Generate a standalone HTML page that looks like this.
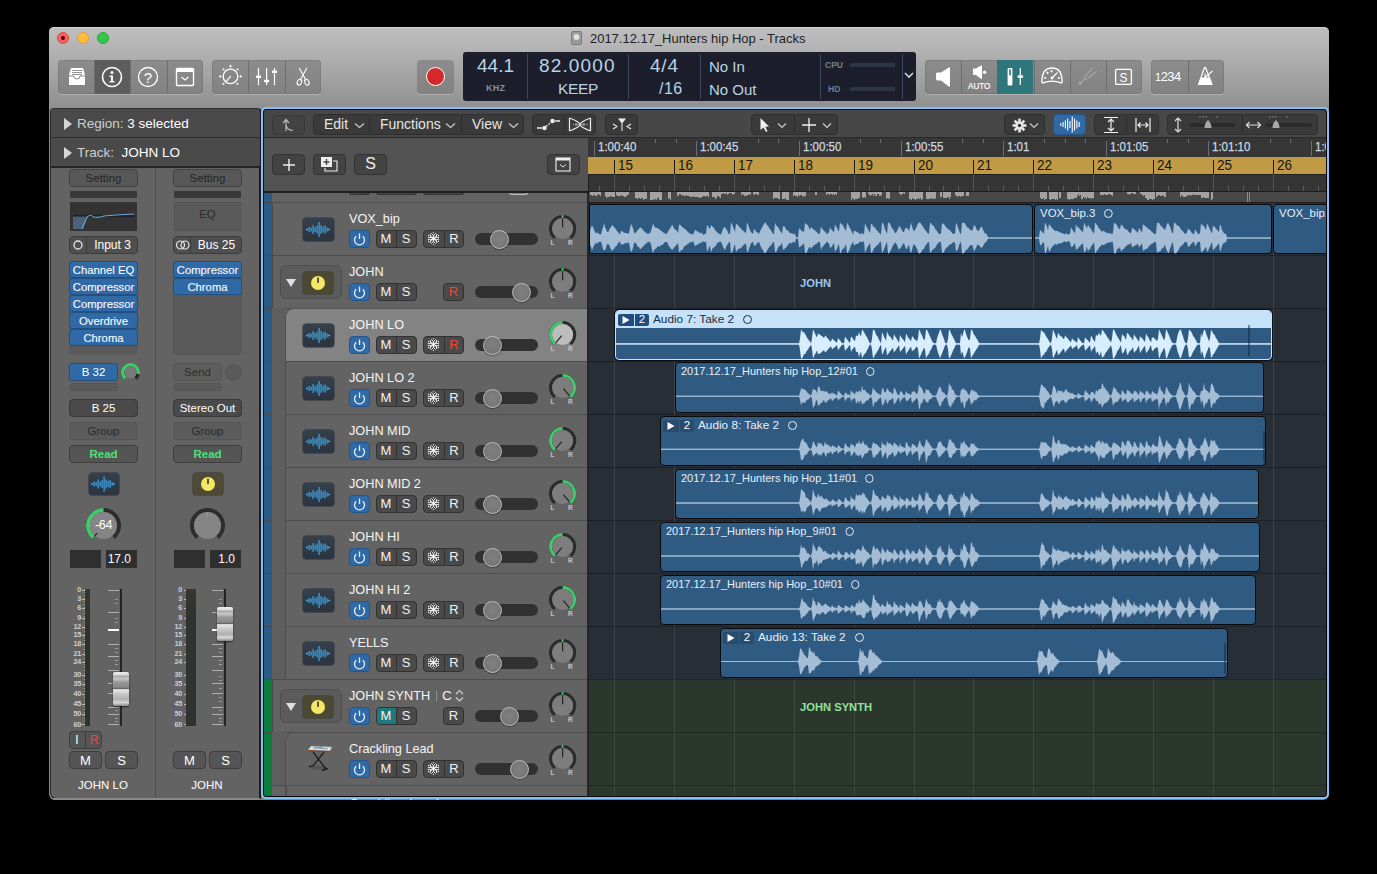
<!DOCTYPE html><html><head><meta charset="utf-8"><style>
html,body{margin:0;padding:0;background:#000;width:1377px;height:874px;overflow:hidden;}
body{font-family:"Liberation Sans",sans-serif;position:relative;}
div,svg{box-sizing:border-box;}
.t{position:absolute;white-space:nowrap;}
</style></head><body>
<div style="position:absolute;left:49px;top:27px;width:1280px;height:773px;background:#858585;border-radius:5px 5px 6px 6px;overflow:hidden;"></div>
<div style="position:absolute;left:49px;top:27px;width:1280px;height:82px;background:linear-gradient(#bebebe,#b6b6b6 20%,#a3a3a3 60%,#8f8f8f);border-radius:5px 5px 0 0;border-top:1px solid #d0d0d0;"></div>
<div style="position:absolute;left:57px;top:32px;width:12px;height:12px;background:#fc615d;border-radius:50%;border:0.5px solid #de4a46;"></div>
<div style="position:absolute;left:77px;top:32px;width:12px;height:12px;background:#fdbc40;border-radius:50%;border:0.5px solid #dea236;"></div>
<div style="position:absolute;left:97px;top:32px;width:12px;height:12px;background:#34c84a;border-radius:50%;border:0.5px solid #27a63a;"></div>
<div style="position:absolute;left:61px;top:36px;width:4px;height:4px;background:#4d0000;border-radius:50%;"></div>
<svg style="position:absolute;left:571px;top:31px;" width="12" height="15" viewBox="0 0 12 15"><rect x="0.5" y="0.5" width="10" height="13" rx="1" fill="#9a9a9a" stroke="#7a7a7a"/><circle cx="5.5" cy="6" r="3" fill="#e0e0e0"/></svg>
<div style="position:absolute;left:590px;top:31px;white-space:nowrap;font-size:13.5px;color:#222;letter-spacing:0px;transform:scaleX(0.96);transform-origin:0 0;">2017.12.17_Hunters hip Hop - Tracks</div>
<div style="position:absolute;left:58px;top:60px;width:145px;height:34px;background:linear-gradient(#8c8c8c,#828282);border-radius:4px;box-shadow:0 1px 0 rgba(255,255,255,0.25), inset 0 0 0 0.5px rgba(0,0,0,0.15);"></div>
<div style="position:absolute;left:94px;top:60px;width:1px;height:34px;background:#6e6e6e;"></div>
<div style="position:absolute;left:130px;top:60px;width:1px;height:34px;background:#6e6e6e;"></div>
<div style="position:absolute;left:167px;top:60px;width:1px;height:34px;background:#6e6e6e;"></div>
<div style="position:absolute;left:95px;top:60px;width:35px;height:34px;background:#5d5d5d;"></div>
<svg style="position:absolute;left:67px;top:66px;" width="20" height="22" viewBox="0 0 20 22"><path d="M2 9 L4 2 H16 L18 9 V19 H2 Z" fill="#fff"/><path d="M5 4.5H15M5 6.5H15M5 8.5H15" stroke="#888" stroke-width="0.9"/><path d="M2 10 H7 Q7 13 10 13 Q13 13 13 10 H18" stroke="#888" stroke-width="1" fill="none"/></svg>
<svg style="position:absolute;left:101px;top:66px;" width="22" height="22" viewBox="0 0 22 22"><circle cx="11" cy="11" r="9.5" stroke="#fff" stroke-width="1.6" fill="none"/><circle cx="11" cy="6.5" r="1.5" fill="#fff"/><path d="M8.5 9.5H12V15H13.5V16.5H8.5V15H10V11H8.5Z" fill="#fff"/></svg>
<svg style="position:absolute;left:137px;top:66px;" width="22" height="22" viewBox="0 0 22 22"><circle cx="11" cy="11" r="9.5" stroke="#fff" stroke-width="1.3" fill="none"/><text x="11" y="16.5" font-size="15" text-anchor="middle" fill="#fff" font-family="Liberation Sans">?</text></svg>
<svg style="position:absolute;left:175px;top:67px;" width="20" height="20" viewBox="0 0 20 20"><rect x="1.5" y="1.5" width="17" height="17" rx="1" stroke="#fff" stroke-width="1.4" fill="none"/><rect x="1.5" y="1.5" width="17" height="3.5" fill="#fff"/><path d="M6.5 10 L10 13 L13.5 10" stroke="#fff" stroke-width="1.2" fill="none"/></svg>
<div style="position:absolute;left:212px;top:60px;width:109px;height:34px;background:linear-gradient(#8c8c8c,#828282);border-radius:4px;box-shadow:0 1px 0 rgba(255,255,255,0.25), inset 0 0 0 0.5px rgba(0,0,0,0.15);"></div>
<div style="position:absolute;left:248px;top:60px;width:1px;height:34px;background:#6e6e6e;"></div>
<div style="position:absolute;left:285px;top:60px;width:1px;height:34px;background:#6e6e6e;"></div>
<svg style="position:absolute;left:218px;top:62px;" width="26" height="28" viewBox="0 0 26 28"><circle cx="12.5" cy="14.4" r="7.3" stroke="#fff" stroke-width="1.3" fill="none"/><path d="M8 19.6 L12.8 14.2" stroke="#fff" stroke-width="1.2"/><path d="M12.5 2.8V5.6M11.1 4.2H13.9M2.3 13V15.8M0.9 14.4H3.7M22.7 13V15.8M21.3 14.4H24.1" stroke="#fff" stroke-width="0.9"/><rect x="4.6" y="6.5" width="1.8" height="1.8" fill="#fff"/><rect x="18.6" y="6.5" width="1.8" height="1.8" fill="#fff"/><rect x="4.6" y="20.9" width="1.8" height="1.8" fill="#fff"/><rect x="18.6" y="20.9" width="1.8" height="1.8" fill="#fff"/></svg>
<svg style="position:absolute;left:250px;top:62px;" width="32" height="28" viewBox="0 0 32 28"><path d="M8.5 6V23M16.6 6V23M24.5 6V23" stroke="#fff" stroke-width="1.2"/><rect x="6" y="13.6" width="5" height="2.4" fill="#fff"/><rect x="14.1" y="17.8" width="5" height="2.4" fill="#fff"/><rect x="22" y="8.6" width="5" height="2.4" fill="#fff"/></svg>
<svg style="position:absolute;left:294px;top:62px;" width="20" height="28" viewBox="0 0 20 28"><path d="M5.2 6 L11.6 17.6 M12.9 6 L6.5 17.6" stroke="#fff" stroke-width="1.1" fill="none"/><ellipse cx="5.4" cy="20.2" rx="2.1" ry="3" transform="rotate(20 5.4 20.2)" stroke="#fff" stroke-width="1.1" fill="none"/><ellipse cx="12.9" cy="20.2" rx="2.1" ry="3" transform="rotate(-20 12.9 20.2)" stroke="#fff" stroke-width="1.1" fill="none"/></svg>
<div style="position:absolute;left:417px;top:60px;width:37px;height:34px;background:linear-gradient(#8c8c8c,#828282);border-radius:4px;box-shadow:0 1px 0 rgba(255,255,255,0.25);"></div>
<div style="position:absolute;left:426px;top:67px;width:19px;height:19px;background:#d42a2a;border-radius:50%;border:1.5px solid #fff;"></div>
<div style="position:absolute;left:463px;top:52px;width:453px;height:49px;background:#1c1f2b;border-radius:3px;"></div>
<div style="position:absolute;left:527px;top:54px;width:1px;height:45px;background:#3a4a60;"></div>
<div style="position:absolute;left:628px;top:54px;width:1px;height:45px;background:#3a4a60;"></div>
<div style="position:absolute;left:700px;top:54px;width:1px;height:45px;background:#3a4a60;"></div>
<div style="position:absolute;left:820px;top:54px;width:1px;height:45px;background:#3a4a60;"></div>
<div style="position:absolute;left:902px;top:54px;width:1px;height:45px;background:#3a4a60;"></div>
<div style="position:absolute;left:477px;top:55px;white-space:nowrap;font-size:19px;color:#b9d3e6;">44.1</div>
<div style="position:absolute;left:486px;top:83px;white-space:nowrap;font-size:9px;color:#7d8fa3;font-weight:bold;letter-spacing:0.3px;">KHZ</div>
<div style="position:absolute;left:539px;top:55px;white-space:nowrap;font-size:19px;color:#b9d3e6;letter-spacing:1.15px;">82.0000</div>
<div style="position:absolute;left:558px;top:80px;white-space:nowrap;font-size:15.5px;color:#b9d3e6;letter-spacing:-0.3px;">KEEP</div>
<div style="position:absolute;left:650px;top:55px;white-space:nowrap;font-size:19px;color:#b9d3e6;letter-spacing:0.8px;">4/4</div>
<div style="position:absolute;left:659px;top:80px;white-space:nowrap;font-size:16px;color:#b9d3e6;letter-spacing:0.5px;">/16</div>
<div style="position:absolute;left:709px;top:58px;white-space:nowrap;font-size:15px;color:#b9d3e6;">No In</div>
<div style="position:absolute;left:709px;top:81px;white-space:nowrap;font-size:15px;color:#b9d3e6;">No Out</div>
<div style="position:absolute;left:825px;top:60px;white-space:nowrap;font-size:8.5px;color:#6f7f92;font-weight:bold;">CPU</div>
<div style="position:absolute;left:828px;top:84px;white-space:nowrap;font-size:8.5px;color:#6f7f92;font-weight:bold;">HD</div>
<div style="position:absolute;left:850px;top:63px;width:45px;height:4px;background:#2d3545;"></div>
<div style="position:absolute;left:850px;top:87px;width:45px;height:4px;background:#2d3545;"></div>
<svg style="position:absolute;left:903px;top:70px;" width="12" height="10" viewBox="0 0 12 10"><path d="M2 3 L6 7 L10 3" stroke="#c8d8e8" stroke-width="1.6" fill="none"/></svg>
<div style="position:absolute;left:925px;top:60px;width:217px;height:34px;background:linear-gradient(#8c8c8c,#828282);border-radius:4px;box-shadow:0 1px 0 rgba(255,255,255,0.25), inset 0 0 0 0.5px rgba(0,0,0,0.15);"></div>
<div style="position:absolute;left:961px;top:60px;width:1px;height:34px;background:#6e6e6e;"></div>
<div style="position:absolute;left:997px;top:60px;width:1px;height:34px;background:#6e6e6e;"></div>
<div style="position:absolute;left:1034px;top:60px;width:1px;height:34px;background:#6e6e6e;"></div>
<div style="position:absolute;left:1070px;top:60px;width:1px;height:34px;background:#6e6e6e;"></div>
<div style="position:absolute;left:1106px;top:60px;width:1px;height:34px;background:#6e6e6e;"></div>
<div style="position:absolute;left:997px;top:60px;width:36px;height:34px;background:#2f767c;"></div>
<svg style="position:absolute;left:934px;top:64px;" width="20" height="26" viewBox="0 0 20 26"><path d="M3.5 8.5 Q2 8.5 2 10 V15 Q2 16.5 3.5 16.5 H7 L14 22 Q16 23.5 16 21.5 V4.5 Q16 2.5 14 4 L7 8.5 Z" fill="#fff"/></svg>
<svg style="position:absolute;left:970px;top:64px;" width="20" height="17" viewBox="0 0 20 17"><path d="M3.8 4.5 Q3 4.5 3 5.5 V10 Q3 11 4 11 H6 L10.5 14.6 Q12 15.6 12 14 V2.2 Q12 0.8 10.5 1.8 L6 4.5 Z" fill="#fff"/><circle cx="14.6" cy="8.2" r="1.7" fill="#fff"/></svg>
<div style="position:absolute;left:968px;top:80.5px;white-space:nowrap;font-size:8.8px;color:#fff;transform:scaleX(0.92);transform-origin:0 0;-webkit-text-stroke:0.2px #fff;">AUTO</div>
<svg style="position:absolute;left:1003px;top:66px;" width="24" height="22" viewBox="0 0 24 22"><rect x="4.6" y="2" width="4.8" height="17.5" rx="1" fill="#fff"/><rect x="6.2" y="3.2" width="1.6" height="6.2" fill="#2f767c"/><path d="M17.3 2V19" stroke="#fff" stroke-width="1.2"/><rect x="14.7" y="9.4" width="5.4" height="2.4" fill="#fff"/></svg>
<svg style="position:absolute;left:1040px;top:65px;" width="24" height="22" viewBox="0 0 24 22"><path d="M3 17.8 Q1.8 17.8 1.9 16.5 Q2 3 12 3 Q22 3 22.1 16.5 Q22.2 17.8 21 17.8 Q12 14.5 3 17.8 Z" stroke="#fff" stroke-width="1.4" fill="none" stroke-linejoin="round"/><circle cx="12" cy="13" r="1.4" fill="#fff"/><path d="M12 13 L17 8" stroke="#fff" stroke-width="1.3" stroke-linecap="round"/><path d="M7.5 6.5v2.6M6.2 7.8h2.6M11.6 4.8v2.6M10.3 6.1h2.6" stroke="#fff" stroke-width="0.9"/><rect x="4.3" y="12" width="1.8" height="1.8" fill="#fff"/><rect x="18" y="12" width="1.8" height="1.8" fill="#fff"/></svg>
<svg style="position:absolute;left:1075px;top:66px;" width="24" height="22" viewBox="0 0 24 22"><circle cx="5.2" cy="17.3" r="1.5" fill="#a9a9a9"/><path d="M5.2 17.3 L9.6 12.8" stroke="#a9a9a9" stroke-width="1.2"/><path d="M18 1.5 L10.2 10.2 Q8.8 12.2 10 13 Q11 13.8 12.8 12.3 L21.8 5.4" stroke="#a9a9a9" stroke-width="1.1" fill="none"/></svg>
<svg style="position:absolute;left:1114px;top:68px;" width="19" height="18" viewBox="0 0 19 18"><rect x="1.6" y="1.3" width="15.8" height="15" rx="1.2" stroke="#fff" stroke-width="1.3" fill="none"/><text x="9.5" y="13.6" font-size="12" text-anchor="middle" fill="#fff" font-family="Liberation Sans">S</text></svg>
<div style="position:absolute;left:1151px;top:60px;width:73px;height:34px;background:linear-gradient(#8c8c8c,#828282);border-radius:4px;box-shadow:0 1px 0 rgba(255,255,255,0.25), inset 0 0 0 0.5px rgba(0,0,0,0.15);"></div>
<div style="position:absolute;left:1188px;top:60px;width:1px;height:34px;background:#6e6e6e;"></div>
<div style="position:absolute;left:1155px;top:69px;white-space:nowrap;font-size:13px;color:#fff;letter-spacing:-0.5px;"><span style='font-size:11px'>1</span>234</div>
<svg style="position:absolute;left:1196px;top:66px;" width="20" height="20" viewBox="0 0 20 20"><path d="M2.5 18.5 L8.5 1.5 H9.5 L16 18.5 Z" stroke="#fff" stroke-width="1.2" fill="none" stroke-linejoin="round"/><path d="M2.5 18.5 L5 11.5 H13.4 L16 18.5 Z" fill="#fff"/><path d="M9 12 V7.5 M8.5 12 L16.5 5" stroke="#fff" stroke-width="1.1"/></svg>
<div style="position:absolute;left:51px;top:109px;width:209px;height:689px;background:#636363;border-radius:3px 3px 0 5px;box-shadow:0 0 0 1px #2b2b2b;"></div>
<div style="position:absolute;left:259px;top:109px;width:2px;height:690px;background:#1e1c1b;"></div>
<div style="position:absolute;left:51px;top:109px;width:209px;height:29px;background:#4a4a4a;border-bottom:1px solid #2c2c2c;border-radius:3px 3px 0 0;"></div>
<div style="position:absolute;left:51px;top:138px;width:209px;height:30px;background:#4a4a4a;border-bottom:2px solid #252525;"></div>
<svg style="position:absolute;left:63px;top:117px;" width="10" height="14" viewBox="0 0 10 14"><path d="M1 1 L9 7 L1 13Z" fill="#d6d6d6"/></svg>
<div style="position:absolute;left:77px;top:116px;white-space:nowrap;font-size:13.5px;"><span style="color:#cfcfcf">Region:</span> <span style="color:#fff">3 selected</span></div>
<svg style="position:absolute;left:63px;top:146px;" width="10" height="14" viewBox="0 0 10 14"><path d="M1 1 L9 7 L1 13Z" fill="#d6d6d6"/></svg>
<div style="position:absolute;left:77px;top:145px;white-space:nowrap;font-size:13.5px;"><span style="color:#cfcfcf">Track:</span>&nbsp; <span style="color:#fff">JOHN LO</span></div>
<div style="position:absolute;left:155px;top:168px;width:1px;height:630px;background:#4e4e4e;"></div>
<div style="position:absolute;left:69px;top:169px;width:69px;height:18px;background:#585858;border:1px solid #434343;border-radius:4px;"><div style="position:absolute;left:0;right:0;top:0;bottom:0;display:flex;align-items:center;justify-content:center;font-size:11.5px;color:#262626;">Setting</div></div>
<div style="position:absolute;left:70px;top:191px;width:67px;height:7px;background:#383838;border-radius:1px;"></div>
<div style="position:absolute;left:173px;top:169px;width:69px;height:18px;background:#585858;border:1px solid #434343;border-radius:4px;"><div style="position:absolute;left:0;right:0;top:0;bottom:0;display:flex;align-items:center;justify-content:center;font-size:11.5px;color:#262626;">Setting</div></div>
<div style="position:absolute;left:174px;top:191px;width:67px;height:7px;background:#383838;border-radius:1px;"></div>
<div style="position:absolute;left:70px;top:202px;width:67px;height:29px;background:#333;"></div>
<svg style="position:absolute;left:70px;top:202px;" width="67" height="29" viewBox="0 0 67 29"><path d="M3 14 H16 L13 27 H3Z" fill="#4c6178"/><path d="M3 14 H64" stroke="#111" stroke-width="1"/><path d="M12 27 L17 15 Q20 12 24 15 Q28 16 34 14 Q45 13 64 12" stroke="#6aa6e0" stroke-width="1.2" fill="none"/></svg>
<div style="position:absolute;left:174px;top:202px;width:67px;height:29px;background:#5a5a5a;border:1px solid #555;"></div>
<div style="position:absolute;left:174px;top:208px;white-space:nowrap;font-size:11.5px;color:#2a2a2a;width:67px;text-align:center;">EQ</div>
<div style="position:absolute;left:69px;top:236px;width:69px;height:18px;background:#4f4f4f;border:1px solid #3c3c3c;border-radius:4px;"></div>
<div style="position:absolute;left:86px;top:237px;width:1px;height:16px;background:#3a3a3a;"></div>
<svg style="position:absolute;left:72px;top:239px;" width="12" height="12" viewBox="0 0 12 12"><circle cx="6" cy="6" r="4" stroke="#e8e8e8" stroke-width="1.3" fill="none"/></svg>
<div style="position:absolute;left:87px;top:238px;white-space:nowrap;font-size:12px;color:#fff;width:51px;text-align:center;">Input 3</div>
<div style="position:absolute;left:173px;top:236px;width:69px;height:18px;background:#4f4f4f;border:1px solid #3c3c3c;border-radius:4px;"></div>
<div style="position:absolute;left:190px;top:237px;width:1px;height:16px;background:#3a3a3a;"></div>
<svg style="position:absolute;left:175px;top:239px;" width="16" height="12" viewBox="0 0 16 12"><circle cx="5.5" cy="6" r="4" stroke="#e8e8e8" stroke-width="1.2" fill="none"/><circle cx="10" cy="6" r="4" stroke="#e8e8e8" stroke-width="1.2" fill="none"/></svg>
<div style="position:absolute;left:191px;top:238px;white-space:nowrap;font-size:12px;color:#fff;width:51px;text-align:center;">Bus 25</div>
<div style="position:absolute;left:69px;top:261px;width:69px;height:94px;background:#5a5a5a;border-radius:4px;"></div>
<div style="position:absolute;left:69px;top:261px;width:69px;height:17px;background:#2f6aa6;border:1px solid #254f7e;border-radius:3px;"><div style="position:absolute;left:0;right:0;top:2px;text-align:center;font-size:11.3px;color:#f6f9fc;letter-spacing:0px;-webkit-text-stroke:0.12px #fff;">Channel EQ</div></div>
<div style="position:absolute;left:69px;top:278px;width:69px;height:17px;background:#2f6aa6;border:1px solid #254f7e;border-radius:3px;"><div style="position:absolute;left:0;right:0;top:2px;text-align:center;font-size:11.3px;color:#f6f9fc;letter-spacing:0px;-webkit-text-stroke:0.12px #fff;">Compressor</div></div>
<div style="position:absolute;left:69px;top:295px;width:69px;height:17px;background:#2f6aa6;border:1px solid #254f7e;border-radius:3px;"><div style="position:absolute;left:0;right:0;top:2px;text-align:center;font-size:11.3px;color:#f6f9fc;letter-spacing:0px;-webkit-text-stroke:0.12px #fff;">Compressor</div></div>
<div style="position:absolute;left:69px;top:312px;width:69px;height:17px;background:#2f6aa6;border:1px solid #254f7e;border-radius:3px;"><div style="position:absolute;left:0;right:0;top:2px;text-align:center;font-size:11.3px;color:#f6f9fc;letter-spacing:0px;-webkit-text-stroke:0.12px #fff;">Overdrive</div></div>
<div style="position:absolute;left:69px;top:329px;width:69px;height:17px;background:#2f6aa6;border:1px solid #254f7e;border-radius:3px;"><div style="position:absolute;left:0;right:0;top:2px;text-align:center;font-size:11.3px;color:#f6f9fc;letter-spacing:0px;-webkit-text-stroke:0.12px #fff;">Chroma</div></div>
<div style="position:absolute;left:173px;top:261px;width:69px;height:94px;background:#5a5a5a;border-radius:4px;border:1px solid #575757;"></div>
<div style="position:absolute;left:173px;top:261px;width:69px;height:17px;background:#2f6aa6;border:1px solid #254f7e;border-radius:3px;"><div style="position:absolute;left:0;right:0;top:2px;text-align:center;font-size:11.3px;color:#f6f9fc;letter-spacing:0px;-webkit-text-stroke:0.12px #fff;">Compressor</div></div>
<div style="position:absolute;left:173px;top:278px;width:69px;height:17px;background:#2f6aa6;border:1px solid #254f7e;border-radius:3px;"><div style="position:absolute;left:0;right:0;top:2px;text-align:center;font-size:11.3px;color:#f6f9fc;letter-spacing:0px;-webkit-text-stroke:0.12px #fff;">Chroma</div></div>
<div style="position:absolute;left:69px;top:363px;width:49px;height:18px;background:#2f6aa6;border:1px solid #254f7e;border-radius:3px;"><div style="position:absolute;left:0;right:0;top:2px;text-align:center;font-size:11.5px;color:#fff;">B 32</div></div>
<div style="position:absolute;left:70px;top:383px;width:48px;height:8px;background:#5a5a5a;border:1px solid #555;border-radius:3px;"></div>
<svg style="position:absolute;left:118.5px;top:360.5px;" width="23.0" height="23.0" viewBox="0 0 23.0 23.0"><path d="M6.52 17.44 A7.75 7.75 0 1 1 16.48 17.44" stroke="#2b2b2b" stroke-width="3.5" fill="none"/><path d="M6.52 17.44 A7.75 7.75 0 1 1 19.13 12.85" stroke="#3fcb6a" stroke-width="3.5" fill="none"/><circle cx="11.5" cy="11.5" r="6.0" fill="#7a7a7a"/></svg>
<div style="position:absolute;left:173px;top:363px;width:49px;height:18px;background:#585858;border:1px solid #434343;border-radius:4px;background:#5d5d5d;border-color:#555;"><div style="position:absolute;left:0;right:0;top:0;bottom:0;display:flex;align-items:center;justify-content:center;font-size:11.5px;color:#2e2e2e;">Send</div></div>
<div style="position:absolute;left:174px;top:383px;width:48px;height:8px;background:#5a5a5a;border:1px solid #555;border-radius:3px;"></div>
<div style="position:absolute;left:225px;top:364px;width:17px;height:17px;background:#5a5a5a;border-radius:50%;border:1px solid #545454;"></div>
<div style="position:absolute;left:69px;top:399px;width:69px;height:18px;background:#585858;border:1px solid #434343;border-radius:4px;background:#4a4a4a;border-color:#383838;"><div style="position:absolute;left:0;right:0;top:0;bottom:0;display:flex;align-items:center;justify-content:center;font-size:11.5px;color:#fff;">B 25</div></div>
<div style="position:absolute;left:173px;top:399px;width:69px;height:18px;background:#585858;border:1px solid #434343;border-radius:4px;background:#4a4a4a;border-color:#383838;"><div style="position:absolute;left:0;right:0;top:0;bottom:0;display:flex;align-items:center;justify-content:center;font-size:11.5px;color:#fff;">Stereo Out</div></div>
<div style="position:absolute;left:70px;top:422px;width:67px;height:18px;background:#5b5b5b;border:1px solid #555;"><div style="position:absolute;left:0;right:0;top:2px;text-align:center;font-size:11.5px;color:#2a2a2a;">Group</div></div>
<div style="position:absolute;left:69px;top:445px;width:69px;height:18px;background:#585858;border:1px solid #434343;border-radius:4px;background:#555;border-color:#3e3e3e;"><div style="position:absolute;left:0;right:0;top:0;bottom:0;display:flex;align-items:center;justify-content:center;font-size:11.5px;color:#4fe07a;font-weight:bold;">Read</div></div>
<div style="position:absolute;left:174px;top:422px;width:67px;height:18px;background:#5b5b5b;border:1px solid #555;"><div style="position:absolute;left:0;right:0;top:2px;text-align:center;font-size:11.5px;color:#2a2a2a;">Group</div></div>
<div style="position:absolute;left:173px;top:445px;width:69px;height:18px;background:#585858;border:1px solid #434343;border-radius:4px;background:#555;border-color:#3e3e3e;"><div style="position:absolute;left:0;right:0;top:0;bottom:0;display:flex;align-items:center;justify-content:center;font-size:11.5px;color:#4fe07a;font-weight:bold;">Read</div></div>
<div style="position:absolute;left:89px;top:473px;width:30px;height:22px;background:linear-gradient(#34404c,#2b3440);border-radius:3px;box-shadow:0 0 0 0.5px #2a2f36;"></div>
<svg style="position:absolute;left:89px;top:473px;" width="30" height="22" viewBox="0 0 30 22"><circle cx="3.0" cy="11.0" r="1.1" fill="#3ba6ea"/><rect x="4.5" y="8.50" width="1.2" height="5.00" fill="#3ba6ea"/><rect x="6.5" y="9.00" width="1.2" height="4.00" fill="#3ba6ea"/><rect x="8.5" y="6.50" width="1.2" height="9.00" fill="#3ba6ea"/><rect x="10.5" y="8.50" width="1.2" height="5.00" fill="#3ba6ea"/><rect x="12.5" y="7.00" width="1.2" height="8.00" fill="#3ba6ea"/><rect x="14.5" y="3.50" width="1.2" height="15.00" fill="#3ba6ea"/><rect x="16.5" y="6.50" width="1.2" height="9.00" fill="#3ba6ea"/><rect x="18.5" y="8.00" width="1.2" height="6.00" fill="#3ba6ea"/><rect x="20.5" y="7.00" width="1.2" height="8.00" fill="#3ba6ea"/><rect x="22.5" y="9.00" width="1.2" height="4.00" fill="#3ba6ea"/><circle cx="25.0" cy="11.0" r="1.1" fill="#3ba6ea"/></svg>
<div style="position:absolute;left:193px;top:473px;width:30px;height:22px;background:#4e4a35;border-radius:3px;box-shadow:0 0 0 0.5px #333;"></div>
<svg style="position:absolute;left:199px;top:476px;" width="18" height="16" viewBox="0 0 18 16"><circle cx="9" cy="8" r="7" fill="#f2e866"/><path d="M9 2.5 V8" stroke="#333" stroke-width="1.6"/></svg>
<svg style="position:absolute;left:84.0px;top:505.5px;" width="39.0" height="39.0" viewBox="0 0 39.0 39.0"><path d="M9.54 31.37 A15.5 15.5 0 1 1 29.46 31.37" stroke="#2d2d2d" stroke-width="4" fill="none"/><path d="M9.54 31.37 A15.5 15.5 0 0 1 19.50 4.00" stroke="#3fcb6a" stroke-width="4" fill="none"/><circle cx="19.5" cy="19.5" r="13.5" fill="#858585"/><path d="M12.99 27.26 L10.82 29.84" stroke="#222" stroke-width="1.2"/></svg>
<div style="position:absolute;left:83px;top:518px;white-space:nowrap;font-size:12.5px;color:#fff;width:41px;text-align:center;letter-spacing:-0.3px;">-64</div>
<svg style="position:absolute;left:188.0px;top:505.5px;" width="39.0" height="39.0" viewBox="0 0 39.0 39.0"><path d="M9.54 31.37 A15.5 15.5 0 1 1 29.46 31.37" stroke="#2d2d2d" stroke-width="4" fill="none"/><circle cx="19.5" cy="19.5" r="13.5" fill="#858585"/><path d="M19.50 11.40 L19.50 6.00" stroke="#3fcb6a" stroke-width="1.2"/></svg>
<div style="position:absolute;left:70px;top:550px;width:31px;height:18px;background:#2f2f2f;"></div>
<div style="position:absolute;left:106px;top:550px;width:31px;height:18px;background:#2f2f2f;"><div style="position:absolute;right:6px;top:2px;font-size:12px;color:#fff;">17.0</div></div>
<div style="position:absolute;left:174px;top:550px;width:31px;height:18px;background:#2f2f2f;"></div>
<div style="position:absolute;left:210px;top:550px;width:31px;height:18px;background:#2f2f2f;"><div style="position:absolute;right:6px;top:2px;font-size:12px;color:#fff;">1.0</div></div>
<div style="position:absolute;left:49px;top:585.4px;white-space:nowrap;font-size:7.2px;font-weight:bold;color:#cfcfcf;width:32px;text-align:right;letter-spacing:-0.2px;">0</div>
<div style="position:absolute;left:82px;top:590px;width:2.5px;height:1px;background:#bdbdbd;"></div>
<div style="position:absolute;left:49px;top:594.2px;white-space:nowrap;font-size:7.2px;font-weight:bold;color:#cfcfcf;width:32px;text-align:right;letter-spacing:-0.2px;">3</div>
<div style="position:absolute;left:82px;top:599px;width:2.5px;height:1px;background:#bdbdbd;"></div>
<div style="position:absolute;left:49px;top:603.4px;white-space:nowrap;font-size:7.2px;font-weight:bold;color:#cfcfcf;width:32px;text-align:right;letter-spacing:-0.2px;">6</div>
<div style="position:absolute;left:82px;top:608px;width:2.5px;height:1px;background:#bdbdbd;"></div>
<div style="position:absolute;left:49px;top:612.5px;white-space:nowrap;font-size:7.2px;font-weight:bold;color:#cfcfcf;width:32px;text-align:right;letter-spacing:-0.2px;">9</div>
<div style="position:absolute;left:82px;top:618px;width:2.5px;height:1px;background:#bdbdbd;"></div>
<div style="position:absolute;left:49px;top:621.6px;white-space:nowrap;font-size:7.2px;font-weight:bold;color:#cfcfcf;width:32px;text-align:right;letter-spacing:-0.2px;">12</div>
<div style="position:absolute;left:82px;top:627px;width:2.5px;height:1px;background:#bdbdbd;"></div>
<div style="position:absolute;left:49px;top:630.4px;white-space:nowrap;font-size:7.2px;font-weight:bold;color:#cfcfcf;width:32px;text-align:right;letter-spacing:-0.2px;">15</div>
<div style="position:absolute;left:82px;top:635px;width:2.5px;height:1px;background:#bdbdbd;"></div>
<div style="position:absolute;left:49px;top:639.4px;white-space:nowrap;font-size:7.2px;font-weight:bold;color:#cfcfcf;width:32px;text-align:right;letter-spacing:-0.2px;">18</div>
<div style="position:absolute;left:82px;top:644px;width:2.5px;height:1px;background:#bdbdbd;"></div>
<div style="position:absolute;left:49px;top:648.5px;white-space:nowrap;font-size:7.2px;font-weight:bold;color:#cfcfcf;width:32px;text-align:right;letter-spacing:-0.2px;">21</div>
<div style="position:absolute;left:82px;top:654px;width:2.5px;height:1px;background:#bdbdbd;"></div>
<div style="position:absolute;left:49px;top:657.3px;white-space:nowrap;font-size:7.2px;font-weight:bold;color:#cfcfcf;width:32px;text-align:right;letter-spacing:-0.2px;">24</div>
<div style="position:absolute;left:82px;top:662px;width:2.5px;height:1px;background:#bdbdbd;"></div>
<div style="position:absolute;left:49px;top:669.6px;white-space:nowrap;font-size:7.2px;font-weight:bold;color:#cfcfcf;width:32px;text-align:right;letter-spacing:-0.2px;">30</div>
<div style="position:absolute;left:82px;top:675px;width:2.5px;height:1px;background:#bdbdbd;"></div>
<div style="position:absolute;left:49px;top:679.4px;white-space:nowrap;font-size:7.2px;font-weight:bold;color:#cfcfcf;width:32px;text-align:right;letter-spacing:-0.2px;">35</div>
<div style="position:absolute;left:82px;top:684px;width:2.5px;height:1px;background:#bdbdbd;"></div>
<div style="position:absolute;left:49px;top:689.3px;white-space:nowrap;font-size:7.2px;font-weight:bold;color:#cfcfcf;width:32px;text-align:right;letter-spacing:-0.2px;">40</div>
<div style="position:absolute;left:82px;top:694px;width:2.5px;height:1px;background:#bdbdbd;"></div>
<div style="position:absolute;left:49px;top:699.4px;white-space:nowrap;font-size:7.2px;font-weight:bold;color:#cfcfcf;width:32px;text-align:right;letter-spacing:-0.2px;">45</div>
<div style="position:absolute;left:82px;top:704px;width:2.5px;height:1px;background:#bdbdbd;"></div>
<div style="position:absolute;left:49px;top:709.4px;white-space:nowrap;font-size:7.2px;font-weight:bold;color:#cfcfcf;width:32px;text-align:right;letter-spacing:-0.2px;">50</div>
<div style="position:absolute;left:82px;top:714px;width:2.5px;height:1px;background:#bdbdbd;"></div>
<div style="position:absolute;left:49px;top:719.5px;white-space:nowrap;font-size:7.2px;font-weight:bold;color:#cfcfcf;width:32px;text-align:right;letter-spacing:-0.2px;">60</div>
<div style="position:absolute;left:82px;top:724px;width:2.5px;height:1px;background:#bdbdbd;"></div>
<div style="position:absolute;left:84px;top:589px;width:1px;height:137px;background:repeating-linear-gradient(#b0b0b0 0 1px,transparent 1px 3px);opacity:0.8;"></div>
<div style="position:absolute;left:85px;top:589px;width:5px;height:137px;background:linear-gradient(#3a3530,#2e322e 30%);"></div>
<div style="position:absolute;left:120px;top:589px;width:2px;height:137px;background:#242424;"></div>
<div style="position:absolute;left:108px;top:590px;width:11px;height:1px;background:#b0b0b0;"></div>
<div style="position:absolute;left:108px;top:612px;width:11px;height:1px;background:#b0b0b0;"></div>
<div style="position:absolute;left:108px;top:629px;width:11px;height:1px;background:#fff;height:1.5px;"></div>
<div style="position:absolute;left:108px;top:644px;width:11px;height:1px;background:#b0b0b0;"></div>
<div style="position:absolute;left:108px;top:656px;width:11px;height:1px;background:#b0b0b0;"></div>
<div style="position:absolute;left:108px;top:670px;width:11px;height:1px;background:#b0b0b0;"></div>
<div style="position:absolute;left:108px;top:683px;width:11px;height:1px;background:#b0b0b0;"></div>
<div style="position:absolute;left:108px;top:693px;width:11px;height:1px;background:#b0b0b0;"></div>
<div style="position:absolute;left:108px;top:707px;width:11px;height:1px;background:#b0b0b0;"></div>
<div style="position:absolute;left:108px;top:714px;width:11px;height:1px;background:#b0b0b0;"></div>
<div style="position:absolute;left:108px;top:724px;width:11px;height:1px;background:#b0b0b0;"></div>
<div style="position:absolute;left:115px;top:599px;width:3px;height:1px;background:#9a9a9a;"></div>
<div style="position:absolute;left:115px;top:603px;width:3px;height:1px;background:#9a9a9a;"></div>
<div style="position:absolute;left:115px;top:618px;width:3px;height:1px;background:#9a9a9a;"></div>
<div style="position:absolute;left:115px;top:622px;width:3px;height:1px;background:#9a9a9a;"></div>
<div style="position:absolute;left:115px;top:648px;width:3px;height:1px;background:#9a9a9a;"></div>
<div style="position:absolute;left:115px;top:652px;width:3px;height:1px;background:#9a9a9a;"></div>
<div style="position:absolute;left:115px;top:660px;width:3px;height:1px;background:#9a9a9a;"></div>
<div style="position:absolute;left:115px;top:664px;width:3px;height:1px;background:#9a9a9a;"></div>
<div style="position:absolute;left:115px;top:676px;width:3px;height:1px;background:#9a9a9a;"></div>
<div style="position:absolute;left:115px;top:680px;width:3px;height:1px;background:#9a9a9a;"></div>
<div style="position:absolute;left:115px;top:688px;width:3px;height:1px;background:#9a9a9a;"></div>
<div style="position:absolute;left:115px;top:697px;width:3px;height:1px;background:#9a9a9a;"></div>
<div style="position:absolute;left:115px;top:701px;width:3px;height:1px;background:#9a9a9a;"></div>
<div style="position:absolute;left:115px;top:710px;width:3px;height:1px;background:#9a9a9a;"></div>
<div style="position:absolute;left:115px;top:718px;width:3px;height:1px;background:#9a9a9a;"></div>
<div style="position:absolute;left:115px;top:721px;width:3px;height:1px;background:#9a9a9a;"></div>
<div style="position:absolute;left:113px;top:671.5px;width:16px;height:34px;background:linear-gradient(#f0f0f0 0%,#dcdcdc 8%,#a8a8a8 12%,#c8c8c8 20%,#999 30%,#8a8a8a 45%,#555 48%,#e8e8e8 52%,#c8c8c8 65%,#b0b0b0 80%,#d8d8d8 90%,#888 100%);border-radius:2px;box-shadow:0 1px 2px rgba(0,0,0,0.6);"></div>
<div style="position:absolute;left:150px;top:585.4px;white-space:nowrap;font-size:7.2px;font-weight:bold;color:#cfcfcf;width:32px;text-align:right;letter-spacing:-0.2px;">0</div>
<div style="position:absolute;left:184px;top:590px;width:2.5px;height:1px;background:#bdbdbd;"></div>
<div style="position:absolute;left:150px;top:594.2px;white-space:nowrap;font-size:7.2px;font-weight:bold;color:#cfcfcf;width:32px;text-align:right;letter-spacing:-0.2px;">3</div>
<div style="position:absolute;left:184px;top:599px;width:2.5px;height:1px;background:#bdbdbd;"></div>
<div style="position:absolute;left:150px;top:603.4px;white-space:nowrap;font-size:7.2px;font-weight:bold;color:#cfcfcf;width:32px;text-align:right;letter-spacing:-0.2px;">6</div>
<div style="position:absolute;left:184px;top:608px;width:2.5px;height:1px;background:#bdbdbd;"></div>
<div style="position:absolute;left:150px;top:612.5px;white-space:nowrap;font-size:7.2px;font-weight:bold;color:#cfcfcf;width:32px;text-align:right;letter-spacing:-0.2px;">9</div>
<div style="position:absolute;left:184px;top:618px;width:2.5px;height:1px;background:#bdbdbd;"></div>
<div style="position:absolute;left:150px;top:621.6px;white-space:nowrap;font-size:7.2px;font-weight:bold;color:#cfcfcf;width:32px;text-align:right;letter-spacing:-0.2px;">12</div>
<div style="position:absolute;left:184px;top:627px;width:2.5px;height:1px;background:#bdbdbd;"></div>
<div style="position:absolute;left:150px;top:630.4px;white-space:nowrap;font-size:7.2px;font-weight:bold;color:#cfcfcf;width:32px;text-align:right;letter-spacing:-0.2px;">15</div>
<div style="position:absolute;left:184px;top:635px;width:2.5px;height:1px;background:#bdbdbd;"></div>
<div style="position:absolute;left:150px;top:639.4px;white-space:nowrap;font-size:7.2px;font-weight:bold;color:#cfcfcf;width:32px;text-align:right;letter-spacing:-0.2px;">18</div>
<div style="position:absolute;left:184px;top:644px;width:2.5px;height:1px;background:#bdbdbd;"></div>
<div style="position:absolute;left:150px;top:648.5px;white-space:nowrap;font-size:7.2px;font-weight:bold;color:#cfcfcf;width:32px;text-align:right;letter-spacing:-0.2px;">21</div>
<div style="position:absolute;left:184px;top:654px;width:2.5px;height:1px;background:#bdbdbd;"></div>
<div style="position:absolute;left:150px;top:657.3px;white-space:nowrap;font-size:7.2px;font-weight:bold;color:#cfcfcf;width:32px;text-align:right;letter-spacing:-0.2px;">24</div>
<div style="position:absolute;left:184px;top:662px;width:2.5px;height:1px;background:#bdbdbd;"></div>
<div style="position:absolute;left:150px;top:669.6px;white-space:nowrap;font-size:7.2px;font-weight:bold;color:#cfcfcf;width:32px;text-align:right;letter-spacing:-0.2px;">30</div>
<div style="position:absolute;left:184px;top:675px;width:2.5px;height:1px;background:#bdbdbd;"></div>
<div style="position:absolute;left:150px;top:679.4px;white-space:nowrap;font-size:7.2px;font-weight:bold;color:#cfcfcf;width:32px;text-align:right;letter-spacing:-0.2px;">35</div>
<div style="position:absolute;left:184px;top:684px;width:2.5px;height:1px;background:#bdbdbd;"></div>
<div style="position:absolute;left:150px;top:689.3px;white-space:nowrap;font-size:7.2px;font-weight:bold;color:#cfcfcf;width:32px;text-align:right;letter-spacing:-0.2px;">40</div>
<div style="position:absolute;left:184px;top:694px;width:2.5px;height:1px;background:#bdbdbd;"></div>
<div style="position:absolute;left:150px;top:699.4px;white-space:nowrap;font-size:7.2px;font-weight:bold;color:#cfcfcf;width:32px;text-align:right;letter-spacing:-0.2px;">45</div>
<div style="position:absolute;left:184px;top:704px;width:2.5px;height:1px;background:#bdbdbd;"></div>
<div style="position:absolute;left:150px;top:709.4px;white-space:nowrap;font-size:7.2px;font-weight:bold;color:#cfcfcf;width:32px;text-align:right;letter-spacing:-0.2px;">50</div>
<div style="position:absolute;left:184px;top:714px;width:2.5px;height:1px;background:#bdbdbd;"></div>
<div style="position:absolute;left:150px;top:719.5px;white-space:nowrap;font-size:7.2px;font-weight:bold;color:#cfcfcf;width:32px;text-align:right;letter-spacing:-0.2px;">60</div>
<div style="position:absolute;left:184px;top:724px;width:2.5px;height:1px;background:#bdbdbd;"></div>
<div style="position:absolute;left:189px;top:589px;width:1px;height:137px;background:repeating-linear-gradient(#b0b0b0 0 1px,transparent 1px 3px);opacity:0.8;"></div>
<div style="position:absolute;left:186px;top:589px;width:10px;height:137px;background:linear-gradient(#3a3430,#2f332f 15%);"></div>
<div style="position:absolute;left:224px;top:589px;width:2px;height:137px;background:#242424;"></div>
<div style="position:absolute;left:212px;top:590px;width:11px;height:1px;background:#b0b0b0;"></div>
<div style="position:absolute;left:212px;top:612px;width:11px;height:1px;background:#b0b0b0;"></div>
<div style="position:absolute;left:212px;top:629px;width:11px;height:1px;background:#fff;height:1.5px;"></div>
<div style="position:absolute;left:212px;top:644px;width:11px;height:1px;background:#b0b0b0;"></div>
<div style="position:absolute;left:212px;top:656px;width:11px;height:1px;background:#b0b0b0;"></div>
<div style="position:absolute;left:212px;top:670px;width:11px;height:1px;background:#b0b0b0;"></div>
<div style="position:absolute;left:212px;top:683px;width:11px;height:1px;background:#b0b0b0;"></div>
<div style="position:absolute;left:212px;top:693px;width:11px;height:1px;background:#b0b0b0;"></div>
<div style="position:absolute;left:212px;top:707px;width:11px;height:1px;background:#b0b0b0;"></div>
<div style="position:absolute;left:212px;top:714px;width:11px;height:1px;background:#b0b0b0;"></div>
<div style="position:absolute;left:212px;top:724px;width:11px;height:1px;background:#b0b0b0;"></div>
<div style="position:absolute;left:219px;top:599px;width:3px;height:1px;background:#9a9a9a;"></div>
<div style="position:absolute;left:219px;top:603px;width:3px;height:1px;background:#9a9a9a;"></div>
<div style="position:absolute;left:219px;top:618px;width:3px;height:1px;background:#9a9a9a;"></div>
<div style="position:absolute;left:219px;top:622px;width:3px;height:1px;background:#9a9a9a;"></div>
<div style="position:absolute;left:219px;top:648px;width:3px;height:1px;background:#9a9a9a;"></div>
<div style="position:absolute;left:219px;top:652px;width:3px;height:1px;background:#9a9a9a;"></div>
<div style="position:absolute;left:219px;top:660px;width:3px;height:1px;background:#9a9a9a;"></div>
<div style="position:absolute;left:219px;top:664px;width:3px;height:1px;background:#9a9a9a;"></div>
<div style="position:absolute;left:219px;top:676px;width:3px;height:1px;background:#9a9a9a;"></div>
<div style="position:absolute;left:219px;top:680px;width:3px;height:1px;background:#9a9a9a;"></div>
<div style="position:absolute;left:219px;top:688px;width:3px;height:1px;background:#9a9a9a;"></div>
<div style="position:absolute;left:219px;top:697px;width:3px;height:1px;background:#9a9a9a;"></div>
<div style="position:absolute;left:219px;top:701px;width:3px;height:1px;background:#9a9a9a;"></div>
<div style="position:absolute;left:219px;top:710px;width:3px;height:1px;background:#9a9a9a;"></div>
<div style="position:absolute;left:219px;top:718px;width:3px;height:1px;background:#9a9a9a;"></div>
<div style="position:absolute;left:219px;top:721px;width:3px;height:1px;background:#9a9a9a;"></div>
<div style="position:absolute;left:217px;top:606.5px;width:16px;height:34px;background:linear-gradient(#f0f0f0 0%,#dcdcdc 8%,#a8a8a8 12%,#c8c8c8 20%,#999 30%,#8a8a8a 45%,#555 48%,#e8e8e8 52%,#c8c8c8 65%,#b0b0b0 80%,#d8d8d8 90%,#888 100%);border-radius:2px;box-shadow:0 1px 2px rgba(0,0,0,0.6);"></div>
<div style="position:absolute;left:69px;top:731px;width:33px;height:18px;background:#555;border:1px solid #3d3d3d;border-radius:4px;"></div>
<div style="position:absolute;left:85px;top:732px;width:1px;height:16px;background:#3d3d3d;"></div>
<div style="position:absolute;left:69px;top:733px;white-space:nowrap;font-size:12px;color:#fff;width:16px;text-align:center;">I</div>
<div style="position:absolute;left:86px;top:733px;white-space:nowrap;font-size:12px;color:#ff3b3b;width:16px;text-align:center;">R</div>
<div style="position:absolute;left:69px;top:751px;width:33px;height:18px;background:#585858;border:1px solid #434343;border-radius:4px;background:#555;border-color:#3d3d3d;"><div style="position:absolute;left:0;right:0;top:0;bottom:0;display:flex;align-items:center;justify-content:center;font-size:13px;color:#fff;">M</div></div>
<div style="position:absolute;left:105px;top:751px;width:33px;height:18px;background:#585858;border:1px solid #434343;border-radius:4px;background:#555;border-color:#3d3d3d;"><div style="position:absolute;left:0;right:0;top:0;bottom:0;display:flex;align-items:center;justify-content:center;font-size:13px;color:#fff;">S</div></div>
<div style="position:absolute;left:51px;top:779px;white-space:nowrap;font-size:11.5px;color:#fff;width:104px;text-align:center;">JOHN LO</div>
<div style="position:absolute;left:173px;top:751px;width:33px;height:18px;background:#585858;border:1px solid #434343;border-radius:4px;background:#555;border-color:#3d3d3d;"><div style="position:absolute;left:0;right:0;top:0;bottom:0;display:flex;align-items:center;justify-content:center;font-size:13px;color:#fff;">M</div></div>
<div style="position:absolute;left:209px;top:751px;width:33px;height:18px;background:#585858;border:1px solid #434343;border-radius:4px;background:#555;border-color:#3d3d3d;"><div style="position:absolute;left:0;right:0;top:0;bottom:0;display:flex;align-items:center;justify-content:center;font-size:13px;color:#fff;">S</div></div>
<div style="position:absolute;left:155px;top:779px;white-space:nowrap;font-size:11.5px;color:#fff;width:104px;text-align:center;">JOHN</div>
<div style="position:absolute;left:264px;top:109px;width:1062px;height:29px;background:#474747;border-bottom:1px solid #2a2a2a;"></div>
<div style="position:absolute;left:272px;top:115px;width:33px;height:20px;background:#434343;border:1px solid #383838;border-radius:4px;"></div>
<svg style="position:absolute;left:280px;top:117px;" width="18" height="16" viewBox="0 0 18 16"><path d="M6 14 Q6 6 6 3 M3 6 L6 2.5 L9 6 M6 7 Q6 13 13 13.5" stroke="#b8b8b8" stroke-width="1.2" fill="none"/></svg>
<div style="position:absolute;left:313px;top:114px;width:211px;height:21px;background:#3a3a3a;border:1px solid #2f2f2f;border-radius:4px;"></div>
<div style="position:absolute;left:369px;top:115px;width:1px;height:19px;background:#2c2c2c;"></div>
<div style="position:absolute;left:461px;top:115px;width:1px;height:19px;background:#2c2c2c;"></div>
<div style="position:absolute;left:324px;top:116px;white-space:nowrap;font-size:14px;color:#e6e6e6;">Edit</div>
<svg style="position:absolute;left:354px;top:122px;" width="11" height="7" viewBox="0 0 11 7"><path d="M1 1.5 L5.5 5.5 L10 1.5" stroke="#cfcfcf" stroke-width="1.1" fill="none"/></svg>
<div style="position:absolute;left:380px;top:116px;white-space:nowrap;font-size:14px;color:#e6e6e6;">Functions</div>
<svg style="position:absolute;left:445px;top:122px;" width="11" height="7" viewBox="0 0 11 7"><path d="M1 1.5 L5.5 5.5 L10 1.5" stroke="#cfcfcf" stroke-width="1.1" fill="none"/></svg>
<div style="position:absolute;left:472px;top:116px;white-space:nowrap;font-size:14px;color:#e6e6e6;">View</div>
<svg style="position:absolute;left:508px;top:122px;" width="11" height="7" viewBox="0 0 11 7"><path d="M1 1.5 L5.5 5.5 L10 1.5" stroke="#cfcfcf" stroke-width="1.1" fill="none"/></svg>
<div style="position:absolute;left:532px;top:114px;width:64px;height:21px;background:#3a3a3a;border:1px solid #2f2f2f;border-radius:4px;"></div>
<div style="position:absolute;left:564px;top:115px;width:1px;height:19px;background:#2c2c2c;"></div>
<svg style="position:absolute;left:536px;top:117px;" width="26" height="15" viewBox="0 0 26 15"><path d="M1 11 H6 M19 4 H24" stroke="#eee" stroke-width="1.3"/><circle cx="8.5" cy="11" r="2.2" fill="#eee"/><circle cx="16.5" cy="4" r="2.2" fill="#eee"/><path d="M10 9.5 L15 5.5" stroke="#eee" stroke-width="1.2" stroke-dasharray="2 1.2"/></svg>
<svg style="position:absolute;left:568px;top:117px;" width="24" height="16" viewBox="0 0 24 16"><path d="M1.5 1 V14 M22.5 1 V14 M1.5 1 Q12 5 12 7.5 Q12 10 1.5 14 M22.5 1 Q12 5 12 7.5 Q12 10 22.5 14" stroke="#eee" stroke-width="1.2" fill="none"/><path d="M5 7.5h1M8 6v3M10 6.5v2M14 6.5v2M16 6v3M18.5 7.5h1" stroke="#eee" stroke-width="0.9"/></svg>
<div style="position:absolute;left:605px;top:114px;width:33px;height:21px;background:#3a3a3a;border:1px solid #2f2f2f;border-radius:4px;"></div>
<svg style="position:absolute;left:610px;top:117px;" width="24" height="15" viewBox="0 0 24 15"><path d="M3 7 L7 9.5 L3 12 M21 7 L17 9.5 L21 12" stroke="#eee" stroke-width="1.1" fill="none"/><path d="M8 1.5 H16 L12.5 6 V14 H11.5 V6 Z" fill="#eee"/></svg>
<div style="position:absolute;left:751px;top:114px;width:87px;height:21px;background:#3a3a3a;border:1px solid #2f2f2f;border-radius:4px;"></div>
<div style="position:absolute;left:794px;top:115px;width:1px;height:19px;background:#2c2c2c;"></div>
<svg style="position:absolute;left:759px;top:117px;" width="12" height="16" viewBox="0 0 12 16"><path d="M1.5 1 L1.5 13 L4.5 10.5 L7 15 L8.5 14.2 L6.3 9.8 L10 9.5 Z" fill="#f0f0f0"/></svg>
<svg style="position:absolute;left:777px;top:122px;" width="10" height="7" viewBox="0 0 10 7"><path d="M1 1.5 L5.0 5.5 L9 1.5" stroke="#cfcfcf" stroke-width="1.1" fill="none"/></svg>
<svg style="position:absolute;left:800px;top:116px;" width="18" height="18" viewBox="0 0 18 18"><path d="M9 2 V16 M2 9 H16" stroke="#f0f0f0" stroke-width="1.3"/></svg>
<svg style="position:absolute;left:822px;top:122px;" width="10" height="7" viewBox="0 0 10 7"><path d="M1 1.5 L5.0 5.5 L9 1.5" stroke="#cfcfcf" stroke-width="1.1" fill="none"/></svg>
<div style="position:absolute;left:1004px;top:114px;width:41px;height:21px;background:#3a3a3a;border:1px solid #2f2f2f;border-radius:4px;"></div>
<svg style="position:absolute;left:1012px;top:118px;" width="15" height="15" viewBox="0 0 15 15"><circle cx="7.5" cy="7.5" r="4.3" fill="#e8e8e8"/><rect x="6.2" y="0.6" width="2.6" height="3.2" fill="#e8e8e8" transform="rotate(0 7.5 7.5)"/><rect x="6.2" y="0.6" width="2.6" height="3.2" fill="#e8e8e8" transform="rotate(45 7.5 7.5)"/><rect x="6.2" y="0.6" width="2.6" height="3.2" fill="#e8e8e8" transform="rotate(90 7.5 7.5)"/><rect x="6.2" y="0.6" width="2.6" height="3.2" fill="#e8e8e8" transform="rotate(135 7.5 7.5)"/><rect x="6.2" y="0.6" width="2.6" height="3.2" fill="#e8e8e8" transform="rotate(180 7.5 7.5)"/><rect x="6.2" y="0.6" width="2.6" height="3.2" fill="#e8e8e8" transform="rotate(225 7.5 7.5)"/><rect x="6.2" y="0.6" width="2.6" height="3.2" fill="#e8e8e8" transform="rotate(270 7.5 7.5)"/><rect x="6.2" y="0.6" width="2.6" height="3.2" fill="#e8e8e8" transform="rotate(315 7.5 7.5)"/><circle cx="7.5" cy="7.5" r="1.7" fill="#3a3a3a"/></svg>
<svg style="position:absolute;left:1029px;top:122px;" width="10" height="7" viewBox="0 0 10 7"><path d="M1 1.5 L5.0 5.5 L9 1.5" stroke="#cfcfcf" stroke-width="1.1" fill="none"/></svg>
<div style="position:absolute;left:1053px;top:114px;width:33px;height:21px;background:#2f6aa6;border:1px solid #24558a;border-radius:4px;"></div>
<svg style="position:absolute;left:1055px;top:116px;" width="26" height="17" viewBox="0 0 26 17"><rect x="5.20" y="7.20" width="1.1" height="2.60" fill="#fff"/><rect x="7.50" y="6.00" width="1.1" height="5.00" fill="#fff"/><rect x="9.80" y="4.50" width="1.1" height="8.00" fill="#fff"/><rect x="12.10" y="2.50" width="1.1" height="12.00" fill="#fff"/><rect x="14.40" y="5.00" width="1.1" height="7.00" fill="#fff"/><rect x="16.70" y="0.50" width="1.1" height="16.00" fill="#fff"/><rect x="19.00" y="2.50" width="1.1" height="12.00" fill="#fff"/><rect x="21.30" y="4.50" width="1.1" height="8.00" fill="#fff"/><rect x="23.60" y="6.00" width="1.1" height="5.00" fill="#fff"/><rect x="25.90" y="7.20" width="1.1" height="2.60" fill="#fff"/></svg>
<div style="position:absolute;left:1094px;top:114px;width:65px;height:21px;background:#3a3a3a;border:1px solid #2f2f2f;border-radius:4px;"></div>
<div style="position:absolute;left:1126px;top:115px;width:1px;height:19px;background:#2c2c2c;"></div>
<svg style="position:absolute;left:1101px;top:116px;" width="20" height="18" viewBox="0 0 20 18"><path d="M3 1.5 H17 M3 16.5 H17 M10 3 V15 M7 6 L10 3 L13 6 M7 12 L10 15 L13 12" stroke="#eee" stroke-width="1.2" fill="none"/></svg>
<svg style="position:absolute;left:1134px;top:116px;" width="18" height="18" viewBox="0 0 18 18"><path d="M2 2 V16 M16 2 V16 M4 9 H14 M6.5 6.5 L4 9 L6.5 11.5 M11.5 6.5 L14 9 L11.5 11.5" stroke="#eee" stroke-width="1.2" fill="none"/></svg>
<div style="position:absolute;left:1167px;top:114px;width:151px;height:21px;background:#3a3a3a;border:1px solid #2f2f2f;border-radius:4px;"></div>
<div style="position:absolute;left:1242px;top:115px;width:1px;height:19px;background:#2c2c2c;"></div>
<svg style="position:absolute;left:1171px;top:116px;" width="14" height="18" viewBox="0 0 14 18"><path d="M7 2 V16 M4 5 L7 2 L10 5 M4 13 L7 16 L10 13" stroke="#ddd" stroke-width="1.2" fill="none"/></svg>
<div style="position:absolute;left:1190px;top:123px;width:45px;height:4px;background:#2b2b2b;border-radius:2px;"></div>
<svg style="position:absolute;left:1198px;top:115px;" width="22" height="17" viewBox="0 0 22 17"><path d="M2 1v1.5M5 1v1.5M8 1v1.5M19 1v1.5" stroke="#aaa" stroke-width="0.8"/><path d="M6.5 13 Q6.5 8 10 5 Q13.5 8 13.5 13 Z" fill="#a8a8a8"/></svg>
<svg style="position:absolute;left:1245px;top:116px;" width="17" height="18" viewBox="0 0 17 18"><path d="M1.5 9 H15.5 M4.5 6 L1.5 9 L4.5 12 M12.5 6 L15.5 9 L12.5 12" stroke="#ddd" stroke-width="1.2" fill="none"/></svg>
<div style="position:absolute;left:1265px;top:123px;width:47px;height:4px;background:#2b2b2b;border-radius:2px;"></div>
<svg style="position:absolute;left:1268px;top:115px;" width="22" height="17" viewBox="0 0 22 17"><path d="M2 1v1.5M5 1v1.5M8 1v1.5M19 1v1.5" stroke="#aaa" stroke-width="0.8"/><path d="M4.5 13 Q4.5 8 8 5 Q11.5 8 11.5 13 Z" fill="#a8a8a8"/></svg>
<div style="position:absolute;left:264px;top:138px;width:324px;height:54px;background:#535353;border-bottom:1.5px solid #1f1f1f;"></div>
<div style="position:absolute;left:272px;top:154px;width:33px;height:21px;background:#434343;border:1px solid #333;border-radius:4px;"></div>
<svg style="position:absolute;left:280px;top:157px;" width="18" height="16" viewBox="0 0 18 16"><path d="M9 2 V14 M3 8 H15" stroke="#eee" stroke-width="1.4"/></svg>
<div style="position:absolute;left:313px;top:154px;width:33px;height:21px;background:#434343;border:1px solid #333;border-radius:4px;"></div>
<svg style="position:absolute;left:318px;top:155px;" width="24" height="19" viewBox="0 0 24 19"><rect x="3" y="2" width="11" height="10" fill="#eee"/><path d="M8.5 4 V10 M5.5 7 H11.5" stroke="#434343" stroke-width="1.3"/><path d="M15 6 H19 V16 H7 V13" stroke="#eee" stroke-width="1.1" fill="none"/></svg>
<div style="position:absolute;left:354px;top:154px;width:33px;height:21px;background:#434343;border:1px solid #333;border-radius:4px;"></div>
<div style="position:absolute;left:354px;top:155px;white-space:nowrap;font-size:16px;color:#eee;width:33px;text-align:center;">S</div>
<div style="position:absolute;left:547px;top:154px;width:33px;height:21px;background:#434343;border:1px solid #333;border-radius:4px;"></div>
<svg style="position:absolute;left:555px;top:157px;" width="16" height="15" viewBox="0 0 16 15"><rect x="1" y="1" width="14" height="13" stroke="#eee" stroke-width="1.1" fill="none"/><rect x="1" y="1" width="14" height="2.5" fill="#eee"/><path d="M5 7.5 L8 10 L11 7.5" stroke="#eee" stroke-width="1" fill="none"/></svg>
<div style="position:absolute;left:588px;top:138px;width:738px;height:54px;background:#353535;border-left:1px solid #1f1f1f;"></div>
<div style="position:absolute;left:588px;top:138px;width:738px;height:19px;background:#363636;"></div>
<div style="position:absolute;left:594px;top:141px;width:1px;height:15px;background:#6e6e6e;"></div>
<div style="position:absolute;left:598px;top:140px;white-space:nowrap;font-size:12.5px;color:#cdd8e2;transform:scaleX(0.92);transform-origin:0 0;-webkit-text-stroke:0.25px #cdd8e2;">1:00:40</div>
<div style="position:absolute;left:655px;top:139px;width:1px;height:4px;background:#6a6a6a;"></div>
<div style="position:absolute;left:676px;top:139px;width:1px;height:4px;background:#6a6a6a;"></div>
<div style="position:absolute;left:696px;top:141px;width:1px;height:15px;background:#6e6e6e;"></div>
<div style="position:absolute;left:700px;top:140px;white-space:nowrap;font-size:12.5px;color:#cdd8e2;transform:scaleX(0.92);transform-origin:0 0;-webkit-text-stroke:0.25px #cdd8e2;">1:00:45</div>
<div style="position:absolute;left:758px;top:139px;width:1px;height:4px;background:#6a6a6a;"></div>
<div style="position:absolute;left:778px;top:139px;width:1px;height:4px;background:#6a6a6a;"></div>
<div style="position:absolute;left:799px;top:141px;width:1px;height:15px;background:#6e6e6e;"></div>
<div style="position:absolute;left:803px;top:140px;white-space:nowrap;font-size:12.5px;color:#cdd8e2;transform:scaleX(0.92);transform-origin:0 0;-webkit-text-stroke:0.25px #cdd8e2;">1:00:50</div>
<div style="position:absolute;left:860px;top:139px;width:1px;height:4px;background:#6a6a6a;"></div>
<div style="position:absolute;left:880px;top:139px;width:1px;height:4px;background:#6a6a6a;"></div>
<div style="position:absolute;left:901px;top:141px;width:1px;height:15px;background:#6e6e6e;"></div>
<div style="position:absolute;left:905px;top:140px;white-space:nowrap;font-size:12.5px;color:#cdd8e2;transform:scaleX(0.92);transform-origin:0 0;-webkit-text-stroke:0.25px #cdd8e2;">1:00:55</div>
<div style="position:absolute;left:962px;top:139px;width:1px;height:4px;background:#6a6a6a;"></div>
<div style="position:absolute;left:983px;top:139px;width:1px;height:4px;background:#6a6a6a;"></div>
<div style="position:absolute;left:1003px;top:141px;width:1px;height:15px;background:#6e6e6e;"></div>
<div style="position:absolute;left:1007px;top:140px;white-space:nowrap;font-size:12.5px;color:#cdd8e2;transform:scaleX(0.92);transform-origin:0 0;-webkit-text-stroke:0.25px #cdd8e2;">1:01</div>
<div style="position:absolute;left:1044px;top:139px;width:1px;height:4px;background:#6a6a6a;"></div>
<div style="position:absolute;left:1065px;top:139px;width:1px;height:4px;background:#6a6a6a;"></div>
<div style="position:absolute;left:1085px;top:139px;width:1px;height:4px;background:#6a6a6a;"></div>
<div style="position:absolute;left:1106px;top:141px;width:1px;height:15px;background:#6e6e6e;"></div>
<div style="position:absolute;left:1110px;top:140px;white-space:nowrap;font-size:12.5px;color:#cdd8e2;transform:scaleX(0.92);transform-origin:0 0;-webkit-text-stroke:0.25px #cdd8e2;">1:01:05</div>
<div style="position:absolute;left:1167px;top:139px;width:1px;height:4px;background:#6a6a6a;"></div>
<div style="position:absolute;left:1188px;top:139px;width:1px;height:4px;background:#6a6a6a;"></div>
<div style="position:absolute;left:1208px;top:141px;width:1px;height:15px;background:#6e6e6e;"></div>
<div style="position:absolute;left:1212px;top:140px;white-space:nowrap;font-size:12.5px;color:#cdd8e2;transform:scaleX(0.92);transform-origin:0 0;-webkit-text-stroke:0.25px #cdd8e2;">1:01:10</div>
<div style="position:absolute;left:1270px;top:139px;width:1px;height:4px;background:#6a6a6a;"></div>
<div style="position:absolute;left:1290px;top:139px;width:1px;height:4px;background:#6a6a6a;"></div>
<div style="position:absolute;left:1311px;top:141px;width:1px;height:15px;background:#6e6e6e;"></div>
<div style="position:absolute;left:1315px;top:140px;white-space:nowrap;font-size:12.5px;color:#cdd8e2;transform:scaleX(0.92);transform-origin:0 0;-webkit-text-stroke:0.25px #cdd8e2;">1:0</div>
<div style="position:absolute;left:588px;top:157px;width:738px;height:17px;background:#c09a45;"></div>
<div style="position:absolute;left:614px;top:160px;width:1px;height:14px;background:#1a1a1a;"></div>
<div style="position:absolute;left:618px;top:157px;white-space:nowrap;font-size:14.5px;color:#141414;transform:scaleX(0.93);transform-origin:0 0;">15</div>
<div style="position:absolute;left:674px;top:160px;width:1px;height:14px;background:#1a1a1a;"></div>
<div style="position:absolute;left:678px;top:157px;white-space:nowrap;font-size:14.5px;color:#141414;transform:scaleX(0.93);transform-origin:0 0;">16</div>
<div style="position:absolute;left:734px;top:160px;width:1px;height:14px;background:#1a1a1a;"></div>
<div style="position:absolute;left:738px;top:157px;white-space:nowrap;font-size:14.5px;color:#141414;transform:scaleX(0.93);transform-origin:0 0;">17</div>
<div style="position:absolute;left:794px;top:160px;width:1px;height:14px;background:#1a1a1a;"></div>
<div style="position:absolute;left:798px;top:157px;white-space:nowrap;font-size:14.5px;color:#141414;transform:scaleX(0.93);transform-origin:0 0;">18</div>
<div style="position:absolute;left:854px;top:160px;width:1px;height:14px;background:#1a1a1a;"></div>
<div style="position:absolute;left:858px;top:157px;white-space:nowrap;font-size:14.5px;color:#141414;transform:scaleX(0.93);transform-origin:0 0;">19</div>
<div style="position:absolute;left:914px;top:160px;width:1px;height:14px;background:#1a1a1a;"></div>
<div style="position:absolute;left:918px;top:157px;white-space:nowrap;font-size:14.5px;color:#141414;transform:scaleX(0.93);transform-origin:0 0;">20</div>
<div style="position:absolute;left:973px;top:160px;width:1px;height:14px;background:#1a1a1a;"></div>
<div style="position:absolute;left:977px;top:157px;white-space:nowrap;font-size:14.5px;color:#141414;transform:scaleX(0.93);transform-origin:0 0;">21</div>
<div style="position:absolute;left:1033px;top:160px;width:1px;height:14px;background:#1a1a1a;"></div>
<div style="position:absolute;left:1037px;top:157px;white-space:nowrap;font-size:14.5px;color:#141414;transform:scaleX(0.93);transform-origin:0 0;">22</div>
<div style="position:absolute;left:1093px;top:160px;width:1px;height:14px;background:#1a1a1a;"></div>
<div style="position:absolute;left:1097px;top:157px;white-space:nowrap;font-size:14.5px;color:#141414;transform:scaleX(0.93);transform-origin:0 0;">23</div>
<div style="position:absolute;left:1153px;top:160px;width:1px;height:14px;background:#1a1a1a;"></div>
<div style="position:absolute;left:1157px;top:157px;white-space:nowrap;font-size:14.5px;color:#141414;transform:scaleX(0.93);transform-origin:0 0;">24</div>
<div style="position:absolute;left:1213px;top:160px;width:1px;height:14px;background:#1a1a1a;"></div>
<div style="position:absolute;left:1217px;top:157px;white-space:nowrap;font-size:14.5px;color:#141414;transform:scaleX(0.93);transform-origin:0 0;">25</div>
<div style="position:absolute;left:1273px;top:160px;width:1px;height:14px;background:#1a1a1a;"></div>
<div style="position:absolute;left:1277px;top:157px;white-space:nowrap;font-size:14.5px;color:#141414;transform:scaleX(0.93);transform-origin:0 0;">26</div>
<div style="position:absolute;left:588px;top:174px;width:738px;height:1px;background:#1e1e1e;"></div>
<div style="position:absolute;left:599px;top:186px;width:1px;height:5px;background:#5c5c5c;"></div>
<div style="position:absolute;left:614px;top:174px;width:1px;height:18px;background:#555;"></div>
<div style="position:absolute;left:629px;top:186px;width:1px;height:5px;background:#5c5c5c;"></div>
<div style="position:absolute;left:644px;top:186px;width:1px;height:5px;background:#5c5c5c;"></div>
<div style="position:absolute;left:659px;top:186px;width:1px;height:5px;background:#5c5c5c;"></div>
<div style="position:absolute;left:674px;top:174px;width:1px;height:18px;background:#555;"></div>
<div style="position:absolute;left:689px;top:186px;width:1px;height:5px;background:#5c5c5c;"></div>
<div style="position:absolute;left:704px;top:186px;width:1px;height:5px;background:#5c5c5c;"></div>
<div style="position:absolute;left:719px;top:186px;width:1px;height:5px;background:#5c5c5c;"></div>
<div style="position:absolute;left:734px;top:174px;width:1px;height:18px;background:#555;"></div>
<div style="position:absolute;left:749px;top:186px;width:1px;height:5px;background:#5c5c5c;"></div>
<div style="position:absolute;left:764px;top:186px;width:1px;height:5px;background:#5c5c5c;"></div>
<div style="position:absolute;left:779px;top:186px;width:1px;height:5px;background:#5c5c5c;"></div>
<div style="position:absolute;left:794px;top:174px;width:1px;height:18px;background:#555;"></div>
<div style="position:absolute;left:809px;top:186px;width:1px;height:5px;background:#5c5c5c;"></div>
<div style="position:absolute;left:824px;top:186px;width:1px;height:5px;background:#5c5c5c;"></div>
<div style="position:absolute;left:839px;top:186px;width:1px;height:5px;background:#5c5c5c;"></div>
<div style="position:absolute;left:854px;top:174px;width:1px;height:18px;background:#555;"></div>
<div style="position:absolute;left:869px;top:186px;width:1px;height:5px;background:#5c5c5c;"></div>
<div style="position:absolute;left:884px;top:186px;width:1px;height:5px;background:#5c5c5c;"></div>
<div style="position:absolute;left:899px;top:186px;width:1px;height:5px;background:#5c5c5c;"></div>
<div style="position:absolute;left:914px;top:174px;width:1px;height:18px;background:#555;"></div>
<div style="position:absolute;left:929px;top:186px;width:1px;height:5px;background:#5c5c5c;"></div>
<div style="position:absolute;left:943px;top:186px;width:1px;height:5px;background:#5c5c5c;"></div>
<div style="position:absolute;left:958px;top:186px;width:1px;height:5px;background:#5c5c5c;"></div>
<div style="position:absolute;left:973px;top:174px;width:1px;height:18px;background:#555;"></div>
<div style="position:absolute;left:988px;top:186px;width:1px;height:5px;background:#5c5c5c;"></div>
<div style="position:absolute;left:1003px;top:186px;width:1px;height:5px;background:#5c5c5c;"></div>
<div style="position:absolute;left:1018px;top:186px;width:1px;height:5px;background:#5c5c5c;"></div>
<div style="position:absolute;left:1033px;top:174px;width:1px;height:18px;background:#555;"></div>
<div style="position:absolute;left:1048px;top:186px;width:1px;height:5px;background:#5c5c5c;"></div>
<div style="position:absolute;left:1063px;top:186px;width:1px;height:5px;background:#5c5c5c;"></div>
<div style="position:absolute;left:1078px;top:186px;width:1px;height:5px;background:#5c5c5c;"></div>
<div style="position:absolute;left:1093px;top:174px;width:1px;height:18px;background:#555;"></div>
<div style="position:absolute;left:1108px;top:186px;width:1px;height:5px;background:#5c5c5c;"></div>
<div style="position:absolute;left:1123px;top:186px;width:1px;height:5px;background:#5c5c5c;"></div>
<div style="position:absolute;left:1138px;top:186px;width:1px;height:5px;background:#5c5c5c;"></div>
<div style="position:absolute;left:1153px;top:174px;width:1px;height:18px;background:#555;"></div>
<div style="position:absolute;left:1168px;top:186px;width:1px;height:5px;background:#5c5c5c;"></div>
<div style="position:absolute;left:1183px;top:186px;width:1px;height:5px;background:#5c5c5c;"></div>
<div style="position:absolute;left:1198px;top:186px;width:1px;height:5px;background:#5c5c5c;"></div>
<div style="position:absolute;left:1213px;top:174px;width:1px;height:18px;background:#555;"></div>
<div style="position:absolute;left:1228px;top:186px;width:1px;height:5px;background:#5c5c5c;"></div>
<div style="position:absolute;left:1243px;top:186px;width:1px;height:5px;background:#5c5c5c;"></div>
<div style="position:absolute;left:1258px;top:186px;width:1px;height:5px;background:#5c5c5c;"></div>
<div style="position:absolute;left:1273px;top:174px;width:1px;height:18px;background:#555;"></div>
<div style="position:absolute;left:1288px;top:186px;width:1px;height:5px;background:#5c5c5c;"></div>
<div style="position:absolute;left:1303px;top:186px;width:1px;height:5px;background:#5c5c5c;"></div>
<div style="position:absolute;left:1318px;top:186px;width:1px;height:5px;background:#5c5c5c;"></div>
<div style="position:absolute;left:588px;top:191px;width:738px;height:1px;background:#1e1e1e;"></div>
<div style="position:absolute;left:264px;top:192px;width:324px;height:11px;background:#636363;"></div>
<div style="position:absolute;left:264px;top:192px;width:8px;height:11px;background:#2b5a85;"></div>
<div style="position:absolute;left:349px;top:192px;width:21px;height:3px;background:#4a4a4a;border:1px solid #323232;border-top:none;border-radius:0 0 4px 4px;"></div>
<div style="position:absolute;left:376px;top:192px;width:41px;height:3px;background:#4a4a4a;border:1px solid #323232;border-top:none;border-radius:0 0 4px 4px;"></div>
<div style="position:absolute;left:423px;top:192px;width:41px;height:3px;background:#4a4a4a;border:1px solid #323232;border-top:none;border-radius:0 0 4px 4px;"></div>
<div style="position:absolute;left:509px;top:192px;width:19px;height:3px;background:#7a7a7a;border:1.3px solid #bdbdbd;border-top:none;border-radius:0 0 9px 9px;"></div>
<div style="position:absolute;left:264px;top:192px;width:324px;height:1px;background:#1f1f1f;"></div>
<div style="position:absolute;left:264px;top:202px;width:324px;height:53px;background:#636363;border-top:1px solid #4d4d4d;"></div>
<div style="position:absolute;left:264px;top:202px;width:8px;height:53px;background:#2b5a85;border-top:1px solid #4a4a4a;"></div>
<div style="position:absolute;left:272px;top:202px;width:1px;height:53px;background:#4d4a4b;"></div>
<div style="position:absolute;left:303px;top:218px;width:31px;height:23px;background:linear-gradient(#34404c,#2b3440);border-radius:3px;box-shadow:0 0 0 0.5px #2a2f36;"></div>
<svg style="position:absolute;left:303px;top:218px;" width="31" height="23" viewBox="0 0 31 23"><circle cx="4.0" cy="11.5" r="1.1" fill="#3ba6ea"/><rect x="5.5" y="9.00" width="1.2" height="5.00" fill="#3ba6ea"/><rect x="7.5" y="9.50" width="1.2" height="4.00" fill="#3ba6ea"/><rect x="9.5" y="7.00" width="1.2" height="9.00" fill="#3ba6ea"/><rect x="11.5" y="9.00" width="1.2" height="5.00" fill="#3ba6ea"/><rect x="13.5" y="7.50" width="1.2" height="8.00" fill="#3ba6ea"/><rect x="15.5" y="4.00" width="1.2" height="15.00" fill="#3ba6ea"/><rect x="17.5" y="7.00" width="1.2" height="9.00" fill="#3ba6ea"/><rect x="19.5" y="8.50" width="1.2" height="6.00" fill="#3ba6ea"/><rect x="21.5" y="7.50" width="1.2" height="8.00" fill="#3ba6ea"/><rect x="23.5" y="9.50" width="1.2" height="4.00" fill="#3ba6ea"/><circle cx="26.0" cy="11.5" r="1.1" fill="#3ba6ea"/></svg>
<div style="position:absolute;left:349px;top:211px;white-space:nowrap;font-size:13.5px;color:#f4f4f4;transform:scaleX(0.94);transform-origin:0 0;">VOX_bip</div>
<div style="position:absolute;left:349px;top:230px;width:21px;height:18px;background:#2f6aa6;border:1px solid #24558a;border-radius:4px;"></div>
<svg style="position:absolute;left:352px;top:232px;" width="15" height="14" viewBox="0 0 15 14"><path d="M4.2 4.2 A5 5 0 1 0 10.8 4.2" stroke="#e8eef5" stroke-width="1.3" fill="none"/><path d="M7.5 1.5 V7" stroke="#e8eef5" stroke-width="1.3"/></svg>
<div style="position:absolute;left:376px;top:230px;width:41px;height:18px;background:#4a4a4a;border:1px solid #323232;border-radius:4px;overflow:hidden;"></div>
<div style="position:absolute;left:376px;top:231px;white-space:nowrap;font-size:13px;color:#f2f2f2;width:20px;text-align:center;">M</div>
<div style="position:absolute;left:396px;top:231px;white-space:nowrap;font-size:13px;color:#f2f2f2;width:20px;text-align:center;">S</div>
<div style="position:absolute;left:396px;top:231px;width:1px;height:16px;background:#323232;"></div>
<div style="position:absolute;left:423px;top:230px;width:41px;height:18px;background:#4a4a4a;border:1px solid #323232;border-radius:4px;overflow:hidden;"></div>
<svg style="position:absolute;left:427px;top:232px;" width="13" height="13" viewBox="0 0 13 13"><g stroke="#f4f4f4" stroke-width="1.3" stroke-linecap="round"><g transform="rotate(0 6.5 6.5)"><path d="M6.5 0.8 V12.2"/><path d="M4.6 1.6 L6.5 3.3 L8.4 1.6 M4.6 11.4 L6.5 9.7 L8.4 11.4" stroke-width="1"/></g><g transform="rotate(60 6.5 6.5)"><path d="M6.5 0.8 V12.2"/><path d="M4.6 1.6 L6.5 3.3 L8.4 1.6 M4.6 11.4 L6.5 9.7 L8.4 11.4" stroke-width="1"/></g><g transform="rotate(120 6.5 6.5)"><path d="M6.5 0.8 V12.2"/><path d="M4.6 1.6 L6.5 3.3 L8.4 1.6 M4.6 11.4 L6.5 9.7 L8.4 11.4" stroke-width="1"/></g></g></svg>
<div style="position:absolute;left:444px;top:231px;white-space:nowrap;font-size:13px;color:#f2f2f2;width:20px;text-align:center;">R</div>
<div style="position:absolute;left:444px;top:231px;width:1px;height:16px;background:#323232;"></div>
<div style="position:absolute;left:475px;top:233px;width:63px;height:12px;background:#313131;border-radius:6px;"></div>
<div style="position:absolute;left:490px;top:229.5px;width:19px;height:19px;background:radial-gradient(circle at 50% 45%,#808080,#737373);border:1.3px solid #bdbdbd;border-radius:50%;box-shadow:0 1px 1px rgba(0,0,0,0.4);"></div>
<svg style="position:absolute;left:546.9px;top:213.4px;" width="31.2" height="31.2" viewBox="0 0 31.2 31.2"><path d="M7.85 24.83 A12.049999999999999 12.049999999999999 0 1 1 23.35 24.83" stroke="#2b2b2b" stroke-width="3.1" fill="none"/><circle cx="15.6" cy="15.6" r="10.5" fill="#7d7d7d"/><path d="M15.60 14.34 L15.60 5.10" stroke="#222" stroke-width="1.2"/><path d="M14.76 3.58 A12.049999999999999 12.049999999999999 0 0 1 16.44 3.58" stroke="#3fcb6a" stroke-width="3.1" fill="none"/></svg>
<div style="position:absolute;left:550.5px;top:239px;white-space:nowrap;font-size:6.5px;color:#c4c4c4;font-weight:bold;">L</div>
<div style="position:absolute;left:568px;top:239px;white-space:nowrap;font-size:6.5px;color:#c4c4c4;font-weight:bold;">R</div>
<div style="position:absolute;left:264px;top:255px;width:324px;height:53px;background:#636363;border-top:1px solid #4d4d4d;"></div>
<div style="position:absolute;left:264px;top:255px;width:8px;height:53px;background:#2b5a85;border-top:1px solid #4a4a4a;"></div>
<div style="position:absolute;left:272px;top:255px;width:1px;height:53px;background:#4d4a4b;"></div>
<div style="position:absolute;left:280px;top:265px;width:62px;height:34px;background:#5b5b5b;border:1px solid #4e4e4e;border-radius:6px;"></div>
<svg style="position:absolute;left:285px;top:278px;" width="12" height="10" viewBox="0 0 12 10"><path d="M1 1 H11 L6 9Z" fill="#e0e0e0"/></svg>
<div style="position:absolute;left:303px;top:272px;width:30px;height:22px;background:#4c4932;border-radius:3px;box-shadow:0 0 0 0.5px #3a3a30;"></div>
<svg style="position:absolute;left:309px;top:275px;" width="18" height="16" viewBox="0 0 18 16"><circle cx="9" cy="8" r="7" fill="#f2e866"/><path d="M9 2.5 V8" stroke="#333" stroke-width="1.6"/></svg>
<div style="position:absolute;left:349px;top:264px;white-space:nowrap;font-size:13.5px;color:#f4f4f4;transform:scaleX(0.94);transform-origin:0 0;">JOHN</div>
<div style="position:absolute;left:349px;top:283px;width:21px;height:18px;background:#2f6aa6;border:1px solid #24558a;border-radius:4px;"></div>
<svg style="position:absolute;left:352px;top:285px;" width="15" height="14" viewBox="0 0 15 14"><path d="M4.2 4.2 A5 5 0 1 0 10.8 4.2" stroke="#e8eef5" stroke-width="1.3" fill="none"/><path d="M7.5 1.5 V7" stroke="#e8eef5" stroke-width="1.3"/></svg>
<div style="position:absolute;left:376px;top:283px;width:41px;height:18px;background:#4a4a4a;border:1px solid #323232;border-radius:4px;overflow:hidden;"></div>
<div style="position:absolute;left:376px;top:284px;white-space:nowrap;font-size:13px;color:#f2f2f2;width:20px;text-align:center;">M</div>
<div style="position:absolute;left:396px;top:284px;white-space:nowrap;font-size:13px;color:#f2f2f2;width:20px;text-align:center;">S</div>
<div style="position:absolute;left:396px;top:284px;width:1px;height:16px;background:#323232;"></div>
<div style="position:absolute;left:443px;top:283px;width:21px;height:18px;background:#4a4a4a;border:1px solid #323232;border-radius:4px;"></div>
<div style="position:absolute;left:443px;top:284px;white-space:nowrap;font-size:13px;color:#ff3b30;width:21px;text-align:center;">R</div>
<div style="position:absolute;left:475px;top:286px;width:63px;height:12px;background:#313131;border-radius:6px;"></div>
<div style="position:absolute;left:512px;top:282.5px;width:19px;height:19px;background:radial-gradient(circle at 50% 45%,#808080,#737373);border:1.3px solid #bdbdbd;border-radius:50%;box-shadow:0 1px 1px rgba(0,0,0,0.4);"></div>
<svg style="position:absolute;left:546.9px;top:266.4px;" width="31.2" height="31.2" viewBox="0 0 31.2 31.2"><path d="M7.85 24.83 A12.049999999999999 12.049999999999999 0 1 1 23.35 24.83" stroke="#2b2b2b" stroke-width="3.1" fill="none"/><circle cx="15.6" cy="15.6" r="10.5" fill="#7d7d7d"/><path d="M15.60 14.34 L15.60 5.10" stroke="#222" stroke-width="1.2"/><path d="M14.76 3.58 A12.049999999999999 12.049999999999999 0 0 1 16.44 3.58" stroke="#3fcb6a" stroke-width="3.1" fill="none"/></svg>
<div style="position:absolute;left:550.5px;top:292px;white-space:nowrap;font-size:6.5px;color:#c4c4c4;font-weight:bold;">L</div>
<div style="position:absolute;left:568px;top:292px;white-space:nowrap;font-size:6.5px;color:#c4c4c4;font-weight:bold;">R</div>
<div style="position:absolute;left:264px;top:308px;width:324px;height:53px;background:#636363;border-top:1px solid #4d4d4d;"></div>
<div style="position:absolute;left:264px;top:308px;width:8px;height:53px;background:#2b5a85;border-top:1px solid #4a4a4a;"></div>
<div style="position:absolute;left:272px;top:308px;width:1px;height:53px;background:#4d4a4b;"></div>
<div style="position:absolute;left:272px;top:308px;width:13px;height:54px;background:#5e5e5e;"></div>
<div style="position:absolute;left:285px;top:308px;width:303px;height:54px;background:#838383;border-left:1.5px solid #4f4f4f;border-top:1px solid #555;border-radius:9px 0 0 0;"></div>
<div style="position:absolute;left:303px;top:324px;width:31px;height:23px;background:linear-gradient(#34404c,#2b3440);border-radius:3px;box-shadow:0 0 0 0.5px #2a2f36;"></div>
<svg style="position:absolute;left:303px;top:324px;" width="31" height="23" viewBox="0 0 31 23"><circle cx="4.0" cy="11.5" r="1.1" fill="#3ba6ea"/><rect x="5.5" y="9.00" width="1.2" height="5.00" fill="#3ba6ea"/><rect x="7.5" y="9.50" width="1.2" height="4.00" fill="#3ba6ea"/><rect x="9.5" y="7.00" width="1.2" height="9.00" fill="#3ba6ea"/><rect x="11.5" y="9.00" width="1.2" height="5.00" fill="#3ba6ea"/><rect x="13.5" y="7.50" width="1.2" height="8.00" fill="#3ba6ea"/><rect x="15.5" y="4.00" width="1.2" height="15.00" fill="#3ba6ea"/><rect x="17.5" y="7.00" width="1.2" height="9.00" fill="#3ba6ea"/><rect x="19.5" y="8.50" width="1.2" height="6.00" fill="#3ba6ea"/><rect x="21.5" y="7.50" width="1.2" height="8.00" fill="#3ba6ea"/><rect x="23.5" y="9.50" width="1.2" height="4.00" fill="#3ba6ea"/><circle cx="26.0" cy="11.5" r="1.1" fill="#3ba6ea"/></svg>
<div style="position:absolute;left:349px;top:317px;white-space:nowrap;font-size:13.5px;color:#f4f4f4;transform:scaleX(0.94);transform-origin:0 0;">JOHN LO</div>
<div style="position:absolute;left:349px;top:336px;width:21px;height:18px;background:#2f6aa6;border:1px solid #24558a;border-radius:4px;"></div>
<svg style="position:absolute;left:352px;top:338px;" width="15" height="14" viewBox="0 0 15 14"><path d="M4.2 4.2 A5 5 0 1 0 10.8 4.2" stroke="#e8eef5" stroke-width="1.3" fill="none"/><path d="M7.5 1.5 V7" stroke="#e8eef5" stroke-width="1.3"/></svg>
<div style="position:absolute;left:376px;top:336px;width:41px;height:18px;background:#4a4a4a;border:1px solid #323232;border-radius:4px;overflow:hidden;"></div>
<div style="position:absolute;left:376px;top:337px;white-space:nowrap;font-size:13px;color:#f2f2f2;width:20px;text-align:center;">M</div>
<div style="position:absolute;left:396px;top:337px;white-space:nowrap;font-size:13px;color:#f2f2f2;width:20px;text-align:center;">S</div>
<div style="position:absolute;left:396px;top:337px;width:1px;height:16px;background:#323232;"></div>
<div style="position:absolute;left:423px;top:336px;width:41px;height:18px;background:#4a4a4a;border:1px solid #323232;border-radius:4px;overflow:hidden;"></div>
<svg style="position:absolute;left:427px;top:338px;" width="13" height="13" viewBox="0 0 13 13"><g stroke="#f4f4f4" stroke-width="1.3" stroke-linecap="round"><g transform="rotate(0 6.5 6.5)"><path d="M6.5 0.8 V12.2"/><path d="M4.6 1.6 L6.5 3.3 L8.4 1.6 M4.6 11.4 L6.5 9.7 L8.4 11.4" stroke-width="1"/></g><g transform="rotate(60 6.5 6.5)"><path d="M6.5 0.8 V12.2"/><path d="M4.6 1.6 L6.5 3.3 L8.4 1.6 M4.6 11.4 L6.5 9.7 L8.4 11.4" stroke-width="1"/></g><g transform="rotate(120 6.5 6.5)"><path d="M6.5 0.8 V12.2"/><path d="M4.6 1.6 L6.5 3.3 L8.4 1.6 M4.6 11.4 L6.5 9.7 L8.4 11.4" stroke-width="1"/></g></g></svg>
<div style="position:absolute;left:444px;top:337px;white-space:nowrap;font-size:13px;color:#ff3b30;width:20px;text-align:center;">R</div>
<div style="position:absolute;left:444px;top:337px;width:1px;height:16px;background:#323232;"></div>
<div style="position:absolute;left:475px;top:339px;width:63px;height:12px;background:#313131;border-radius:6px;"></div>
<div style="position:absolute;left:483px;top:335.5px;width:19px;height:19px;background:radial-gradient(circle at 50% 45%,#808080,#737373);border:1.3px solid #bdbdbd;border-radius:50%;box-shadow:0 1px 1px rgba(0,0,0,0.4);"></div>
<svg style="position:absolute;left:546.9px;top:319.4px;" width="31.2" height="31.2" viewBox="0 0 31.2 31.2"><path d="M7.85 24.83 A12.049999999999999 12.049999999999999 0 1 1 23.35 24.83" stroke="#2b2b2b" stroke-width="3.1" fill="none"/><path d="M7.85 24.83 A12.049999999999999 12.049999999999999 0 0 1 15.60 3.55" stroke="#3fcb6a" stroke-width="3.1" fill="none"/><circle cx="15.6" cy="15.6" r="10.5" fill="#bdbdbd"/><path d="M14.79 16.57 L8.85 23.64" stroke="#222" stroke-width="1.2"/></svg>
<div style="position:absolute;left:550.5px;top:345px;white-space:nowrap;font-size:6.5px;color:#c4c4c4;font-weight:bold;">L</div>
<div style="position:absolute;left:568px;top:345px;white-space:nowrap;font-size:6.5px;color:#c4c4c4;font-weight:bold;">R</div>
<div style="position:absolute;left:264px;top:361px;width:324px;height:53px;background:#636363;border-top:1px solid #4d4d4d;"></div>
<div style="position:absolute;left:264px;top:361px;width:8px;height:53px;background:#2b5a85;border-top:1px solid #4a4a4a;"></div>
<div style="position:absolute;left:272px;top:361px;width:1px;height:53px;background:#4d4a4b;"></div>
<div style="position:absolute;left:272px;top:361px;width:13px;height:54px;background:#5e5e5e;"></div>
<div style="position:absolute;left:285px;top:361px;width:1.2px;height:54px;background:#4f4f4f;"></div>
<div style="position:absolute;left:303px;top:377px;width:31px;height:23px;background:linear-gradient(#34404c,#2b3440);border-radius:3px;box-shadow:0 0 0 0.5px #2a2f36;"></div>
<svg style="position:absolute;left:303px;top:377px;" width="31" height="23" viewBox="0 0 31 23"><circle cx="4.0" cy="11.5" r="1.1" fill="#3ba6ea"/><rect x="5.5" y="9.00" width="1.2" height="5.00" fill="#3ba6ea"/><rect x="7.5" y="9.50" width="1.2" height="4.00" fill="#3ba6ea"/><rect x="9.5" y="7.00" width="1.2" height="9.00" fill="#3ba6ea"/><rect x="11.5" y="9.00" width="1.2" height="5.00" fill="#3ba6ea"/><rect x="13.5" y="7.50" width="1.2" height="8.00" fill="#3ba6ea"/><rect x="15.5" y="4.00" width="1.2" height="15.00" fill="#3ba6ea"/><rect x="17.5" y="7.00" width="1.2" height="9.00" fill="#3ba6ea"/><rect x="19.5" y="8.50" width="1.2" height="6.00" fill="#3ba6ea"/><rect x="21.5" y="7.50" width="1.2" height="8.00" fill="#3ba6ea"/><rect x="23.5" y="9.50" width="1.2" height="4.00" fill="#3ba6ea"/><circle cx="26.0" cy="11.5" r="1.1" fill="#3ba6ea"/></svg>
<div style="position:absolute;left:349px;top:370px;white-space:nowrap;font-size:13.5px;color:#f4f4f4;transform:scaleX(0.94);transform-origin:0 0;">JOHN LO 2</div>
<div style="position:absolute;left:349px;top:389px;width:21px;height:18px;background:#2f6aa6;border:1px solid #24558a;border-radius:4px;"></div>
<svg style="position:absolute;left:352px;top:391px;" width="15" height="14" viewBox="0 0 15 14"><path d="M4.2 4.2 A5 5 0 1 0 10.8 4.2" stroke="#e8eef5" stroke-width="1.3" fill="none"/><path d="M7.5 1.5 V7" stroke="#e8eef5" stroke-width="1.3"/></svg>
<div style="position:absolute;left:376px;top:389px;width:41px;height:18px;background:#4a4a4a;border:1px solid #323232;border-radius:4px;overflow:hidden;"></div>
<div style="position:absolute;left:376px;top:390px;white-space:nowrap;font-size:13px;color:#f2f2f2;width:20px;text-align:center;">M</div>
<div style="position:absolute;left:396px;top:390px;white-space:nowrap;font-size:13px;color:#f2f2f2;width:20px;text-align:center;">S</div>
<div style="position:absolute;left:396px;top:390px;width:1px;height:16px;background:#323232;"></div>
<div style="position:absolute;left:423px;top:389px;width:41px;height:18px;background:#4a4a4a;border:1px solid #323232;border-radius:4px;overflow:hidden;"></div>
<svg style="position:absolute;left:427px;top:391px;" width="13" height="13" viewBox="0 0 13 13"><g stroke="#f4f4f4" stroke-width="1.3" stroke-linecap="round"><g transform="rotate(0 6.5 6.5)"><path d="M6.5 0.8 V12.2"/><path d="M4.6 1.6 L6.5 3.3 L8.4 1.6 M4.6 11.4 L6.5 9.7 L8.4 11.4" stroke-width="1"/></g><g transform="rotate(60 6.5 6.5)"><path d="M6.5 0.8 V12.2"/><path d="M4.6 1.6 L6.5 3.3 L8.4 1.6 M4.6 11.4 L6.5 9.7 L8.4 11.4" stroke-width="1"/></g><g transform="rotate(120 6.5 6.5)"><path d="M6.5 0.8 V12.2"/><path d="M4.6 1.6 L6.5 3.3 L8.4 1.6 M4.6 11.4 L6.5 9.7 L8.4 11.4" stroke-width="1"/></g></g></svg>
<div style="position:absolute;left:444px;top:390px;white-space:nowrap;font-size:13px;color:#f2f2f2;width:20px;text-align:center;">R</div>
<div style="position:absolute;left:444px;top:390px;width:1px;height:16px;background:#323232;"></div>
<div style="position:absolute;left:475px;top:392px;width:63px;height:12px;background:#313131;border-radius:6px;"></div>
<div style="position:absolute;left:483px;top:388.5px;width:19px;height:19px;background:radial-gradient(circle at 50% 45%,#808080,#737373);border:1.3px solid #bdbdbd;border-radius:50%;box-shadow:0 1px 1px rgba(0,0,0,0.4);"></div>
<svg style="position:absolute;left:546.9px;top:372.4px;" width="31.2" height="31.2" viewBox="0 0 31.2 31.2"><path d="M7.85 24.83 A12.049999999999999 12.049999999999999 0 1 1 23.35 24.83" stroke="#2b2b2b" stroke-width="3.1" fill="none"/><path d="M15.60 3.55 A12.049999999999999 12.049999999999999 0 0 1 23.35 24.83" stroke="#3fcb6a" stroke-width="3.1" fill="none"/><circle cx="15.6" cy="15.6" r="10.5" fill="#7d7d7d"/><path d="M16.41 16.57 L22.35 23.64" stroke="#222" stroke-width="1.2"/></svg>
<div style="position:absolute;left:550.5px;top:398px;white-space:nowrap;font-size:6.5px;color:#c4c4c4;font-weight:bold;">L</div>
<div style="position:absolute;left:568px;top:398px;white-space:nowrap;font-size:6.5px;color:#c4c4c4;font-weight:bold;">R</div>
<div style="position:absolute;left:264px;top:414px;width:324px;height:53px;background:#636363;border-top:1px solid #4d4d4d;"></div>
<div style="position:absolute;left:264px;top:414px;width:8px;height:53px;background:#2b5a85;border-top:1px solid #4a4a4a;"></div>
<div style="position:absolute;left:272px;top:414px;width:1px;height:53px;background:#4d4a4b;"></div>
<div style="position:absolute;left:272px;top:414px;width:13px;height:54px;background:#5e5e5e;"></div>
<div style="position:absolute;left:285px;top:414px;width:1.2px;height:54px;background:#4f4f4f;"></div>
<div style="position:absolute;left:303px;top:430px;width:31px;height:23px;background:linear-gradient(#34404c,#2b3440);border-radius:3px;box-shadow:0 0 0 0.5px #2a2f36;"></div>
<svg style="position:absolute;left:303px;top:430px;" width="31" height="23" viewBox="0 0 31 23"><circle cx="4.0" cy="11.5" r="1.1" fill="#3ba6ea"/><rect x="5.5" y="9.00" width="1.2" height="5.00" fill="#3ba6ea"/><rect x="7.5" y="9.50" width="1.2" height="4.00" fill="#3ba6ea"/><rect x="9.5" y="7.00" width="1.2" height="9.00" fill="#3ba6ea"/><rect x="11.5" y="9.00" width="1.2" height="5.00" fill="#3ba6ea"/><rect x="13.5" y="7.50" width="1.2" height="8.00" fill="#3ba6ea"/><rect x="15.5" y="4.00" width="1.2" height="15.00" fill="#3ba6ea"/><rect x="17.5" y="7.00" width="1.2" height="9.00" fill="#3ba6ea"/><rect x="19.5" y="8.50" width="1.2" height="6.00" fill="#3ba6ea"/><rect x="21.5" y="7.50" width="1.2" height="8.00" fill="#3ba6ea"/><rect x="23.5" y="9.50" width="1.2" height="4.00" fill="#3ba6ea"/><circle cx="26.0" cy="11.5" r="1.1" fill="#3ba6ea"/></svg>
<div style="position:absolute;left:349px;top:423px;white-space:nowrap;font-size:13.5px;color:#f4f4f4;transform:scaleX(0.94);transform-origin:0 0;">JOHN MID</div>
<div style="position:absolute;left:349px;top:442px;width:21px;height:18px;background:#2f6aa6;border:1px solid #24558a;border-radius:4px;"></div>
<svg style="position:absolute;left:352px;top:444px;" width="15" height="14" viewBox="0 0 15 14"><path d="M4.2 4.2 A5 5 0 1 0 10.8 4.2" stroke="#e8eef5" stroke-width="1.3" fill="none"/><path d="M7.5 1.5 V7" stroke="#e8eef5" stroke-width="1.3"/></svg>
<div style="position:absolute;left:376px;top:442px;width:41px;height:18px;background:#4a4a4a;border:1px solid #323232;border-radius:4px;overflow:hidden;"></div>
<div style="position:absolute;left:376px;top:443px;white-space:nowrap;font-size:13px;color:#f2f2f2;width:20px;text-align:center;">M</div>
<div style="position:absolute;left:396px;top:443px;white-space:nowrap;font-size:13px;color:#f2f2f2;width:20px;text-align:center;">S</div>
<div style="position:absolute;left:396px;top:443px;width:1px;height:16px;background:#323232;"></div>
<div style="position:absolute;left:423px;top:442px;width:41px;height:18px;background:#4a4a4a;border:1px solid #323232;border-radius:4px;overflow:hidden;"></div>
<svg style="position:absolute;left:427px;top:444px;" width="13" height="13" viewBox="0 0 13 13"><g stroke="#f4f4f4" stroke-width="1.3" stroke-linecap="round"><g transform="rotate(0 6.5 6.5)"><path d="M6.5 0.8 V12.2"/><path d="M4.6 1.6 L6.5 3.3 L8.4 1.6 M4.6 11.4 L6.5 9.7 L8.4 11.4" stroke-width="1"/></g><g transform="rotate(60 6.5 6.5)"><path d="M6.5 0.8 V12.2"/><path d="M4.6 1.6 L6.5 3.3 L8.4 1.6 M4.6 11.4 L6.5 9.7 L8.4 11.4" stroke-width="1"/></g><g transform="rotate(120 6.5 6.5)"><path d="M6.5 0.8 V12.2"/><path d="M4.6 1.6 L6.5 3.3 L8.4 1.6 M4.6 11.4 L6.5 9.7 L8.4 11.4" stroke-width="1"/></g></g></svg>
<div style="position:absolute;left:444px;top:443px;white-space:nowrap;font-size:13px;color:#f2f2f2;width:20px;text-align:center;">R</div>
<div style="position:absolute;left:444px;top:443px;width:1px;height:16px;background:#323232;"></div>
<div style="position:absolute;left:475px;top:445px;width:63px;height:12px;background:#313131;border-radius:6px;"></div>
<div style="position:absolute;left:483px;top:441.5px;width:19px;height:19px;background:radial-gradient(circle at 50% 45%,#808080,#737373);border:1.3px solid #bdbdbd;border-radius:50%;box-shadow:0 1px 1px rgba(0,0,0,0.4);"></div>
<svg style="position:absolute;left:546.9px;top:425.4px;" width="31.2" height="31.2" viewBox="0 0 31.2 31.2"><path d="M7.85 24.83 A12.049999999999999 12.049999999999999 0 1 1 23.35 24.83" stroke="#2b2b2b" stroke-width="3.1" fill="none"/><path d="M7.85 24.83 A12.049999999999999 12.049999999999999 0 0 1 15.60 3.55" stroke="#3fcb6a" stroke-width="3.1" fill="none"/><circle cx="15.6" cy="15.6" r="10.5" fill="#7d7d7d"/><path d="M14.79 16.57 L8.85 23.64" stroke="#222" stroke-width="1.2"/></svg>
<div style="position:absolute;left:550.5px;top:451px;white-space:nowrap;font-size:6.5px;color:#c4c4c4;font-weight:bold;">L</div>
<div style="position:absolute;left:568px;top:451px;white-space:nowrap;font-size:6.5px;color:#c4c4c4;font-weight:bold;">R</div>
<div style="position:absolute;left:264px;top:467px;width:324px;height:53px;background:#636363;border-top:1px solid #4d4d4d;"></div>
<div style="position:absolute;left:264px;top:467px;width:8px;height:53px;background:#2b5a85;border-top:1px solid #4a4a4a;"></div>
<div style="position:absolute;left:272px;top:467px;width:1px;height:53px;background:#4d4a4b;"></div>
<div style="position:absolute;left:272px;top:467px;width:13px;height:54px;background:#5e5e5e;"></div>
<div style="position:absolute;left:285px;top:467px;width:1.2px;height:54px;background:#4f4f4f;"></div>
<div style="position:absolute;left:303px;top:483px;width:31px;height:23px;background:linear-gradient(#34404c,#2b3440);border-radius:3px;box-shadow:0 0 0 0.5px #2a2f36;"></div>
<svg style="position:absolute;left:303px;top:483px;" width="31" height="23" viewBox="0 0 31 23"><circle cx="4.0" cy="11.5" r="1.1" fill="#3ba6ea"/><rect x="5.5" y="9.00" width="1.2" height="5.00" fill="#3ba6ea"/><rect x="7.5" y="9.50" width="1.2" height="4.00" fill="#3ba6ea"/><rect x="9.5" y="7.00" width="1.2" height="9.00" fill="#3ba6ea"/><rect x="11.5" y="9.00" width="1.2" height="5.00" fill="#3ba6ea"/><rect x="13.5" y="7.50" width="1.2" height="8.00" fill="#3ba6ea"/><rect x="15.5" y="4.00" width="1.2" height="15.00" fill="#3ba6ea"/><rect x="17.5" y="7.00" width="1.2" height="9.00" fill="#3ba6ea"/><rect x="19.5" y="8.50" width="1.2" height="6.00" fill="#3ba6ea"/><rect x="21.5" y="7.50" width="1.2" height="8.00" fill="#3ba6ea"/><rect x="23.5" y="9.50" width="1.2" height="4.00" fill="#3ba6ea"/><circle cx="26.0" cy="11.5" r="1.1" fill="#3ba6ea"/></svg>
<div style="position:absolute;left:349px;top:476px;white-space:nowrap;font-size:13.5px;color:#f4f4f4;transform:scaleX(0.94);transform-origin:0 0;">JOHN MID 2</div>
<div style="position:absolute;left:349px;top:495px;width:21px;height:18px;background:#2f6aa6;border:1px solid #24558a;border-radius:4px;"></div>
<svg style="position:absolute;left:352px;top:497px;" width="15" height="14" viewBox="0 0 15 14"><path d="M4.2 4.2 A5 5 0 1 0 10.8 4.2" stroke="#e8eef5" stroke-width="1.3" fill="none"/><path d="M7.5 1.5 V7" stroke="#e8eef5" stroke-width="1.3"/></svg>
<div style="position:absolute;left:376px;top:495px;width:41px;height:18px;background:#4a4a4a;border:1px solid #323232;border-radius:4px;overflow:hidden;"></div>
<div style="position:absolute;left:376px;top:496px;white-space:nowrap;font-size:13px;color:#f2f2f2;width:20px;text-align:center;">M</div>
<div style="position:absolute;left:396px;top:496px;white-space:nowrap;font-size:13px;color:#f2f2f2;width:20px;text-align:center;">S</div>
<div style="position:absolute;left:396px;top:496px;width:1px;height:16px;background:#323232;"></div>
<div style="position:absolute;left:423px;top:495px;width:41px;height:18px;background:#4a4a4a;border:1px solid #323232;border-radius:4px;overflow:hidden;"></div>
<svg style="position:absolute;left:427px;top:497px;" width="13" height="13" viewBox="0 0 13 13"><g stroke="#f4f4f4" stroke-width="1.3" stroke-linecap="round"><g transform="rotate(0 6.5 6.5)"><path d="M6.5 0.8 V12.2"/><path d="M4.6 1.6 L6.5 3.3 L8.4 1.6 M4.6 11.4 L6.5 9.7 L8.4 11.4" stroke-width="1"/></g><g transform="rotate(60 6.5 6.5)"><path d="M6.5 0.8 V12.2"/><path d="M4.6 1.6 L6.5 3.3 L8.4 1.6 M4.6 11.4 L6.5 9.7 L8.4 11.4" stroke-width="1"/></g><g transform="rotate(120 6.5 6.5)"><path d="M6.5 0.8 V12.2"/><path d="M4.6 1.6 L6.5 3.3 L8.4 1.6 M4.6 11.4 L6.5 9.7 L8.4 11.4" stroke-width="1"/></g></g></svg>
<div style="position:absolute;left:444px;top:496px;white-space:nowrap;font-size:13px;color:#f2f2f2;width:20px;text-align:center;">R</div>
<div style="position:absolute;left:444px;top:496px;width:1px;height:16px;background:#323232;"></div>
<div style="position:absolute;left:475px;top:498px;width:63px;height:12px;background:#313131;border-radius:6px;"></div>
<div style="position:absolute;left:483px;top:494.5px;width:19px;height:19px;background:radial-gradient(circle at 50% 45%,#808080,#737373);border:1.3px solid #bdbdbd;border-radius:50%;box-shadow:0 1px 1px rgba(0,0,0,0.4);"></div>
<svg style="position:absolute;left:546.9px;top:478.4px;" width="31.2" height="31.2" viewBox="0 0 31.2 31.2"><path d="M7.85 24.83 A12.049999999999999 12.049999999999999 0 1 1 23.35 24.83" stroke="#2b2b2b" stroke-width="3.1" fill="none"/><path d="M15.60 3.55 A12.049999999999999 12.049999999999999 0 0 1 23.35 24.83" stroke="#3fcb6a" stroke-width="3.1" fill="none"/><circle cx="15.6" cy="15.6" r="10.5" fill="#7d7d7d"/><path d="M16.41 16.57 L22.35 23.64" stroke="#222" stroke-width="1.2"/></svg>
<div style="position:absolute;left:550.5px;top:504px;white-space:nowrap;font-size:6.5px;color:#c4c4c4;font-weight:bold;">L</div>
<div style="position:absolute;left:568px;top:504px;white-space:nowrap;font-size:6.5px;color:#c4c4c4;font-weight:bold;">R</div>
<div style="position:absolute;left:264px;top:520px;width:324px;height:53px;background:#636363;border-top:1px solid #4d4d4d;"></div>
<div style="position:absolute;left:264px;top:520px;width:8px;height:53px;background:#2b5a85;border-top:1px solid #4a4a4a;"></div>
<div style="position:absolute;left:272px;top:520px;width:1px;height:53px;background:#4d4a4b;"></div>
<div style="position:absolute;left:272px;top:520px;width:13px;height:54px;background:#5e5e5e;"></div>
<div style="position:absolute;left:285px;top:520px;width:1.2px;height:54px;background:#4f4f4f;"></div>
<div style="position:absolute;left:303px;top:536px;width:31px;height:23px;background:linear-gradient(#34404c,#2b3440);border-radius:3px;box-shadow:0 0 0 0.5px #2a2f36;"></div>
<svg style="position:absolute;left:303px;top:536px;" width="31" height="23" viewBox="0 0 31 23"><circle cx="4.0" cy="11.5" r="1.1" fill="#3ba6ea"/><rect x="5.5" y="9.00" width="1.2" height="5.00" fill="#3ba6ea"/><rect x="7.5" y="9.50" width="1.2" height="4.00" fill="#3ba6ea"/><rect x="9.5" y="7.00" width="1.2" height="9.00" fill="#3ba6ea"/><rect x="11.5" y="9.00" width="1.2" height="5.00" fill="#3ba6ea"/><rect x="13.5" y="7.50" width="1.2" height="8.00" fill="#3ba6ea"/><rect x="15.5" y="4.00" width="1.2" height="15.00" fill="#3ba6ea"/><rect x="17.5" y="7.00" width="1.2" height="9.00" fill="#3ba6ea"/><rect x="19.5" y="8.50" width="1.2" height="6.00" fill="#3ba6ea"/><rect x="21.5" y="7.50" width="1.2" height="8.00" fill="#3ba6ea"/><rect x="23.5" y="9.50" width="1.2" height="4.00" fill="#3ba6ea"/><circle cx="26.0" cy="11.5" r="1.1" fill="#3ba6ea"/></svg>
<div style="position:absolute;left:349px;top:529px;white-space:nowrap;font-size:13.5px;color:#f4f4f4;transform:scaleX(0.94);transform-origin:0 0;">JOHN HI</div>
<div style="position:absolute;left:349px;top:548px;width:21px;height:18px;background:#2f6aa6;border:1px solid #24558a;border-radius:4px;"></div>
<svg style="position:absolute;left:352px;top:550px;" width="15" height="14" viewBox="0 0 15 14"><path d="M4.2 4.2 A5 5 0 1 0 10.8 4.2" stroke="#e8eef5" stroke-width="1.3" fill="none"/><path d="M7.5 1.5 V7" stroke="#e8eef5" stroke-width="1.3"/></svg>
<div style="position:absolute;left:376px;top:548px;width:41px;height:18px;background:#4a4a4a;border:1px solid #323232;border-radius:4px;overflow:hidden;"></div>
<div style="position:absolute;left:376px;top:549px;white-space:nowrap;font-size:13px;color:#f2f2f2;width:20px;text-align:center;">M</div>
<div style="position:absolute;left:396px;top:549px;white-space:nowrap;font-size:13px;color:#f2f2f2;width:20px;text-align:center;">S</div>
<div style="position:absolute;left:396px;top:549px;width:1px;height:16px;background:#323232;"></div>
<div style="position:absolute;left:423px;top:548px;width:41px;height:18px;background:#4a4a4a;border:1px solid #323232;border-radius:4px;overflow:hidden;"></div>
<svg style="position:absolute;left:427px;top:550px;" width="13" height="13" viewBox="0 0 13 13"><g stroke="#f4f4f4" stroke-width="1.3" stroke-linecap="round"><g transform="rotate(0 6.5 6.5)"><path d="M6.5 0.8 V12.2"/><path d="M4.6 1.6 L6.5 3.3 L8.4 1.6 M4.6 11.4 L6.5 9.7 L8.4 11.4" stroke-width="1"/></g><g transform="rotate(60 6.5 6.5)"><path d="M6.5 0.8 V12.2"/><path d="M4.6 1.6 L6.5 3.3 L8.4 1.6 M4.6 11.4 L6.5 9.7 L8.4 11.4" stroke-width="1"/></g><g transform="rotate(120 6.5 6.5)"><path d="M6.5 0.8 V12.2"/><path d="M4.6 1.6 L6.5 3.3 L8.4 1.6 M4.6 11.4 L6.5 9.7 L8.4 11.4" stroke-width="1"/></g></g></svg>
<div style="position:absolute;left:444px;top:549px;white-space:nowrap;font-size:13px;color:#f2f2f2;width:20px;text-align:center;">R</div>
<div style="position:absolute;left:444px;top:549px;width:1px;height:16px;background:#323232;"></div>
<div style="position:absolute;left:475px;top:551px;width:63px;height:12px;background:#313131;border-radius:6px;"></div>
<div style="position:absolute;left:483px;top:547.5px;width:19px;height:19px;background:radial-gradient(circle at 50% 45%,#808080,#737373);border:1.3px solid #bdbdbd;border-radius:50%;box-shadow:0 1px 1px rgba(0,0,0,0.4);"></div>
<svg style="position:absolute;left:546.9px;top:531.4px;" width="31.2" height="31.2" viewBox="0 0 31.2 31.2"><path d="M7.85 24.83 A12.049999999999999 12.049999999999999 0 1 1 23.35 24.83" stroke="#2b2b2b" stroke-width="3.1" fill="none"/><path d="M7.85 24.83 A12.049999999999999 12.049999999999999 0 0 1 15.60 3.55" stroke="#3fcb6a" stroke-width="3.1" fill="none"/><circle cx="15.6" cy="15.6" r="10.5" fill="#7d7d7d"/><path d="M14.79 16.57 L8.85 23.64" stroke="#222" stroke-width="1.2"/></svg>
<div style="position:absolute;left:550.5px;top:557px;white-space:nowrap;font-size:6.5px;color:#c4c4c4;font-weight:bold;">L</div>
<div style="position:absolute;left:568px;top:557px;white-space:nowrap;font-size:6.5px;color:#c4c4c4;font-weight:bold;">R</div>
<div style="position:absolute;left:264px;top:573px;width:324px;height:53px;background:#636363;border-top:1px solid #4d4d4d;"></div>
<div style="position:absolute;left:264px;top:573px;width:8px;height:53px;background:#2b5a85;border-top:1px solid #4a4a4a;"></div>
<div style="position:absolute;left:272px;top:573px;width:1px;height:53px;background:#4d4a4b;"></div>
<div style="position:absolute;left:272px;top:573px;width:13px;height:54px;background:#5e5e5e;"></div>
<div style="position:absolute;left:285px;top:573px;width:1.2px;height:54px;background:#4f4f4f;"></div>
<div style="position:absolute;left:303px;top:589px;width:31px;height:23px;background:linear-gradient(#34404c,#2b3440);border-radius:3px;box-shadow:0 0 0 0.5px #2a2f36;"></div>
<svg style="position:absolute;left:303px;top:589px;" width="31" height="23" viewBox="0 0 31 23"><circle cx="4.0" cy="11.5" r="1.1" fill="#3ba6ea"/><rect x="5.5" y="9.00" width="1.2" height="5.00" fill="#3ba6ea"/><rect x="7.5" y="9.50" width="1.2" height="4.00" fill="#3ba6ea"/><rect x="9.5" y="7.00" width="1.2" height="9.00" fill="#3ba6ea"/><rect x="11.5" y="9.00" width="1.2" height="5.00" fill="#3ba6ea"/><rect x="13.5" y="7.50" width="1.2" height="8.00" fill="#3ba6ea"/><rect x="15.5" y="4.00" width="1.2" height="15.00" fill="#3ba6ea"/><rect x="17.5" y="7.00" width="1.2" height="9.00" fill="#3ba6ea"/><rect x="19.5" y="8.50" width="1.2" height="6.00" fill="#3ba6ea"/><rect x="21.5" y="7.50" width="1.2" height="8.00" fill="#3ba6ea"/><rect x="23.5" y="9.50" width="1.2" height="4.00" fill="#3ba6ea"/><circle cx="26.0" cy="11.5" r="1.1" fill="#3ba6ea"/></svg>
<div style="position:absolute;left:349px;top:582px;white-space:nowrap;font-size:13.5px;color:#f4f4f4;transform:scaleX(0.94);transform-origin:0 0;">JOHN HI 2</div>
<div style="position:absolute;left:349px;top:601px;width:21px;height:18px;background:#2f6aa6;border:1px solid #24558a;border-radius:4px;"></div>
<svg style="position:absolute;left:352px;top:603px;" width="15" height="14" viewBox="0 0 15 14"><path d="M4.2 4.2 A5 5 0 1 0 10.8 4.2" stroke="#e8eef5" stroke-width="1.3" fill="none"/><path d="M7.5 1.5 V7" stroke="#e8eef5" stroke-width="1.3"/></svg>
<div style="position:absolute;left:376px;top:601px;width:41px;height:18px;background:#4a4a4a;border:1px solid #323232;border-radius:4px;overflow:hidden;"></div>
<div style="position:absolute;left:376px;top:602px;white-space:nowrap;font-size:13px;color:#f2f2f2;width:20px;text-align:center;">M</div>
<div style="position:absolute;left:396px;top:602px;white-space:nowrap;font-size:13px;color:#f2f2f2;width:20px;text-align:center;">S</div>
<div style="position:absolute;left:396px;top:602px;width:1px;height:16px;background:#323232;"></div>
<div style="position:absolute;left:423px;top:601px;width:41px;height:18px;background:#4a4a4a;border:1px solid #323232;border-radius:4px;overflow:hidden;"></div>
<svg style="position:absolute;left:427px;top:603px;" width="13" height="13" viewBox="0 0 13 13"><g stroke="#f4f4f4" stroke-width="1.3" stroke-linecap="round"><g transform="rotate(0 6.5 6.5)"><path d="M6.5 0.8 V12.2"/><path d="M4.6 1.6 L6.5 3.3 L8.4 1.6 M4.6 11.4 L6.5 9.7 L8.4 11.4" stroke-width="1"/></g><g transform="rotate(60 6.5 6.5)"><path d="M6.5 0.8 V12.2"/><path d="M4.6 1.6 L6.5 3.3 L8.4 1.6 M4.6 11.4 L6.5 9.7 L8.4 11.4" stroke-width="1"/></g><g transform="rotate(120 6.5 6.5)"><path d="M6.5 0.8 V12.2"/><path d="M4.6 1.6 L6.5 3.3 L8.4 1.6 M4.6 11.4 L6.5 9.7 L8.4 11.4" stroke-width="1"/></g></g></svg>
<div style="position:absolute;left:444px;top:602px;white-space:nowrap;font-size:13px;color:#f2f2f2;width:20px;text-align:center;">R</div>
<div style="position:absolute;left:444px;top:602px;width:1px;height:16px;background:#323232;"></div>
<div style="position:absolute;left:475px;top:604px;width:63px;height:12px;background:#313131;border-radius:6px;"></div>
<div style="position:absolute;left:483px;top:600.5px;width:19px;height:19px;background:radial-gradient(circle at 50% 45%,#808080,#737373);border:1.3px solid #bdbdbd;border-radius:50%;box-shadow:0 1px 1px rgba(0,0,0,0.4);"></div>
<svg style="position:absolute;left:546.9px;top:584.4px;" width="31.2" height="31.2" viewBox="0 0 31.2 31.2"><path d="M7.85 24.83 A12.049999999999999 12.049999999999999 0 1 1 23.35 24.83" stroke="#2b2b2b" stroke-width="3.1" fill="none"/><path d="M15.60 3.55 A12.049999999999999 12.049999999999999 0 0 1 23.35 24.83" stroke="#3fcb6a" stroke-width="3.1" fill="none"/><circle cx="15.6" cy="15.6" r="10.5" fill="#7d7d7d"/><path d="M16.41 16.57 L22.35 23.64" stroke="#222" stroke-width="1.2"/></svg>
<div style="position:absolute;left:550.5px;top:610px;white-space:nowrap;font-size:6.5px;color:#c4c4c4;font-weight:bold;">L</div>
<div style="position:absolute;left:568px;top:610px;white-space:nowrap;font-size:6.5px;color:#c4c4c4;font-weight:bold;">R</div>
<div style="position:absolute;left:264px;top:626px;width:324px;height:53px;background:#636363;border-top:1px solid #4d4d4d;"></div>
<div style="position:absolute;left:264px;top:626px;width:8px;height:53px;background:#2b5a85;border-top:1px solid #4a4a4a;"></div>
<div style="position:absolute;left:272px;top:626px;width:1px;height:53px;background:#4d4a4b;"></div>
<div style="position:absolute;left:272px;top:626px;width:13px;height:54px;background:#5e5e5e;"></div>
<div style="position:absolute;left:285px;top:626px;width:1.2px;height:54px;background:#4f4f4f;"></div>
<div style="position:absolute;left:303px;top:642px;width:31px;height:23px;background:linear-gradient(#34404c,#2b3440);border-radius:3px;box-shadow:0 0 0 0.5px #2a2f36;"></div>
<svg style="position:absolute;left:303px;top:642px;" width="31" height="23" viewBox="0 0 31 23"><circle cx="4.0" cy="11.5" r="1.1" fill="#3ba6ea"/><rect x="5.5" y="9.00" width="1.2" height="5.00" fill="#3ba6ea"/><rect x="7.5" y="9.50" width="1.2" height="4.00" fill="#3ba6ea"/><rect x="9.5" y="7.00" width="1.2" height="9.00" fill="#3ba6ea"/><rect x="11.5" y="9.00" width="1.2" height="5.00" fill="#3ba6ea"/><rect x="13.5" y="7.50" width="1.2" height="8.00" fill="#3ba6ea"/><rect x="15.5" y="4.00" width="1.2" height="15.00" fill="#3ba6ea"/><rect x="17.5" y="7.00" width="1.2" height="9.00" fill="#3ba6ea"/><rect x="19.5" y="8.50" width="1.2" height="6.00" fill="#3ba6ea"/><rect x="21.5" y="7.50" width="1.2" height="8.00" fill="#3ba6ea"/><rect x="23.5" y="9.50" width="1.2" height="4.00" fill="#3ba6ea"/><circle cx="26.0" cy="11.5" r="1.1" fill="#3ba6ea"/></svg>
<div style="position:absolute;left:349px;top:635px;white-space:nowrap;font-size:13.5px;color:#f4f4f4;transform:scaleX(0.94);transform-origin:0 0;">YELLS</div>
<div style="position:absolute;left:349px;top:654px;width:21px;height:18px;background:#2f6aa6;border:1px solid #24558a;border-radius:4px;"></div>
<svg style="position:absolute;left:352px;top:656px;" width="15" height="14" viewBox="0 0 15 14"><path d="M4.2 4.2 A5 5 0 1 0 10.8 4.2" stroke="#e8eef5" stroke-width="1.3" fill="none"/><path d="M7.5 1.5 V7" stroke="#e8eef5" stroke-width="1.3"/></svg>
<div style="position:absolute;left:376px;top:654px;width:41px;height:18px;background:#4a4a4a;border:1px solid #323232;border-radius:4px;overflow:hidden;"></div>
<div style="position:absolute;left:376px;top:655px;white-space:nowrap;font-size:13px;color:#f2f2f2;width:20px;text-align:center;">M</div>
<div style="position:absolute;left:396px;top:655px;white-space:nowrap;font-size:13px;color:#f2f2f2;width:20px;text-align:center;">S</div>
<div style="position:absolute;left:396px;top:655px;width:1px;height:16px;background:#323232;"></div>
<div style="position:absolute;left:423px;top:654px;width:41px;height:18px;background:#4a4a4a;border:1px solid #323232;border-radius:4px;overflow:hidden;"></div>
<svg style="position:absolute;left:427px;top:656px;" width="13" height="13" viewBox="0 0 13 13"><g stroke="#f4f4f4" stroke-width="1.3" stroke-linecap="round"><g transform="rotate(0 6.5 6.5)"><path d="M6.5 0.8 V12.2"/><path d="M4.6 1.6 L6.5 3.3 L8.4 1.6 M4.6 11.4 L6.5 9.7 L8.4 11.4" stroke-width="1"/></g><g transform="rotate(60 6.5 6.5)"><path d="M6.5 0.8 V12.2"/><path d="M4.6 1.6 L6.5 3.3 L8.4 1.6 M4.6 11.4 L6.5 9.7 L8.4 11.4" stroke-width="1"/></g><g transform="rotate(120 6.5 6.5)"><path d="M6.5 0.8 V12.2"/><path d="M4.6 1.6 L6.5 3.3 L8.4 1.6 M4.6 11.4 L6.5 9.7 L8.4 11.4" stroke-width="1"/></g></g></svg>
<div style="position:absolute;left:444px;top:655px;white-space:nowrap;font-size:13px;color:#f2f2f2;width:20px;text-align:center;">R</div>
<div style="position:absolute;left:444px;top:655px;width:1px;height:16px;background:#323232;"></div>
<div style="position:absolute;left:475px;top:657px;width:63px;height:12px;background:#313131;border-radius:6px;"></div>
<div style="position:absolute;left:483px;top:653.5px;width:19px;height:19px;background:radial-gradient(circle at 50% 45%,#808080,#737373);border:1.3px solid #bdbdbd;border-radius:50%;box-shadow:0 1px 1px rgba(0,0,0,0.4);"></div>
<svg style="position:absolute;left:546.9px;top:637.4px;" width="31.2" height="31.2" viewBox="0 0 31.2 31.2"><path d="M7.85 24.83 A12.049999999999999 12.049999999999999 0 1 1 23.35 24.83" stroke="#2b2b2b" stroke-width="3.1" fill="none"/><circle cx="15.6" cy="15.6" r="10.5" fill="#7d7d7d"/><path d="M15.60 14.34 L15.60 5.10" stroke="#222" stroke-width="1.2"/><path d="M14.76 3.58 A12.049999999999999 12.049999999999999 0 0 1 16.44 3.58" stroke="#3fcb6a" stroke-width="3.1" fill="none"/></svg>
<div style="position:absolute;left:550.5px;top:663px;white-space:nowrap;font-size:6.5px;color:#c4c4c4;font-weight:bold;">L</div>
<div style="position:absolute;left:568px;top:663px;white-space:nowrap;font-size:6.5px;color:#c4c4c4;font-weight:bold;">R</div>
<div style="position:absolute;left:264px;top:679px;width:324px;height:53px;background:#636363;border-top:1px solid #4d4d4d;"></div>
<div style="position:absolute;left:264px;top:679px;width:8px;height:53px;background:#0c7d3a;border-top:1px solid #4a4a4a;"></div>
<div style="position:absolute;left:272px;top:679px;width:1px;height:53px;background:#4d4a4b;"></div>
<div style="position:absolute;left:280px;top:689px;width:62px;height:34px;background:#5b5b5b;border:1px solid #4e4e4e;border-radius:6px;"></div>
<svg style="position:absolute;left:285px;top:702px;" width="12" height="10" viewBox="0 0 12 10"><path d="M1 1 H11 L6 9Z" fill="#e0e0e0"/></svg>
<div style="position:absolute;left:303px;top:696px;width:30px;height:22px;background:#4c4932;border-radius:3px;box-shadow:0 0 0 0.5px #3a3a30;"></div>
<svg style="position:absolute;left:309px;top:699px;" width="18" height="16" viewBox="0 0 18 16"><circle cx="9" cy="8" r="7" fill="#f2e866"/><path d="M9 2.5 V8" stroke="#333" stroke-width="1.6"/></svg>
<div style="position:absolute;left:349px;top:688px;white-space:nowrap;font-size:13.5px;color:#f4f4f4;transform:scaleX(0.94);transform-origin:0 0;">JOHN SYNTH</div>
<div style="position:absolute;left:349px;top:707px;width:21px;height:18px;background:#2f6aa6;border:1px solid #24558a;border-radius:4px;"></div>
<svg style="position:absolute;left:352px;top:709px;" width="15" height="14" viewBox="0 0 15 14"><path d="M4.2 4.2 A5 5 0 1 0 10.8 4.2" stroke="#e8eef5" stroke-width="1.3" fill="none"/><path d="M7.5 1.5 V7" stroke="#e8eef5" stroke-width="1.3"/></svg>
<div style="position:absolute;left:376px;top:707px;width:41px;height:18px;background:#4a4a4a;border:1px solid #323232;border-radius:4px;overflow:hidden;"></div>
<div style="position:absolute;left:377px;top:708px;width:19px;height:16px;background:#1f7a80;border-radius:3px 0 0 3px;"></div>
<div style="position:absolute;left:376px;top:708px;white-space:nowrap;font-size:13px;color:#f2f2f2;width:20px;text-align:center;">M</div>
<div style="position:absolute;left:396px;top:708px;white-space:nowrap;font-size:13px;color:#f2f2f2;width:20px;text-align:center;">S</div>
<div style="position:absolute;left:396px;top:708px;width:1px;height:16px;background:#323232;"></div>
<div style="position:absolute;left:443px;top:707px;width:21px;height:18px;background:#4a4a4a;border:1px solid #323232;border-radius:4px;"></div>
<div style="position:absolute;left:443px;top:708px;white-space:nowrap;font-size:13px;color:#f2f2f2;width:21px;text-align:center;">R</div>
<div style="position:absolute;left:475px;top:710px;width:63px;height:12px;background:#313131;border-radius:6px;"></div>
<div style="position:absolute;left:500px;top:706.5px;width:19px;height:19px;background:radial-gradient(circle at 50% 45%,#808080,#737373);border:1.3px solid #bdbdbd;border-radius:50%;box-shadow:0 1px 1px rgba(0,0,0,0.4);"></div>
<svg style="position:absolute;left:546.9px;top:690.4px;" width="31.2" height="31.2" viewBox="0 0 31.2 31.2"><path d="M7.85 24.83 A12.049999999999999 12.049999999999999 0 1 1 23.35 24.83" stroke="#2b2b2b" stroke-width="3.1" fill="none"/><circle cx="15.6" cy="15.6" r="10.5" fill="#7d7d7d"/><path d="M15.60 14.34 L15.60 5.10" stroke="#222" stroke-width="1.2"/><path d="M14.76 3.58 A12.049999999999999 12.049999999999999 0 0 1 16.44 3.58" stroke="#3fcb6a" stroke-width="3.1" fill="none"/></svg>
<div style="position:absolute;left:550.5px;top:716px;white-space:nowrap;font-size:6.5px;color:#c4c4c4;font-weight:bold;">L</div>
<div style="position:absolute;left:568px;top:716px;white-space:nowrap;font-size:6.5px;color:#c4c4c4;font-weight:bold;">R</div>
<div style="position:absolute;left:264px;top:732px;width:324px;height:53px;background:#636363;border-top:1px solid #4d4d4d;"></div>
<div style="position:absolute;left:264px;top:732px;width:8px;height:53px;background:#0c7d3a;border-top:1px solid #4a4a4a;"></div>
<div style="position:absolute;left:272px;top:732px;width:1px;height:53px;background:#4d4a4b;"></div>
<div style="position:absolute;left:272px;top:732px;width:13px;height:54px;background:#5e5e5e;"></div>
<div style="position:absolute;left:285px;top:732px;width:303px;height:54px;background:#636363;border-left:1.2px solid #4f4f4f;border-top:1px solid #4f4f4f;border-radius:9px 0 0 0;"></div>
<svg style="position:absolute;left:305px;top:742px;" width="30" height="34" viewBox="0 0 30 34"><path d="M3 8 L6 4 L27 5 L25 9 Z" fill="#dfe6ea" stroke="#8a8f94" stroke-width="0.6"/><path d="M8 6 L23 6.8 M9 5.2 L18 5.6" stroke="#7aa0b8" stroke-width="1"/><path d="M3 8 L25 9 L25 10.5 L3 9.5 Z" fill="#8a4a25"/><path d="M8 10 L21 27 M19 10 L8 24" stroke="#1e1e1e" stroke-width="1.3"/><path d="M4 25 Q7 23.5 9 24 M17 28.5 L23 26.5" stroke="#1e1e1e" stroke-width="1.4" fill="none"/><ellipse cx="14" cy="26" rx="8" ry="2.2" fill="#000" opacity="0.15"/></svg>
<div style="position:absolute;left:349px;top:741px;white-space:nowrap;font-size:13.5px;color:#f4f4f4;transform:scaleX(0.94);transform-origin:0 0;">Crackling Lead</div>
<div style="position:absolute;left:349px;top:760px;width:21px;height:18px;background:#2f6aa6;border:1px solid #24558a;border-radius:4px;"></div>
<svg style="position:absolute;left:352px;top:762px;" width="15" height="14" viewBox="0 0 15 14"><path d="M4.2 4.2 A5 5 0 1 0 10.8 4.2" stroke="#e8eef5" stroke-width="1.3" fill="none"/><path d="M7.5 1.5 V7" stroke="#e8eef5" stroke-width="1.3"/></svg>
<div style="position:absolute;left:376px;top:760px;width:41px;height:18px;background:#4a4a4a;border:1px solid #323232;border-radius:4px;overflow:hidden;"></div>
<div style="position:absolute;left:376px;top:761px;white-space:nowrap;font-size:13px;color:#f2f2f2;width:20px;text-align:center;">M</div>
<div style="position:absolute;left:396px;top:761px;white-space:nowrap;font-size:13px;color:#f2f2f2;width:20px;text-align:center;">S</div>
<div style="position:absolute;left:396px;top:761px;width:1px;height:16px;background:#323232;"></div>
<div style="position:absolute;left:423px;top:760px;width:41px;height:18px;background:#4a4a4a;border:1px solid #323232;border-radius:4px;overflow:hidden;"></div>
<svg style="position:absolute;left:427px;top:762px;" width="13" height="13" viewBox="0 0 13 13"><g stroke="#f4f4f4" stroke-width="1.3" stroke-linecap="round"><g transform="rotate(0 6.5 6.5)"><path d="M6.5 0.8 V12.2"/><path d="M4.6 1.6 L6.5 3.3 L8.4 1.6 M4.6 11.4 L6.5 9.7 L8.4 11.4" stroke-width="1"/></g><g transform="rotate(60 6.5 6.5)"><path d="M6.5 0.8 V12.2"/><path d="M4.6 1.6 L6.5 3.3 L8.4 1.6 M4.6 11.4 L6.5 9.7 L8.4 11.4" stroke-width="1"/></g><g transform="rotate(120 6.5 6.5)"><path d="M6.5 0.8 V12.2"/><path d="M4.6 1.6 L6.5 3.3 L8.4 1.6 M4.6 11.4 L6.5 9.7 L8.4 11.4" stroke-width="1"/></g></g></svg>
<div style="position:absolute;left:444px;top:761px;white-space:nowrap;font-size:13px;color:#f2f2f2;width:20px;text-align:center;">R</div>
<div style="position:absolute;left:444px;top:761px;width:1px;height:16px;background:#323232;"></div>
<div style="position:absolute;left:475px;top:763px;width:63px;height:12px;background:#313131;border-radius:6px;"></div>
<div style="position:absolute;left:510px;top:759.5px;width:19px;height:19px;background:radial-gradient(circle at 50% 45%,#808080,#737373);border:1.3px solid #bdbdbd;border-radius:50%;box-shadow:0 1px 1px rgba(0,0,0,0.4);"></div>
<svg style="position:absolute;left:546.9px;top:743.4px;" width="31.2" height="31.2" viewBox="0 0 31.2 31.2"><path d="M7.85 24.83 A12.049999999999999 12.049999999999999 0 1 1 23.35 24.83" stroke="#2b2b2b" stroke-width="3.1" fill="none"/><circle cx="15.6" cy="15.6" r="10.5" fill="#7d7d7d"/><path d="M15.60 14.34 L15.60 5.10" stroke="#222" stroke-width="1.2"/><path d="M14.76 3.58 A12.049999999999999 12.049999999999999 0 0 1 16.44 3.58" stroke="#3fcb6a" stroke-width="3.1" fill="none"/></svg>
<div style="position:absolute;left:550.5px;top:769px;white-space:nowrap;font-size:6.5px;color:#c4c4c4;font-weight:bold;">L</div>
<div style="position:absolute;left:568px;top:769px;white-space:nowrap;font-size:6.5px;color:#c4c4c4;font-weight:bold;">R</div>
<div style="position:absolute;left:264px;top:785px;width:324px;height:12px;background:#636363;border-top:1px solid #4d4d4d;"></div>
<div style="position:absolute;left:264px;top:785px;width:8px;height:12px;background:#0c7d3a;"></div>
<div style="position:absolute;left:285px;top:785px;width:1.5px;height:12px;background:#4f4f4f;"></div>
<div style="position:absolute;left:349px;top:796px;white-space:nowrap;font-size:13.5px;color:#f4f4f4;">Crackling Lead</div>
<div style="position:absolute;left:436px;top:690px;width:1px;height:12px;background:#8a8a8a;"></div>
<div style="position:absolute;left:442px;top:688px;white-space:nowrap;font-size:13.5px;color:#f4f4f4;">C</div>
<svg style="position:absolute;left:453px;top:689px;" width="12" height="14" viewBox="0 0 12 14"><path d="M3 5 L6.5 1.5 L10 5 M3 8.5 L6.5 12 L10 8.5" stroke="#cfcfcf" stroke-width="1.2" fill="none"/></svg>
<div style="position:absolute;left:587px;top:192px;width:2px;height:605px;background:#262626;"></div>
<div style="position:absolute;left:589px;top:192px;width:737px;height:605px;background:#282e36;"></div>
<div style="position:absolute;left:589px;top:679px;width:737px;height:118px;background:#2b372d;"></div>
<div style="position:absolute;left:614px;top:202px;width:1px;height:595px;background:rgba(120,125,135,0.25);"></div>
<div style="position:absolute;left:674px;top:202px;width:1px;height:595px;background:rgba(120,125,135,0.25);"></div>
<div style="position:absolute;left:734px;top:202px;width:1px;height:595px;background:rgba(120,125,135,0.25);"></div>
<div style="position:absolute;left:794px;top:202px;width:1px;height:595px;background:rgba(120,125,135,0.25);"></div>
<div style="position:absolute;left:854px;top:202px;width:1px;height:595px;background:rgba(120,125,135,0.25);"></div>
<div style="position:absolute;left:914px;top:202px;width:1px;height:595px;background:rgba(120,125,135,0.25);"></div>
<div style="position:absolute;left:973px;top:202px;width:1px;height:595px;background:rgba(120,125,135,0.25);"></div>
<div style="position:absolute;left:1033px;top:202px;width:1px;height:595px;background:rgba(120,125,135,0.25);"></div>
<div style="position:absolute;left:1093px;top:202px;width:1px;height:595px;background:rgba(120,125,135,0.25);"></div>
<div style="position:absolute;left:1153px;top:202px;width:1px;height:595px;background:rgba(120,125,135,0.25);"></div>
<div style="position:absolute;left:1213px;top:202px;width:1px;height:595px;background:rgba(120,125,135,0.25);"></div>
<div style="position:absolute;left:1273px;top:202px;width:1px;height:595px;background:rgba(120,125,135,0.25);"></div>
<div style="position:absolute;left:589px;top:202px;width:737px;height:1px;background:rgba(0,0,0,0.25);"></div>
<div style="position:absolute;left:589px;top:255px;width:737px;height:1px;background:rgba(0,0,0,0.25);"></div>
<div style="position:absolute;left:589px;top:308px;width:737px;height:1px;background:rgba(0,0,0,0.25);"></div>
<div style="position:absolute;left:589px;top:361px;width:737px;height:1px;background:rgba(0,0,0,0.25);"></div>
<div style="position:absolute;left:589px;top:414px;width:737px;height:1px;background:rgba(0,0,0,0.25);"></div>
<div style="position:absolute;left:589px;top:467px;width:737px;height:1px;background:rgba(0,0,0,0.25);"></div>
<div style="position:absolute;left:589px;top:520px;width:737px;height:1px;background:rgba(0,0,0,0.25);"></div>
<div style="position:absolute;left:589px;top:573px;width:737px;height:1px;background:rgba(0,0,0,0.25);"></div>
<div style="position:absolute;left:589px;top:626px;width:737px;height:1px;background:rgba(0,0,0,0.25);"></div>
<div style="position:absolute;left:589px;top:679px;width:737px;height:1px;background:rgba(0,0,0,0.25);"></div>
<div style="position:absolute;left:589px;top:732px;width:737px;height:1px;background:rgba(0,0,0,0.25);"></div>
<div style="position:absolute;left:589px;top:785px;width:737px;height:1px;background:rgba(0,0,0,0.25);"></div>
<div style="position:absolute;left:589px;top:192px;width:737px;height:11px;background:#484848;border-bottom:1px solid #1e1e1e;"></div>
<svg style="position:absolute;left:589px;top:192px;" width="737" height="10" viewBox="0 0 737 10"><path d="M1 0V3H2V3H3V4H4V3H5V3H6V4H7V4H8V3H9V2H10V3H11V4H12V0Z" fill="#a2a2a2"/><path d="M16 0V4H17V6H18V5H19V5H20V5H21V4H22V4H23V5H24V5H25V5H26V0Z" fill="#a2a2a2"/><path d="M27 0V3H28V4H29V4H30V4H31V4H32V3H33V4H34V4H35V5H36V5H37V4H38V3H39V3H40V0Z" fill="#a2a2a2"/><path d="M46 0V6H47V6H48V7H49V6H50V6H51V7H52V6H53V6H54V8H55V7H56V7H57V7H58V0Z" fill="#a2a2a2"/><path d="M61 0V8H62V8H63V8H64V7H65V8H66V7H67V8H68V6H69V6H70V8H71V8H72V8H73V0Z" fill="#a2a2a2"/><path d="M79 0V7H80V6H81V8H82V0Z" fill="#a2a2a2"/><path d="M88 0V4H89V4H90V2H91V2H92V3H93V4H94V3H95V4H96V4H97V3H98V4H99V4H100V4H101V0Z" fill="#a2a2a2"/><path d="M101 0V5H102V5H103V5H104V4H105V5H106V5H107V5H108V5H109V5H110V6H111V6H112V5H113V5H114V4H115V0Z" fill="#a2a2a2"/><path d="M115 0V4H116V5H117V4H118V4H119V5H120V0Z" fill="#a2a2a2"/><path d="M123 0V5H124V5H125V5H126V7H127V6H128V0Z" fill="#a2a2a2"/><path d="M128 0V4H129V4H130V5H131V6H132V0Z" fill="#a2a2a2"/><path d="M132 0V2H133V2H134V1H135V2H136V2H137V1H138V3H139V2H140V1H141V1H142V1H143V3H144V2H145V2H146V0Z" fill="#a2a2a2"/><path d="M152 0V3H153V2H154V3H155V4H156V4H157V4H158V3H159V3H160V2H161V3H162V0Z" fill="#a2a2a2"/><path d="M164 0V2H165V3H166V2H167V2H168V3H169V3H170V0Z" fill="#a2a2a2"/><path d="M184 0V7H185V6H186V6H187V6H188V6H189V7H190V7H191V0Z" fill="#a2a2a2"/><path d="M193 0V7H194V7H195V7H196V6H197V8H198V8H199V8H200V0Z" fill="#a2a2a2"/><path d="M204 0V4H205V3H206V4H207V4H208V5H209V3H210V4H211V3H212V3H213V4H214V5H215V4H216V4H217V0Z" fill="#a2a2a2"/><path d="M226 0V3H227V3H228V0Z" fill="#a2a2a2"/><path d="M237 0V3H238V2H239V2H240V3H241V2H242V2H243V3H244V2H245V3H246V2H247V3H248V0Z" fill="#a2a2a2"/><path d="M262 0V8H263V6H264V7H265V8H266V7H267V7H268V7H269V6H270V6H271V0Z" fill="#a2a2a2"/><path d="M273 0V5H274V6H275V5H276V6H277V0Z" fill="#a2a2a2"/><path d="M279 0V2H280V3H281V4H282V3H283V2H284V4H285V2H286V4H287V4H288V2H289V2H290V4H291V4H292V3H293V0Z" fill="#a2a2a2"/><path d="M297 0V7H298V6H299V7H300V6H301V0Z" fill="#a2a2a2"/><path d="M310 0V2H311V2H312V3H313V2H314V1H315V2H316V0Z" fill="#a2a2a2"/><path d="M320 0V7H321V7H322V8H323V6H324V7H325V7H326V8H327V7H328V7H329V6H330V7H331V6H332V8H333V7H334V0Z" fill="#a2a2a2"/><path d="M337 0V7H338V7H339V7H340V7H341V6H342V7H343V6H344V7H345V7H346V6H347V0Z" fill="#a2a2a2"/><path d="M351 0V5H352V5H353V0Z" fill="#a2a2a2"/><path d="M354 0V6H355V6H356V6H357V6H358V5H359V5H360V7H361V5H362V0Z" fill="#a2a2a2"/><path d="M366 0V3H367V4H368V5H369V4H370V4H371V5H372V4H373V4H374V4H375V0Z" fill="#a2a2a2"/><path d="M377 0V4H378V4H379V4H380V0Z" fill="#a2a2a2"/><path d="M451 0V6H452V7H453V7H454V6H455V8H456V7H457V7H458V0Z" fill="#a2a2a2"/><path d="M460 0V7H461V8H462V7H463V7H464V7H465V7H466V8H467V7H468V8H469V0Z" fill="#a2a2a2"/><path d="M470 0V6H471V6H472V0Z" fill="#a2a2a2"/><path d="M478 0V7H479V7H480V8H481V7H482V7H483V7H484V7H485V6H486V6H487V6H488V0Z" fill="#a2a2a2"/><path d="M488 0V4H489V2H490V4H491V3H492V0Z" fill="#a2a2a2"/><path d="M492 0V7H493V7H494V5H495V6H496V5H497V7H498V5H499V6H500V6H501V6H502V7H503V6H504V6H505V0Z" fill="#a2a2a2"/><path d="M511 0V3H512V3H513V3H514V3H515V2H516V3H517V3H518V3H519V2H520V2H521V3H522V3H523V4H524V0Z" fill="#a2a2a2"/><path d="M538 0V2H539V2H540V3H541V2H542V1H543V1H544V2H545V2H546V2H547V0Z" fill="#a2a2a2"/><path d="M551 0V2H552V2H553V3H554V4H555V3H556V0Z" fill="#a2a2a2"/><path d="M556 0V6H557V6H558V8H559V8H560V7H561V7H562V7H563V8H564V7H565V7H566V0Z" fill="#a2a2a2"/><path d="M567 0V5H568V4H569V3H570V3H571V4H572V4H573V3H574V4H575V5H576V5H577V0Z" fill="#a2a2a2"/><path d="M591 0V5H592V3H593V4H594V5H595V5H596V5H597V4H598V4H599V0Z" fill="#a2a2a2"/><path d="M599 0V3H600V3H601V4H602V3H603V3H604V2H605V3H606V3H607V3H608V3H609V3H610V3H611V3H612V0Z" fill="#a2a2a2"/><path d="M612 0V6H613V6H614V5H615V6H616V6H617V6H618V6H619V6H620V0Z" fill="#a2a2a2"/><path d="M622 0V8H623V7H624V0Z" fill="#a2a2a2"/><path d="M658.5 0 V10 M660.5 0 V10" stroke="#8a8a8a" stroke-width="1"/></svg>
<div style="position:absolute;left:800px;top:276.5px;white-space:nowrap;font-size:11.2px;font-weight:bold;color:#9cc6ef;">JOHN</div>
<div style="position:absolute;left:800px;top:700.5px;white-space:nowrap;font-size:11.2px;font-weight:bold;color:#8fe39c;">JOHN SYNTH</div>
<div style="position:absolute;left:589px;top:203.5px;width:444px;height:50.5px;background:#2f5a82;border:1.5px solid #070b10;border-radius:0 4px 4px 0;overflow:hidden;"></div>
<svg style="position:absolute;left:590px;top:203.5px;" width="442" height="50.5" viewBox="0 0 442 50.5"><path d="M0 34.0 H444" stroke="#a4bdd4" stroke-width="1"/><path transform="translate(-1 0)" d="M0 30.3L1 27.6L2 23.6L3 21.3L4 23.0L5 25.7L6 27.7L7 29.6L8 28.4L9 29.0L10 30.1L11 30.3L12 30.2L13 26.5L14 23.3L15 19.3L16 22.9L17 25.1L18 28.1L19 28.0L20 26.8L21 24.0L22 23.6L23 20.8L24 21.9L25 22.9L26 24.3L27 25.6L28 27.1L29 27.9L30 29.6L31 30.4L32 26.6L33 27.2L34 27.8L35 28.8L36 29.0L37 29.1L38 28.8L39 30.2L40 28.7L41 24.2L42 20.1L43 21.4L44 24.3L45 28.2L46 29.5L47 28.2L48 27.0L49 25.7L50 24.7L51 23.5L52 23.8L53 24.5L54 25.8L55 27.5L56 27.6L57 29.3L58 28.8L59 30.8L60 28.7L61 29.4L62 27.1L63 23.4L64 19.5L65 22.1L66 23.3L67 23.9L68 23.9L69 24.0L70 25.3L71 25.9L72 26.8L73 27.2L74 28.4L75 28.7L76 29.4L77 30.0L78 29.3L79 27.4L80 26.0L81 24.1L82 23.2L83 20.5L84 22.1L85 24.2L86 25.4L87 26.0L88 27.1L89 29.2L90 20.8L91 20.8L92 21.4L93 22.9L94 23.4L95 24.4L96 24.9L97 25.9L98 26.8L99 28.2L100 28.8L101 29.8L102 29.8L103 30.5L104 30.3L105 28.8L106 25.8L107 26.2L108 27.4L109 27.5L110 28.3L111 29.1L112 29.6L113 28.3L114 30.9L115 30.5L116 29.7L117 30.0L118 20.7L119 22.0L120 23.9L121 25.2L122 20.8L123 22.3L124 22.9L125 24.1L126 25.9L127 27.0L128 28.0L129 29.3L130 29.5L131 30.4L132 30.4L133 27.6L134 25.0L135 23.3L136 23.0L137 25.1L138 26.0L139 28.4L140 29.9L141 29.9L142 18.5L143 20.1L144 22.7L145 25.3L146 27.9L147 19.5L148 20.2L149 21.4L150 22.5L151 23.7L152 24.2L153 25.9L154 26.8L155 27.3L156 28.4L157 28.9L158 18.5L159 20.0L160 23.5L161 26.2L162 28.0L163 29.1L164 30.2L165 24.6L166 25.9L167 27.8L168 28.0L169 29.1L170 29.8L171 27.4L172 25.5L173 23.7L174 21.6L175 19.9L176 18.5L177 18.7L178 21.6L179 21.6L180 23.8L181 24.9L182 26.4L183 28.1L184 30.1L185 29.7L186 18.5L187 21.1L188 22.3L189 23.2L190 24.8L191 26.7L192 28.0L193 29.7L194 22.1L195 22.5L196 23.0L197 25.2L198 26.4L199 26.4L200 27.8L201 29.2L202 29.3L203 29.3L204 30.0L205 30.5L206 29.0L207 33.5L208 33.5L209 33.5L210 24.6L211 24.8L212 26.6L213 26.7L214 27.6L215 28.5L216 18.6L217 20.0L218 20.6L219 21.4L220 23.7L221 26.1L222 22.4L223 24.2L224 24.7L225 25.7L226 26.5L227 27.4L228 28.2L229 29.4L230 30.3L231 29.1L232 22.3L233 24.6L234 25.5L235 27.1L236 27.5L237 28.6L238 30.5L239 28.8L240 28.6L241 23.1L242 24.9L243 26.2L244 27.1L245 28.5L246 20.3L247 22.5L248 24.1L249 25.9L250 27.8L251 18.5L252 19.8L253 20.4L254 21.3L255 23.9L256 25.1L257 27.2L258 18.5L259 20.3L260 22.3L261 24.3L262 25.9L263 28.4L264 30.4L265 26.4L266 26.9L267 27.4L268 28.0L269 28.5L270 29.4L271 29.6L272 30.4L273 28.5L274 30.1L275 29.9L276 19.3L277 21.4L278 23.4L279 25.3L280 27.3L281 28.4L282 19.9L283 20.1L284 22.0L285 23.4L286 23.0L287 25.4L288 26.4L289 27.2L290 28.8L291 29.5L292 30.7L293 18.5L294 19.2L295 21.6L296 25.7L297 27.5L298 30.1L299 18.5L300 19.0L301 19.4L302 21.8L303 24.4L304 25.1L305 27.1L306 29.1L307 28.8L308 27.1L309 25.0L310 22.0L311 22.8L312 24.5L313 26.5L314 28.1L315 28.1L316 25.1L317 23.8L318 23.9L319 24.8L320 27.1L321 23.3L322 18.5L323 22.2L324 25.4L325 27.6L326 25.8L327 23.9L328 21.6L329 19.4L330 18.5L331 18.5L332 19.8L333 21.3L334 22.8L335 24.3L336 26.0L337 26.8L338 28.4L339 29.6L340 29.7L341 18.5L342 19.3L343 20.9L344 21.3L345 22.3L346 24.4L347 25.9L348 26.8L349 28.7L350 29.7L351 30.3L352 29.6L353 19.3L354 19.7L355 19.8L356 22.0L357 22.8L358 24.2L359 24.8L360 26.1L361 26.1L362 27.8L363 28.7L364 29.9L365 29.2L366 30.3L367 18.5L368 20.7L369 23.5L370 26.6L371 29.0L372 30.5L373 18.5L374 18.9L375 18.5L376 19.5L377 21.2L378 23.0L379 24.2L380 23.9L381 25.9L382 26.1L383 27.1L384 24.4L385 21.2L386 21.2L387 24.0L388 26.2L389 27.1L390 26.6L391 24.3L392 23.3L393 22.6L394 25.8L395 27.6L396 30.0L397 29.1L398 30.7L399 33.5L400 33.5L401 33.5L402 33.5L403 33.5L404 33.5L405 33.5L406 33.5L407 33.5L408 33.5L409 33.5L410 33.5L411 33.5L412 33.5L413 33.5L414 33.5L415 33.5L416 33.5L417 33.5L418 33.5L419 33.5L420 33.5L421 33.5L422 33.5L423 33.5L424 33.5L425 33.5L426 33.5L427 33.5L428 33.5L429 33.5L430 33.5L431 33.5L432 33.5L433 33.5L434 33.5L435 33.5L436 33.5L437 33.5L438 33.5L439 33.5L440 33.5L441 33.5L442 33.5L443 33.5L444 33.5L444 34.5L443 34.5L442 34.5L441 34.5L440 34.5L439 34.5L438 34.5L437 34.5L436 34.5L435 34.5L434 34.5L433 34.5L432 34.5L431 34.5L430 34.5L429 34.5L428 34.5L427 34.5L426 34.5L425 34.5L424 34.5L423 34.5L422 34.5L421 34.5L420 34.5L419 34.5L418 34.5L417 34.5L416 34.5L415 34.5L414 34.5L413 34.5L412 34.5L411 34.5L410 34.5L409 34.5L408 34.5L407 34.5L406 34.5L405 34.5L404 34.5L403 34.5L402 34.5L401 34.5L400 34.5L399 34.5L398 36.8L397 38.1L396 38.4L395 39.9L394 42.3L393 43.5L392 43.9L391 42.3L390 41.7L389 40.0L388 41.6L387 44.1L386 45.4L385 48.0L384 43.0L383 40.4L382 41.5L381 41.3L380 43.0L379 44.0L378 45.9L377 45.6L376 47.8L375 49.1L374 49.5L373 49.5L372 37.5L371 39.1L370 41.2L369 45.2L368 46.0L367 48.1L366 38.2L365 38.4L364 37.9L363 39.7L362 40.0L361 40.6L360 41.3L359 42.4L358 43.2L357 44.2L356 45.5L355 48.5L354 48.8L353 48.8L352 38.2L351 37.7L350 38.3L349 39.6L348 40.3L347 42.5L346 44.2L345 44.6L344 45.5L343 46.3L342 48.1L341 49.5L340 38.1L339 38.3L338 39.4L337 41.2L336 42.2L335 44.9L334 45.0L333 46.6L332 48.4L331 49.5L330 49.5L329 47.9L328 44.8L327 43.1L326 41.5L325 40.1L324 41.7L323 46.1L322 49.5L321 46.4L320 40.7L319 42.1L318 45.1L317 44.8L316 42.1L315 39.5L314 39.6L313 41.8L312 43.6L311 44.5L310 45.7L309 43.4L308 40.9L307 39.2L306 38.2L305 40.3L304 41.2L303 43.4L302 45.9L301 47.7L300 49.5L299 49.5L298 37.9L297 39.7L296 42.8L295 45.1L294 47.4L293 49.5L292 37.4L291 37.9L290 39.3L289 40.8L288 41.5L287 41.9L286 43.4L285 44.2L284 46.4L283 48.9L282 48.5L281 39.1L280 41.0L279 42.0L278 44.0L277 46.6L276 49.5L275 37.5L274 37.6L273 38.8L272 37.2L271 37.8L270 38.8L269 39.4L268 39.9L267 39.9L266 41.0L265 41.8L264 37.6L263 39.8L262 41.0L261 44.5L260 46.7L259 48.6L258 49.4L257 40.3L256 42.1L255 44.4L254 44.6L253 46.0L252 48.5L251 49.5L250 40.2L249 41.4L248 44.7L247 46.0L246 48.2L245 39.0L244 40.6L243 42.4L242 43.3L241 44.2L240 39.0L239 39.3L238 37.0L237 39.3L236 39.9L235 41.1L234 42.7L233 43.2L232 46.2L231 38.6L230 37.8L229 38.1L228 39.7L227 39.7L226 40.8L225 41.6L224 42.3L223 43.4L222 44.7L221 42.7L220 43.3L219 45.4L218 47.7L217 49.5L216 48.6L215 38.9L214 40.4L213 41.0L212 42.6L211 42.3L210 43.9L209 34.5L208 34.5L207 34.5L206 39.1L205 37.9L204 37.8L203 39.2L202 39.6L201 38.5L200 39.3L199 41.4L198 41.8L197 43.9L196 43.9L195 46.0L194 45.6L193 38.4L192 40.5L191 41.9L190 42.1L189 43.8L188 46.1L187 48.8L186 47.6L185 38.3L184 38.1L183 39.9L182 41.4L181 41.9L180 43.4L179 44.4L178 47.0L177 48.0L176 49.5L175 48.7L174 45.2L173 45.4L172 42.7L171 40.7L170 38.1L169 38.6L168 39.0L167 41.0L166 41.5L165 42.3L164 37.5L163 38.9L162 39.1L161 42.3L160 44.4L159 48.2L158 47.8L157 39.4L156 40.0L155 40.8L154 41.8L153 42.8L152 44.1L151 44.6L150 44.5L149 45.6L148 46.2L147 48.5L146 40.3L145 42.6L144 46.3L143 48.6L142 49.5L141 38.0L140 38.2L139 39.9L138 40.9L137 43.2L136 46.2L135 44.6L134 42.7L133 39.7L132 38.1L131 37.3L130 38.4L129 38.3L128 39.3L127 41.7L126 42.5L125 43.5L124 43.9L123 45.5L122 48.4L121 42.0L120 42.9L119 46.3L118 47.6L117 37.5L116 38.1L115 37.8L114 37.3L113 38.8L112 38.2L111 39.5L110 39.5L109 39.7L108 41.2L107 40.9L106 42.5L105 39.2L104 37.3L103 37.7L102 38.6L101 38.1L100 39.3L99 39.8L98 40.4L97 41.4L96 42.1L95 42.6L94 44.9L93 46.2L92 46.0L91 47.9L90 47.9L89 39.0L88 40.2L87 41.6L86 42.8L85 43.6L84 45.6L83 45.6L82 45.0L81 43.2L80 42.4L79 39.9L78 38.1L77 38.0L76 38.0L75 39.1L74 40.4L73 41.1L72 41.1L71 42.2L70 42.6L69 42.3L68 43.1L67 44.9L66 44.8L65 46.2L64 49.5L63 45.8L62 40.4L61 37.9L60 38.5L59 37.0L58 39.2L57 39.3L56 40.2L55 41.6L54 42.6L53 43.4L52 44.8L51 44.9L50 42.9L49 42.9L48 41.2L47 39.3L46 38.6L45 38.9L44 44.1L43 47.0L42 48.0L41 44.3L40 38.7L39 38.2L38 39.5L37 39.1L36 39.1L35 40.1L34 40.5L33 40.0L32 41.2L31 37.3L30 38.5L29 39.0L28 41.4L27 42.3L26 42.9L25 45.5L24 45.0L23 47.4L22 45.2L21 43.2L20 40.6L19 40.1L18 39.9L17 43.9L16 46.0L15 46.6L14 44.9L13 41.1L12 37.5L11 38.1L10 37.8L9 38.5L8 40.2L7 38.2L6 40.3L5 41.2L4 43.7L3 46.6L2 42.7L1 40.2L0 37.4Z" fill="#a4bdd4"/></svg>
<div style="position:absolute;left:1034px;top:203.5px;width:238px;height:50.5px;background:#2f5a82;border:1.5px solid #070b10;border-radius:4px;overflow:hidden;"></div>
<svg style="position:absolute;left:1035px;top:203.5px;" width="236" height="50.5" viewBox="0 0 236 50.5"><path d="M0 34.0 H238" stroke="#a4bdd4" stroke-width="1"/><path transform="translate(-1 0)" d="M0 33.5L1 33.5L2 33.5L3 33.5L4 33.5L5 33.5L6 26.0L7 27.1L8 27.8L9 28.9L10 29.4L11 18.5L12 20.4L13 22.4L14 26.3L15 19.8L16 21.5L17 22.5L18 23.9L19 24.7L20 26.0L21 27.3L22 26.5L23 27.0L24 27.2L25 27.6L26 28.8L27 28.6L28 29.2L29 29.6L30 29.8L31 30.7L32 28.9L33 29.9L34 30.6L35 30.6L36 29.3L37 23.3L38 25.1L39 26.7L40 28.3L41 29.3L42 20.2L43 22.6L44 23.4L45 23.8L46 25.2L47 26.4L48 27.2L49 28.2L50 18.5L51 20.7L52 21.9L53 24.5L54 20.4L55 22.5L56 23.8L57 24.7L58 26.9L59 28.3L60 29.7L61 18.5L62 19.5L63 21.3L64 22.0L65 24.7L66 25.0L67 26.9L68 27.8L69 26.8L70 27.0L71 27.8L72 28.4L73 29.0L74 29.2L75 28.7L76 30.1L77 28.8L78 30.8L79 28.6L80 18.5L81 19.6L82 20.0L83 21.4L84 23.6L85 24.8L86 24.9L87 20.6L88 21.3L89 22.2L90 24.0L91 25.0L92 25.5L93 25.6L94 27.0L95 28.2L96 28.9L97 29.3L98 23.9L99 24.2L100 25.1L101 26.0L102 27.0L103 27.7L104 29.0L105 24.0L106 25.5L107 27.0L108 28.5L109 19.9L110 21.3L111 21.8L112 23.2L113 23.1L114 25.0L115 25.3L116 26.0L117 26.8L118 28.3L119 28.6L120 29.7L121 30.6L122 29.0L123 18.5L124 19.3L125 18.5L126 20.8L127 22.1L128 22.8L129 24.2L130 24.6L131 26.4L132 22.9L133 19.9L134 18.5L135 20.7L136 22.2L137 25.7L138 28.5L139 29.7L140 18.5L141 18.9L142 19.9L143 21.4L144 21.5L145 22.3L146 23.6L147 25.8L148 26.4L149 27.2L150 29.0L151 29.7L152 29.6L153 29.0L154 23.7L155 25.9L156 26.0L157 27.8L158 28.9L159 29.8L160 30.8L161 25.3L162 26.8L163 28.2L164 30.3L165 29.4L166 29.7L167 19.6L168 20.6L169 21.8L170 22.0L171 24.4L172 25.7L173 19.3L174 21.3L175 23.3L176 25.5L177 27.7L178 29.5L179 21.6L180 22.7L181 23.0L182 25.0L183 25.5L184 27.1L185 27.7L186 19.9L187 22.3L188 25.9L189 27.4L190 29.5L191 29.5L192 29.7L193 33.5L194 33.5L195 33.5L196 33.5L197 33.5L198 33.5L199 33.5L200 33.5L201 33.5L202 33.5L203 33.5L204 33.5L205 33.5L206 33.5L207 33.5L208 33.5L209 33.5L210 33.5L211 33.5L212 33.5L213 33.5L214 33.5L215 33.5L216 33.5L217 33.5L218 33.5L219 33.5L220 33.5L221 33.5L222 33.5L223 33.5L224 33.5L225 33.5L226 33.5L227 33.5L228 33.5L229 33.5L230 33.5L231 33.5L232 33.5L233 33.5L234 33.5L235 33.5L236 33.5L237 33.5L238 33.5L238 34.5L237 34.5L236 34.5L235 34.5L234 34.5L233 34.5L232 34.5L231 34.5L230 34.5L229 34.5L228 34.5L227 34.5L226 34.5L225 34.5L224 34.5L223 34.5L222 34.5L221 34.5L220 34.5L219 34.5L218 34.5L217 34.5L216 34.5L215 34.5L214 34.5L213 34.5L212 34.5L211 34.5L210 34.5L209 34.5L208 34.5L207 34.5L206 34.5L205 34.5L204 34.5L203 34.5L202 34.5L201 34.5L200 34.5L199 34.5L198 34.5L197 34.5L196 34.5L195 34.5L194 34.5L193 34.5L192 38.4L191 38.4L190 38.4L189 40.3L188 41.6L187 45.7L186 47.7L185 39.4L184 40.1L183 42.4L182 41.9L181 44.8L180 44.5L179 47.1L178 38.1L177 40.1L176 42.5L175 44.2L174 47.5L173 47.1L172 43.0L171 43.7L170 45.9L169 46.6L168 47.9L167 48.1L166 37.7L165 37.9L164 37.7L163 39.3L162 41.5L161 41.9L160 37.6L159 38.2L158 39.1L157 40.5L156 41.3L155 42.9L154 42.7L153 38.2L152 38.2L151 37.8L150 38.9L149 40.7L148 41.2L147 42.4L146 42.7L145 45.2L144 47.0L143 48.2L142 49.5L141 49.5L140 48.5L139 38.8L138 38.7L137 42.6L136 44.2L135 48.5L134 49.5L133 46.5L132 44.4L131 41.1L130 42.0L129 44.8L128 43.8L127 46.3L126 47.4L125 47.4L124 47.5L123 49.5L122 38.4L121 37.7L120 38.3L119 39.4L118 39.7L117 40.1L116 41.8L115 41.5L114 44.3L113 45.1L112 44.3L111 46.0L110 45.5L109 47.6L108 39.2L107 41.0L106 42.0L105 43.5L104 39.4L103 40.5L102 41.3L101 41.5L100 41.9L99 43.2L98 42.9L97 38.8L96 39.7L95 40.7L94 40.2L93 41.5L92 42.4L91 42.7L90 45.0L89 45.2L88 46.1L87 48.0L86 42.7L85 44.7L84 44.5L83 45.3L82 48.9L81 49.5L80 49.4L79 39.3L78 37.1L77 38.8L76 37.9L75 38.6L74 38.4L73 39.2L72 39.5L71 40.0L70 41.4L69 40.8L68 40.4L67 41.8L66 42.6L65 44.0L64 45.6L63 46.2L62 48.8L61 49.5L60 37.9L59 40.1L58 41.2L57 42.6L56 45.4L55 45.0L54 48.0L53 42.6L52 45.9L51 48.2L50 48.2L49 39.4L48 40.1L47 40.7L46 42.4L45 42.5L44 44.7L43 44.8L42 45.9L41 39.1L40 40.5L39 41.8L38 43.2L37 42.8L36 38.4L35 37.2L34 37.3L33 37.8L32 38.5L31 37.2L30 37.6L29 38.3L28 39.1L27 39.0L26 39.7L25 39.2L24 39.8L23 40.8L22 40.4L21 39.6L20 41.5L19 41.6L18 43.1L17 44.8L16 46.6L15 48.2L14 41.5L13 45.3L12 48.7L11 49.5L10 37.9L9 38.8L8 39.4L7 41.6L6 41.1L5 34.5L4 34.5L3 34.5L2 34.5L1 34.5L0 34.5Z" fill="#a4bdd4"/></svg>
<div style="position:absolute;left:1040px;top:205.5px;white-space:nowrap;font-size:11.8px;color:#e8f0f8;transform:scaleX(0.97);transform-origin:0 0;">VOX_bip.3</div>
<div style="position:absolute;left:1040px;top:205.5px;white-space:nowrap;font-size:11.8px;color:transparent;transform:scaleX(0.97);transform-origin:0 0;">VOX_bip.3<span style="display:inline-block;width:9px;height:9px;border:1.2px solid #e8f0f8;border-radius:50%;margin-left:9px;vertical-align:-1px;box-sizing:border-box;"></span></div>
<div style="position:absolute;left:1273px;top:203.5px;width:67px;height:50.5px;background:#2f5a82;border:1.5px solid #070b10;border-radius:4px;overflow:hidden;"></div>
<div style="position:absolute;left:1279px;top:205.5px;white-space:nowrap;font-size:11.8px;color:#e8f0f8;transform:scaleX(0.97);transform-origin:0 0;">VOX_bip.4</div>
<div style="position:absolute;left:1279px;top:205.5px;white-space:nowrap;font-size:11.8px;color:transparent;transform:scaleX(0.97);transform-origin:0 0;">VOX_bip.4<span style="display:inline-block;width:9px;height:9px;border:1.2px solid #e8f0f8;border-radius:50%;margin-left:9px;vertical-align:-1px;box-sizing:border-box;"></span></div>
<div style="position:absolute;left:615px;top:309.5px;width:657px;height:50.5px;background:#2f5a82;border:1.5px solid #070b10;border-radius:4px;overflow:hidden;"></div>
<div style="position:absolute;left:615px;top:309.5px;width:657px;height:50.5px;background:#2f5a82;border:1.5px solid #c8e3f9;border-radius:4px;box-shadow:0 0 0 1px #0a0e12;"></div>
<div style="position:absolute;left:616px;top:310.5px;width:655px;height:17px;background:#c6e2f9;border-radius:3px 3px 0 0;"></div>
<svg style="position:absolute;left:616px;top:309.5px;" width="655" height="50.5" viewBox="0 0 655 50.5"><path d="M0 33.9 H657" stroke="#d8eeff" stroke-width="1"/><path transform="translate(-1 0)" d="M0 33.4L1 33.4L2 33.4L3 33.4L4 33.4L5 33.4L6 33.4L7 33.4L8 33.4L9 33.4L10 33.4L11 33.4L12 33.4L13 33.4L14 33.4L15 33.4L16 33.4L17 33.4L18 33.4L19 33.4L20 33.4L21 33.4L22 33.4L23 33.4L24 33.4L25 33.4L26 33.4L27 33.4L28 33.4L29 33.4L30 33.4L31 33.4L32 33.4L33 33.4L34 33.4L35 33.4L36 33.4L37 33.4L38 33.4L39 33.4L40 33.4L41 33.4L42 33.4L43 33.4L44 33.4L45 33.4L46 33.4L47 33.4L48 33.4L49 33.4L50 33.4L51 33.4L52 33.4L53 33.4L54 33.4L55 33.4L56 33.4L57 33.4L58 33.4L59 33.4L60 33.4L61 33.4L62 33.4L63 33.4L64 33.4L65 33.4L66 33.4L67 33.4L68 33.4L69 33.4L70 33.4L71 33.4L72 33.4L73 33.4L74 33.4L75 33.4L76 33.4L77 33.4L78 33.4L79 33.4L80 33.4L81 33.4L82 33.4L83 33.4L84 33.4L85 33.4L86 33.4L87 33.4L88 33.4L89 33.4L90 33.4L91 33.4L92 33.4L93 33.4L94 33.4L95 33.4L96 33.4L97 33.4L98 33.4L99 33.4L100 33.4L101 33.4L102 33.4L103 33.4L104 33.4L105 33.4L106 33.4L107 33.4L108 33.4L109 33.4L110 33.4L111 33.4L112 33.4L113 33.4L114 33.4L115 33.4L116 33.4L117 33.4L118 33.4L119 33.4L120 33.4L121 33.4L122 33.4L123 33.4L124 33.4L125 33.4L126 33.4L127 33.4L128 33.4L129 33.4L130 33.4L131 33.4L132 33.4L133 33.4L134 33.4L135 33.4L136 33.4L137 33.4L138 33.4L139 33.4L140 33.4L141 33.4L142 33.4L143 33.4L144 33.4L145 33.4L146 33.4L147 33.4L148 33.4L149 33.4L150 33.4L151 33.4L152 33.4L153 33.4L154 33.4L155 33.4L156 33.4L157 33.4L158 33.4L159 33.4L160 33.4L161 33.4L162 33.4L163 33.4L164 33.4L165 33.4L166 33.4L167 33.4L168 33.4L169 33.4L170 33.4L171 33.4L172 33.4L173 33.4L174 33.4L175 33.4L176 33.4L177 33.4L178 33.4L179 33.4L180 33.4L181 33.4L182 33.4L183 33.4L184 33.4L185 28.4L186 19.4L187 21.1L188 22.5L189 22.1L190 23.9L191 25.6L192 27.8L193 29.1L194 30.4L195 31.5L196 33.4L197 28.0L198 19.4L199 20.9L200 23.4L201 25.7L202 27.4L203 23.1L204 24.7L205 24.2L206 25.8L207 26.0L208 27.0L209 28.2L210 25.8L211 26.1L212 27.8L213 28.4L214 30.1L215 30.9L216 31.8L217 28.3L218 29.5L219 30.1L220 31.2L221 31.9L222 32.8L223 27.7L224 29.4L225 30.1L226 31.7L227 33.0L228 33.4L229 33.4L230 26.6L231 28.0L232 29.3L233 30.5L234 32.0L235 33.1L236 26.6L237 27.3L238 28.7L239 30.3L240 31.3L241 25.2L242 26.3L243 25.4L244 22.2L245 24.8L246 26.4L247 19.6L248 20.6L249 21.9L250 23.9L251 25.7L252 27.3L253 29.2L254 31.4L255 33.4L256 33.4L257 28.4L258 19.4L259 20.0L260 21.2L261 24.8L262 25.7L263 27.5L264 29.7L265 31.5L266 33.4L267 22.1L268 24.2L269 26.8L270 28.4L271 30.9L272 21.2L273 24.1L274 25.7L275 26.4L276 27.4L277 29.5L278 30.6L279 24.1L280 26.6L281 27.3L282 29.4L283 31.1L284 32.8L285 25.0L286 26.7L287 28.3L288 29.4L289 30.5L290 32.2L291 23.9L292 24.7L293 27.6L294 28.5L295 29.8L296 31.5L297 26.3L298 26.8L299 28.5L300 29.8L301 30.3L302 31.6L303 28.0L304 19.4L305 20.8L306 23.9L307 25.0L308 28.2L309 30.1L310 29.0L311 19.4L312 19.9L313 21.7L314 24.2L315 26.2L316 28.8L317 30.8L318 32.6L319 33.4L320 33.4L321 33.4L322 28.4L323 25.3L324 22.8L325 19.4L326 20.2L327 24.1L328 26.6L329 29.1L330 32.4L331 33.4L332 33.4L333 28.9L334 19.4L335 20.4L336 23.2L337 25.2L338 26.9L339 29.3L340 31.0L341 33.4L342 33.4L343 33.4L344 33.4L345 33.4L346 22.6L347 27.2L348 24.3L349 19.4L350 20.0L351 23.8L352 26.6L353 28.9L354 30.6L355 29.0L356 19.4L357 20.1L358 22.3L359 24.8L360 25.8L361 27.8L362 29.1L363 30.9L364 32.7L365 33.4L366 33.4L367 33.4L368 33.4L369 33.4L370 33.4L371 33.4L372 33.4L373 33.4L374 33.4L375 33.4L376 33.4L377 33.4L378 33.4L379 33.4L380 33.4L381 33.4L382 33.4L383 33.4L384 33.4L385 33.4L386 33.4L387 33.4L388 33.4L389 33.4L390 33.4L391 33.4L392 33.4L393 33.4L394 33.4L395 33.4L396 33.4L397 33.4L398 33.4L399 33.4L400 33.4L401 33.4L402 33.4L403 33.4L404 33.4L405 33.4L406 33.4L407 33.4L408 33.4L409 33.4L410 33.4L411 33.4L412 33.4L413 33.4L414 33.4L415 33.4L416 33.4L417 33.4L418 33.4L419 33.4L420 33.4L421 33.4L422 33.4L423 33.4L424 33.4L425 28.4L426 19.4L427 21.1L428 22.3L429 22.3L430 24.2L431 26.2L432 27.6L433 29.3L434 31.1L435 32.4L436 33.4L437 28.1L438 19.4L439 21.9L440 24.1L441 26.9L442 28.9L443 22.7L444 24.1L445 25.7L446 26.4L447 26.7L448 28.4L449 29.3L450 25.6L451 26.8L452 27.8L453 28.7L454 30.3L455 31.2L456 32.4L457 28.0L458 29.7L459 30.2L460 31.0L461 31.9L462 32.8L463 27.2L464 28.4L465 30.2L466 31.3L467 32.5L468 33.4L469 33.4L470 27.2L471 28.6L472 29.5L473 30.4L474 31.7L475 32.7L476 25.5L477 27.1L478 29.5L479 30.4L480 31.9L481 24.2L482 26.3L483 25.0L484 22.5L485 24.7L486 25.7L487 19.6L488 20.7L489 21.8L490 23.7L491 24.4L492 26.8L493 28.1L494 29.6L495 30.9L496 32.5L497 28.2L498 19.4L499 19.8L500 21.4L501 24.2L502 25.7L503 27.8L504 29.3L505 31.0L506 32.5L507 24.1L508 25.4L509 26.0L510 28.1L511 30.0L512 22.7L513 23.5L514 24.7L515 26.4L516 27.6L517 28.8L518 30.8L519 23.9L520 26.2L521 27.2L522 28.9L523 30.3L524 31.7L525 26.1L526 27.4L527 28.0L528 29.4L529 30.7L530 31.9L531 23.3L532 25.8L533 26.7L534 28.7L535 30.8L536 32.4L537 26.9L538 27.7L539 27.8L540 28.9L541 30.1L542 31.2L543 28.6L544 19.4L545 21.6L546 23.6L547 25.9L548 28.0L549 30.4L550 28.1L551 19.4L552 20.6L553 23.3L554 25.0L555 27.9L556 30.2L557 32.2L558 33.4L559 33.4L560 33.4L561 33.4L562 28.3L563 23.8L564 21.3L565 19.4L566 20.1L567 23.6L568 26.4L569 29.8L570 32.2L571 33.4L572 33.4L573 28.0L574 19.4L575 20.5L576 21.6L577 22.9L578 25.7L579 27.0L580 28.8L581 30.5L582 32.6L583 33.4L584 33.4L585 33.4L586 22.8L587 27.5L588 22.9L589 19.8L590 20.1L591 23.1L592 26.2L593 28.3L594 31.4L595 28.3L596 20.6L597 20.8L598 23.4L599 24.2L600 25.8L601 28.3L602 29.3L603 31.4L604 33.0L605 33.4L606 33.4L607 33.4L608 33.4L609 33.4L610 33.4L611 33.4L612 33.4L613 33.4L614 33.4L615 33.4L616 33.4L617 33.4L618 33.4L619 33.4L620 33.4L621 33.4L622 33.4L623 33.4L624 33.4L625 33.4L626 33.4L627 33.4L628 33.4L629 33.4L630 33.4L631 33.4L632 33.4L633 33.4L634 33.4L635 33.4L636 33.4L637 33.4L638 33.4L639 33.4L640 33.4L641 33.4L642 33.4L643 33.4L644 33.4L645 33.4L646 33.4L647 33.4L648 33.4L649 33.4L650 33.4L651 33.4L652 33.4L653 33.4L654 33.4L655 33.4L656 33.4L657 33.4L657 34.4L656 34.4L655 34.4L654 34.4L653 34.4L652 34.4L651 34.4L650 34.4L649 34.4L648 34.4L647 34.4L646 34.4L645 34.4L644 34.4L643 34.4L642 34.4L641 34.4L640 34.4L639 34.4L638 34.4L637 34.4L636 34.4L635 34.4L634 34.4L633 34.4L632 34.4L631 34.4L630 34.4L629 34.4L628 34.4L627 34.4L626 34.4L625 34.4L624 34.4L623 34.4L622 34.4L621 34.4L620 34.4L619 34.4L618 34.4L617 34.4L616 34.4L615 34.4L614 34.4L613 34.4L612 34.4L611 34.4L610 34.4L609 34.4L608 34.4L607 34.4L606 34.4L605 34.4L604 34.9L603 36.7L602 38.6L601 40.0L600 42.1L599 43.7L598 44.5L597 47.1L596 47.5L595 38.7L594 36.6L593 38.9L592 41.7L591 44.1L590 47.8L589 48.4L588 43.8L587 40.9L586 45.6L585 34.4L584 34.4L583 34.4L582 35.2L581 36.9L580 38.7L579 40.6L578 41.7L577 44.3L576 46.8L575 46.7L574 47.8L573 39.4L572 34.4L571 34.4L570 35.4L569 38.3L568 41.2L567 44.5L566 47.6L565 48.4L564 45.0L563 42.8L562 39.1L561 34.4L560 34.4L559 34.4L558 34.4L557 35.7L556 37.8L555 39.7L554 42.5L553 45.0L552 47.9L551 48.4L550 39.8L549 37.8L548 40.1L547 42.0L546 43.6L545 46.7L544 48.4L543 38.8L542 36.7L541 37.8L540 38.4L539 39.3L538 40.9L537 41.1L536 35.3L535 36.8L534 38.9L533 40.9L532 41.8L531 43.4L530 35.8L529 37.0L528 38.2L527 40.3L526 41.2L525 43.2L524 35.9L523 37.1L522 39.3L521 40.8L520 41.6L519 43.1L518 37.1L517 38.9L516 39.9L515 40.9L514 42.0L513 44.8L512 44.4L511 37.8L510 39.3L509 42.0L508 42.8L507 43.8L506 35.2L505 36.7L504 38.9L503 40.1L502 41.7L501 44.7L500 46.3L499 48.4L498 48.4L497 39.4L496 35.2L495 36.8L494 38.2L493 39.4L492 41.2L491 42.2L490 43.7L489 46.4L488 46.6L487 48.1L486 41.3L485 44.5L484 45.8L483 41.8L482 41.7L481 43.9L480 36.0L479 37.4L478 38.8L477 39.9L476 41.8L475 35.2L474 36.2L473 37.5L472 38.6L471 40.3L470 40.2L469 34.4L468 34.4L467 35.4L466 36.3L465 37.4L464 38.5L463 40.1L462 35.0L461 35.9L460 37.1L459 37.3L458 38.7L457 38.8L456 35.3L455 36.8L454 37.5L453 39.1L452 39.8L451 41.0L450 43.2L449 38.4L448 39.2L447 40.3L446 42.0L445 43.0L444 44.6L443 45.1L442 39.5L441 42.3L440 44.2L439 46.2L438 48.4L437 38.9L436 34.4L435 35.4L434 36.7L433 38.1L432 40.0L431 42.2L430 42.2L429 44.7L428 45.1L427 46.5L426 48.4L425 39.4L424 34.4L423 34.4L422 34.4L421 34.4L420 34.4L419 34.4L418 34.4L417 34.4L416 34.4L415 34.4L414 34.4L413 34.4L412 34.4L411 34.4L410 34.4L409 34.4L408 34.4L407 34.4L406 34.4L405 34.4L404 34.4L403 34.4L402 34.4L401 34.4L400 34.4L399 34.4L398 34.4L397 34.4L396 34.4L395 34.4L394 34.4L393 34.4L392 34.4L391 34.4L390 34.4L389 34.4L388 34.4L387 34.4L386 34.4L385 34.4L384 34.4L383 34.4L382 34.4L381 34.4L380 34.4L379 34.4L378 34.4L377 34.4L376 34.4L375 34.4L374 34.4L373 34.4L372 34.4L371 34.4L370 34.4L369 34.4L368 34.4L367 34.4L366 34.4L365 34.4L364 35.0L363 36.7L362 38.5L361 39.7L360 41.6L359 43.2L358 44.9L357 46.0L356 48.4L355 38.7L354 37.0L353 39.0L352 42.3L351 45.0L350 46.8L349 48.4L348 43.6L347 41.4L346 45.1L345 34.4L344 34.4L343 34.4L342 34.4L341 34.4L340 36.5L339 38.7L338 40.4L337 43.5L336 45.2L335 47.6L334 48.4L333 39.5L332 34.4L331 34.4L330 35.6L329 38.2L328 41.1L327 43.5L326 45.7L325 48.4L324 45.0L323 43.0L322 38.8L321 34.4L320 34.4L319 34.4L318 35.1L317 37.3L316 39.7L315 40.8L314 44.1L313 44.7L312 46.1L311 48.4L310 39.6L309 37.6L308 40.3L307 41.5L306 44.8L305 46.6L304 48.4L303 38.9L302 36.4L301 37.3L300 38.7L299 39.9L298 40.2L297 41.5L296 36.5L295 37.9L294 39.4L293 41.3L292 42.5L291 44.8L290 35.7L289 37.2L288 38.3L287 39.8L286 40.9L285 42.1L284 34.9L283 36.7L282 38.2L281 39.7L280 41.0L279 42.7L278 37.7L277 38.8L276 40.5L275 41.1L274 43.0L273 44.1L272 45.5L271 36.8L270 38.9L269 40.5L268 43.5L267 44.5L266 34.4L265 36.3L264 38.2L263 40.6L262 41.4L261 43.9L260 44.5L259 47.1L258 48.4L257 39.4L256 34.4L255 34.4L254 36.3L253 38.4L252 40.0L251 42.7L250 43.5L249 44.7L248 46.3L247 48.4L246 41.6L245 43.8L244 47.3L243 42.4L242 41.4L241 42.3L240 36.4L239 37.5L238 38.8L237 39.8L236 41.9L235 34.8L234 35.8L233 37.3L232 38.7L231 39.5L230 41.0L229 34.4L228 34.4L227 34.7L226 36.2L225 37.4L224 39.1L223 40.1L222 35.0L221 35.9L220 36.9L219 37.8L218 38.6L217 39.6L216 36.1L215 37.2L214 38.2L213 39.3L212 40.8L211 41.6L210 42.4L209 40.0L208 40.9L207 41.7L206 42.7L205 43.7L204 43.4L203 44.4L202 40.0L201 43.1L200 43.9L199 46.5L198 48.4L197 39.3L196 34.4L195 36.2L194 37.5L193 39.4L192 40.4L191 42.5L190 44.3L189 44.1L188 46.4L187 48.4L186 48.4L185 39.7L184 34.4L183 34.4L182 34.4L181 34.4L180 34.4L179 34.4L178 34.4L177 34.4L176 34.4L175 34.4L174 34.4L173 34.4L172 34.4L171 34.4L170 34.4L169 34.4L168 34.4L167 34.4L166 34.4L165 34.4L164 34.4L163 34.4L162 34.4L161 34.4L160 34.4L159 34.4L158 34.4L157 34.4L156 34.4L155 34.4L154 34.4L153 34.4L152 34.4L151 34.4L150 34.4L149 34.4L148 34.4L147 34.4L146 34.4L145 34.4L144 34.4L143 34.4L142 34.4L141 34.4L140 34.4L139 34.4L138 34.4L137 34.4L136 34.4L135 34.4L134 34.4L133 34.4L132 34.4L131 34.4L130 34.4L129 34.4L128 34.4L127 34.4L126 34.4L125 34.4L124 34.4L123 34.4L122 34.4L121 34.4L120 34.4L119 34.4L118 34.4L117 34.4L116 34.4L115 34.4L114 34.4L113 34.4L112 34.4L111 34.4L110 34.4L109 34.4L108 34.4L107 34.4L106 34.4L105 34.4L104 34.4L103 34.4L102 34.4L101 34.4L100 34.4L99 34.4L98 34.4L97 34.4L96 34.4L95 34.4L94 34.4L93 34.4L92 34.4L91 34.4L90 34.4L89 34.4L88 34.4L87 34.4L86 34.4L85 34.4L84 34.4L83 34.4L82 34.4L81 34.4L80 34.4L79 34.4L78 34.4L77 34.4L76 34.4L75 34.4L74 34.4L73 34.4L72 34.4L71 34.4L70 34.4L69 34.4L68 34.4L67 34.4L66 34.4L65 34.4L64 34.4L63 34.4L62 34.4L61 34.4L60 34.4L59 34.4L58 34.4L57 34.4L56 34.4L55 34.4L54 34.4L53 34.4L52 34.4L51 34.4L50 34.4L49 34.4L48 34.4L47 34.4L46 34.4L45 34.4L44 34.4L43 34.4L42 34.4L41 34.4L40 34.4L39 34.4L38 34.4L37 34.4L36 34.4L35 34.4L34 34.4L33 34.4L32 34.4L31 34.4L30 34.4L29 34.4L28 34.4L27 34.4L26 34.4L25 34.4L24 34.4L23 34.4L22 34.4L21 34.4L20 34.4L19 34.4L18 34.4L17 34.4L16 34.4L15 34.4L14 34.4L13 34.4L12 34.4L11 34.4L10 34.4L9 34.4L8 34.4L7 34.4L6 34.4L5 34.4L4 34.4L3 34.4L2 34.4L1 34.4L0 34.4Z" fill="#d8eeff"/><path d="M633 15 V46.5" stroke="#16283a" stroke-width="1"/></svg>
<div style="position:absolute;left:618px;top:313.5px;width:16px;height:12px;background:#1f4d7d;border-radius:2px 0 0 2px;"></div>
<svg style="position:absolute;left:621px;top:314.5px;" width="10" height="10" viewBox="0 0 10 10"><path d="M1.5 1 L8.5 5 L1.5 9Z" fill="#fff"/></svg>
<div style="position:absolute;left:635px;top:313.5px;width:14px;height:12px;background:#1f4d7d;border-radius:0 2px 2px 0;"><div style="position:absolute;left:0;right:0;top:-1px;text-align:center;font-size:11.5px;color:#fff;">2</div></div>
<div style="position:absolute;left:653px;top:311.5px;white-space:nowrap;font-size:11.8px;color:#1b2f45;transform:scaleX(1.0);transform-origin:0 0;">Audio 7: Take 2</div>
<div style="position:absolute;left:653px;top:311.5px;white-space:nowrap;font-size:11.8px;color:transparent;transform:scaleX(1.0);transform-origin:0 0;">Audio 7: Take 2<span style="display:inline-block;width:9px;height:9px;border:1.2px solid #1b2f45;border-radius:50%;margin-left:9px;vertical-align:-1px;box-sizing:border-box;"></span></div>
<div style="position:absolute;left:675px;top:362px;width:589px;height:51px;background:#2f5a82;border:1.5px solid #070b10;border-radius:4px;overflow:hidden;"></div>
<svg style="position:absolute;left:676px;top:362px;" width="587" height="51" viewBox="0 0 587 51"><path d="M0 34.3 H589" stroke="#a4bdd4" stroke-width="1"/><path transform="translate(-1 0)" d="M0 33.8L1 33.8L2 33.8L3 33.8L4 33.8L5 33.8L6 33.8L7 33.8L8 33.8L9 33.8L10 33.8L11 33.8L12 33.8L13 33.8L14 33.8L15 33.8L16 33.8L17 33.8L18 33.8L19 33.8L20 33.8L21 33.8L22 33.8L23 33.8L24 33.8L25 33.8L26 33.8L27 33.8L28 33.8L29 33.8L30 33.8L31 33.8L32 33.8L33 33.8L34 33.8L35 33.8L36 33.8L37 33.8L38 33.8L39 33.8L40 33.8L41 33.8L42 33.8L43 33.8L44 33.8L45 33.8L46 33.8L47 33.8L48 33.8L49 33.8L50 33.8L51 33.8L52 33.8L53 33.8L54 33.8L55 33.8L56 33.8L57 33.8L58 33.8L59 33.8L60 33.8L61 33.8L62 33.8L63 33.8L64 33.8L65 33.8L66 33.8L67 33.8L68 33.8L69 33.8L70 33.8L71 33.8L72 33.8L73 33.8L74 33.8L75 33.8L76 33.8L77 33.8L78 33.8L79 33.8L80 33.8L81 33.8L82 33.8L83 33.8L84 33.8L85 33.8L86 33.8L87 33.8L88 33.8L89 33.8L90 33.8L91 33.8L92 33.8L93 33.8L94 33.8L95 33.8L96 33.8L97 33.8L98 33.8L99 33.8L100 33.8L101 33.8L102 33.8L103 33.8L104 33.8L105 33.8L106 33.8L107 33.8L108 33.8L109 33.8L110 33.8L111 33.8L112 33.8L113 33.8L114 33.8L115 33.8L116 33.8L117 33.8L118 33.8L119 33.8L120 33.8L121 33.8L122 33.8L123 33.8L124 33.8L125 30.5L126 26.5L127 26.3L128 27.5L129 26.7L130 28.2L131 28.4L132 30.1L133 31.4L134 31.7L135 33.1L136 33.8L137 30.7L138 26.6L139 27.5L140 28.0L141 28.2L142 31.6L143 24.5L144 24.4L145 26.6L146 28.9L147 29.3L148 28.5L149 29.2L150 29.8L151 29.2L152 29.5L153 31.3L154 32.0L155 31.3L156 32.2L157 29.9L158 31.7L159 31.0L160 31.9L161 33.0L162 33.7L163 28.3L164 29.5L165 30.8L166 31.7L167 32.9L168 33.8L169 33.8L170 31.1L171 30.5L172 32.3L173 32.4L174 32.6L175 33.8L176 27.8L177 30.4L178 30.3L179 31.6L180 32.5L181 28.8L182 29.9L183 30.4L184 28.6L185 29.0L186 30.8L187 23.2L188 27.9L189 28.3L190 27.2L191 30.1L192 30.4L193 31.3L194 32.0L195 32.9L196 33.8L197 30.7L198 24.7L199 28.1L200 28.0L201 30.1L202 30.6L203 31.4L204 32.3L205 32.3L206 33.6L207 26.5L208 25.8L209 29.4L210 30.6L211 30.1L212 26.0L213 27.8L214 28.9L215 30.3L216 30.3L217 31.4L218 32.6L219 25.4L220 26.2L221 28.9L222 31.6L223 32.7L224 33.6L225 30.4L226 28.7L227 30.1L228 32.3L229 33.1L230 33.5L231 28.7L232 30.8L233 31.4L234 31.8L235 32.4L236 33.3L237 29.5L238 30.0L239 29.1L240 29.8L241 31.6L242 32.3L243 29.5L244 21.8L245 24.9L246 24.7L247 26.7L248 29.0L249 32.1L250 31.6L251 26.6L252 27.9L253 27.9L254 28.3L255 30.9L256 31.3L257 33.1L258 33.8L259 33.8L260 33.8L261 33.8L262 31.1L263 28.5L264 25.3L265 24.9L266 26.1L267 29.7L268 30.5L269 30.4L270 32.2L271 33.4L272 33.8L273 30.8L274 20.3L275 23.9L276 23.3L277 27.8L278 27.5L279 29.0L280 32.0L281 33.0L282 33.8L283 33.8L284 33.8L285 33.8L286 27.0L287 28.5L288 25.9L289 27.1L290 28.3L291 28.1L292 30.3L293 31.7L294 33.6L295 31.7L296 27.9L297 27.2L298 29.7L299 27.8L300 29.9L301 29.6L302 31.3L303 32.9L304 33.3L305 33.8L306 33.8L307 33.8L308 33.8L309 33.8L310 33.8L311 33.8L312 33.8L313 33.8L314 33.8L315 33.8L316 33.8L317 33.8L318 33.8L319 33.8L320 33.8L321 33.8L322 33.8L323 33.8L324 33.8L325 33.8L326 33.8L327 33.8L328 33.8L329 33.8L330 33.8L331 33.8L332 33.8L333 33.8L334 33.8L335 33.8L336 33.8L337 33.8L338 33.8L339 33.8L340 33.8L341 33.8L342 33.8L343 33.8L344 33.8L345 33.8L346 33.8L347 33.8L348 33.8L349 33.8L350 33.8L351 33.8L352 33.8L353 33.8L354 33.8L355 33.8L356 33.8L357 33.8L358 33.8L359 33.8L360 33.8L361 33.8L362 33.8L363 33.8L364 33.8L365 28.7L366 22.2L367 22.7L368 23.9L369 25.6L370 25.6L371 26.9L372 28.7L373 29.4L374 31.4L375 33.1L376 33.8L377 30.9L378 25.1L379 23.6L380 25.2L381 28.2L382 31.8L383 27.5L384 28.8L385 29.2L386 28.7L387 29.1L388 30.4L389 30.6L390 28.6L391 26.8L392 28.8L393 30.6L394 29.8L395 31.6L396 31.7L397 30.2L398 31.9L399 32.4L400 32.8L401 33.6L402 33.8L403 30.6L404 31.9L405 32.6L406 33.2L407 33.8L408 33.8L409 33.8L410 28.1L411 29.3L412 30.8L413 30.9L414 32.9L415 33.1L416 30.3L417 29.9L418 30.3L419 31.5L420 33.1L421 27.6L422 29.5L423 29.0L424 27.1L425 26.9L426 27.2L427 21.5L428 22.1L429 26.2L430 24.9L431 28.4L432 28.5L433 29.9L434 32.1L435 32.9L436 33.8L437 31.3L438 27.1L439 24.2L440 27.2L441 26.8L442 29.7L443 30.6L444 31.5L445 32.6L446 33.5L447 27.4L448 29.5L449 30.7L450 31.7L451 33.1L452 27.9L453 28.6L454 28.8L455 30.3L456 31.3L457 31.8L458 32.4L459 29.0L460 29.1L461 29.5L462 30.4L463 32.4L464 33.1L465 27.9L466 30.2L467 30.6L468 30.6L469 32.7L470 32.9L471 28.5L472 29.5L473 29.3L474 32.1L475 31.8L476 33.4L477 29.4L478 29.3L479 31.1L480 31.0L481 32.3L482 32.6L483 30.1L484 26.3L485 23.4L486 29.0L487 28.8L488 30.4L489 33.3L490 31.4L491 25.4L492 25.2L493 28.5L494 29.8L495 31.6L496 32.0L497 33.5L498 33.8L499 33.8L500 33.8L501 33.8L502 29.8L503 27.0L504 25.1L505 20.3L506 21.7L507 27.9L508 29.5L509 31.3L510 33.4L511 33.8L512 33.8L513 30.6L514 20.3L515 24.5L516 25.4L517 26.8L518 29.2L519 29.2L520 30.8L521 32.4L522 33.8L523 33.8L524 33.8L525 33.8L526 28.4L527 29.3L528 28.2L529 20.6L530 27.6L531 27.5L532 29.2L533 29.1L534 31.4L535 30.1L536 22.1L537 21.5L538 23.5L539 26.3L540 29.7L541 30.8L542 31.1L543 31.5L544 33.3L545 33.8L546 33.8L547 33.8L548 33.8L549 33.8L550 33.8L551 33.8L552 33.8L553 33.8L554 33.8L555 33.8L556 33.8L557 33.8L558 33.8L559 33.8L560 33.8L561 33.8L562 33.8L563 33.8L564 33.8L565 33.8L566 33.8L567 33.8L568 33.8L569 33.8L570 33.8L571 33.8L572 33.8L573 33.8L574 33.8L575 33.8L576 33.8L577 33.8L578 33.8L579 33.8L580 33.8L581 33.8L582 33.8L583 33.8L584 33.8L585 33.8L586 33.8L587 33.8L588 33.8L589 33.8L589 34.8L588 34.8L587 34.8L586 34.8L585 34.8L584 34.8L583 34.8L582 34.8L581 34.8L580 34.8L579 34.8L578 34.8L577 34.8L576 34.8L575 34.8L574 34.8L573 34.8L572 34.8L571 34.8L570 34.8L569 34.8L568 34.8L567 34.8L566 34.8L565 34.8L564 34.8L563 34.8L562 34.8L561 34.8L560 34.8L559 34.8L558 34.8L557 34.8L556 34.8L555 34.8L554 34.8L553 34.8L552 34.8L551 34.8L550 34.8L549 34.8L548 34.8L547 34.8L546 34.8L545 34.8L544 35.4L543 37.0L542 37.3L541 38.8L540 42.2L539 40.5L538 41.7L537 44.7L536 46.2L535 37.3L534 36.3L533 37.9L532 41.8L531 40.2L530 42.8L529 47.2L528 40.8L527 38.0L526 42.3L525 34.8L524 34.8L523 34.8L522 34.8L521 35.6L520 37.6L519 39.6L518 42.4L517 41.2L516 43.0L515 46.7L514 47.9L513 38.5L512 34.8L511 34.8L510 35.1L509 36.6L508 39.2L507 43.0L506 45.3L505 48.3L504 46.0L503 41.2L502 39.0L501 34.8L500 34.8L499 34.8L498 34.8L497 35.2L496 36.2L495 37.2L494 39.7L493 40.9L492 39.9L491 45.0L490 37.9L489 35.3L488 36.6L487 38.4L486 42.0L485 41.1L484 48.0L483 38.5L482 36.4L481 37.4L480 37.4L479 38.9L478 38.3L477 40.4L476 35.2L475 36.2L474 36.8L473 37.3L472 38.3L471 41.6L470 35.6L469 35.9L468 36.6L467 37.2L466 40.3L465 40.0L464 36.0L463 36.9L462 38.0L461 38.5L460 39.3L459 40.6L458 35.7L457 36.2L456 38.3L455 37.9L454 40.2L453 40.0L452 40.2L451 36.3L450 37.7L449 37.6L448 39.4L447 38.8L446 35.0L445 36.3L444 37.4L443 39.2L442 40.0L441 40.0L440 40.4L439 41.8L438 44.3L437 37.7L436 34.8L435 35.5L434 37.7L433 38.7L432 40.4L431 40.8L430 41.0L429 42.0L428 43.7L427 45.9L426 41.1L425 42.1L424 42.7L423 39.5L422 38.8L421 39.3L420 35.7L419 36.2L418 36.8L417 39.3L416 40.1L415 35.7L414 35.8L413 36.6L412 38.3L411 38.1L410 40.1L409 34.8L408 34.8L407 34.8L406 35.6L405 36.1L404 36.3L403 37.2L402 34.8L401 35.1L400 35.4L399 36.6L398 37.2L397 37.0L396 36.4L395 36.9L394 37.4L393 38.0L392 40.4L391 40.1L390 41.5L389 37.9L388 38.6L387 37.9L386 39.3L385 40.0L384 42.7L383 40.4L382 38.4L381 40.0L380 40.5L379 44.9L378 42.9L377 37.9L376 34.8L375 35.5L374 36.6L373 38.3L372 38.0L371 41.4L370 40.0L369 45.7L368 46.7L367 44.6L366 45.1L365 39.6L364 34.8L363 34.8L362 34.8L361 34.8L360 34.8L359 34.8L358 34.8L357 34.8L356 34.8L355 34.8L354 34.8L353 34.8L352 34.8L351 34.8L350 34.8L349 34.8L348 34.8L347 34.8L346 34.8L345 34.8L344 34.8L343 34.8L342 34.8L341 34.8L340 34.8L339 34.8L338 34.8L337 34.8L336 34.8L335 34.8L334 34.8L333 34.8L332 34.8L331 34.8L330 34.8L329 34.8L328 34.8L327 34.8L326 34.8L325 34.8L324 34.8L323 34.8L322 34.8L321 34.8L320 34.8L319 34.8L318 34.8L317 34.8L316 34.8L315 34.8L314 34.8L313 34.8L312 34.8L311 34.8L310 34.8L309 34.8L308 34.8L307 34.8L306 34.8L305 34.8L304 35.4L303 35.7L302 37.0L301 38.9L300 37.5L299 38.5L298 40.7L297 41.1L296 43.2L295 37.7L294 35.4L293 37.3L292 39.5L291 39.1L290 44.9L289 46.6L288 40.2L287 39.2L286 42.3L285 34.8L284 34.8L283 34.8L282 34.8L281 35.8L280 37.5L279 38.8L278 41.9L277 40.8L276 46.3L275 43.4L274 44.5L273 40.1L272 34.8L271 35.2L270 36.0L269 37.1L268 39.4L267 39.2L266 43.2L265 45.1L264 42.7L263 39.7L262 37.9L261 34.8L260 34.8L259 34.8L258 34.8L257 35.8L256 37.2L255 37.1L254 38.0L253 41.2L252 39.7L251 40.3L250 37.8L249 36.4L248 38.2L247 41.7L246 40.5L245 45.7L244 47.6L243 38.3L242 36.1L241 36.4L240 38.5L239 38.9L238 39.4L237 41.7L236 35.1L235 36.3L234 37.1L233 38.9L232 38.5L231 38.9L230 34.9L229 35.5L228 36.1L227 36.9L226 38.6L225 41.0L224 35.4L223 36.3L222 38.1L221 40.0L220 41.3L219 43.0L218 35.7L217 36.4L216 38.1L215 37.7L214 38.7L213 40.9L212 42.0L211 36.7L210 37.9L209 41.0L208 43.4L207 43.0L206 35.2L205 35.7L204 37.1L203 37.7L202 39.6L201 40.9L200 39.3L199 42.6L198 45.4L197 37.1L196 34.8L195 35.7L194 36.7L193 38.4L192 38.3L191 38.9L190 40.6L189 41.6L188 41.4L187 42.8L186 38.6L185 39.0L184 41.7L183 38.6L182 40.5L181 41.7L180 35.7L179 36.9L178 37.0L177 37.6L176 40.1L175 34.8L174 35.9L173 35.8L172 36.5L171 37.9L170 39.3L169 34.8L168 34.8L167 35.1L166 36.3L165 36.9L164 37.2L163 38.4L162 35.3L161 35.9L160 36.3L159 36.9L158 38.5L157 38.9L156 35.9L155 37.3L154 37.6L153 38.8L152 39.3L151 40.7L150 40.7L149 37.9L148 38.7L147 41.0L146 40.7L145 41.9L144 44.3L143 43.1L142 38.4L141 38.1L140 43.0L139 44.2L138 46.6L137 37.1L136 34.8L135 35.3L134 37.1L133 37.4L132 37.8L131 38.7L130 41.4L129 40.1L128 40.8L127 40.8L126 43.2L125 37.7L124 34.8L123 34.8L122 34.8L121 34.8L120 34.8L119 34.8L118 34.8L117 34.8L116 34.8L115 34.8L114 34.8L113 34.8L112 34.8L111 34.8L110 34.8L109 34.8L108 34.8L107 34.8L106 34.8L105 34.8L104 34.8L103 34.8L102 34.8L101 34.8L100 34.8L99 34.8L98 34.8L97 34.8L96 34.8L95 34.8L94 34.8L93 34.8L92 34.8L91 34.8L90 34.8L89 34.8L88 34.8L87 34.8L86 34.8L85 34.8L84 34.8L83 34.8L82 34.8L81 34.8L80 34.8L79 34.8L78 34.8L77 34.8L76 34.8L75 34.8L74 34.8L73 34.8L72 34.8L71 34.8L70 34.8L69 34.8L68 34.8L67 34.8L66 34.8L65 34.8L64 34.8L63 34.8L62 34.8L61 34.8L60 34.8L59 34.8L58 34.8L57 34.8L56 34.8L55 34.8L54 34.8L53 34.8L52 34.8L51 34.8L50 34.8L49 34.8L48 34.8L47 34.8L46 34.8L45 34.8L44 34.8L43 34.8L42 34.8L41 34.8L40 34.8L39 34.8L38 34.8L37 34.8L36 34.8L35 34.8L34 34.8L33 34.8L32 34.8L31 34.8L30 34.8L29 34.8L28 34.8L27 34.8L26 34.8L25 34.8L24 34.8L23 34.8L22 34.8L21 34.8L20 34.8L19 34.8L18 34.8L17 34.8L16 34.8L15 34.8L14 34.8L13 34.8L12 34.8L11 34.8L10 34.8L9 34.8L8 34.8L7 34.8L6 34.8L5 34.8L4 34.8L3 34.8L2 34.8L1 34.8L0 34.8Z" fill="#a4bdd4"/></svg>
<div style="position:absolute;left:681px;top:364px;white-space:nowrap;font-size:11.8px;color:#e8f0f8;transform:scaleX(0.93);transform-origin:0 0;">2017.12.17_Hunters hip Hop_12#01</div>
<div style="position:absolute;left:681px;top:364px;white-space:nowrap;font-size:11.8px;color:transparent;transform:scaleX(0.93);transform-origin:0 0;">2017.12.17_Hunters hip Hop_12#01<span style="display:inline-block;width:9px;height:9px;border:1.2px solid #e8f0f8;border-radius:50%;margin-left:9px;vertical-align:-1px;box-sizing:border-box;"></span></div>
<div style="position:absolute;left:660px;top:416px;width:606px;height:50px;background:#2f5a82;border:1.5px solid #070b10;border-radius:4px;overflow:hidden;"></div>
<svg style="position:absolute;left:661px;top:416px;" width="604" height="50" viewBox="0 0 604 50"><path d="M0 33.3 H606" stroke="#a4bdd4" stroke-width="1"/><path transform="translate(-1 0)" d="M0 32.8L1 32.8L2 32.8L3 32.8L4 32.8L5 32.8L6 32.8L7 32.8L8 32.8L9 32.8L10 32.8L11 32.8L12 32.8L13 32.8L14 32.8L15 32.8L16 32.8L17 32.8L18 32.8L19 32.8L20 32.8L21 32.8L22 32.8L23 32.8L24 32.8L25 32.8L26 32.8L27 32.8L28 32.8L29 32.8L30 32.8L31 32.8L32 32.8L33 32.8L34 32.8L35 32.8L36 32.8L37 32.8L38 32.8L39 32.8L40 32.8L41 32.8L42 32.8L43 32.8L44 32.8L45 32.8L46 32.8L47 32.8L48 32.8L49 32.8L50 32.8L51 32.8L52 32.8L53 32.8L54 32.8L55 32.8L56 32.8L57 32.8L58 32.8L59 32.8L60 32.8L61 32.8L62 32.8L63 32.8L64 32.8L65 32.8L66 32.8L67 32.8L68 32.8L69 32.8L70 32.8L71 32.8L72 32.8L73 32.8L74 32.8L75 32.8L76 32.8L77 32.8L78 32.8L79 32.8L80 32.8L81 32.8L82 32.8L83 32.8L84 32.8L85 32.8L86 32.8L87 32.8L88 32.8L89 32.8L90 32.8L91 32.8L92 32.8L93 32.8L94 32.8L95 32.8L96 32.8L97 32.8L98 32.8L99 32.8L100 32.8L101 32.8L102 32.8L103 32.8L104 32.8L105 32.8L106 32.8L107 32.8L108 32.8L109 32.8L110 32.8L111 32.8L112 32.8L113 32.8L114 32.8L115 32.8L116 32.8L117 32.8L118 32.8L119 32.8L120 32.8L121 32.8L122 32.8L123 32.8L124 32.8L125 32.8L126 32.8L127 32.8L128 32.8L129 32.8L130 32.8L131 32.8L132 32.8L133 32.8L134 32.8L135 32.8L136 32.8L137 32.8L138 32.8L139 32.8L140 29.1L141 25.1L142 23.8L143 21.9L144 25.5L145 26.1L146 26.8L147 28.3L148 30.6L149 32.1L150 32.8L151 32.8L152 30.8L153 25.2L154 26.1L155 28.9L156 29.9L157 31.4L158 25.6L159 27.6L160 27.8L161 26.8L162 28.6L163 30.2L164 30.1L165 24.9L166 28.8L167 27.9L168 28.8L169 29.7L170 30.1L171 31.8L172 29.6L173 29.5L174 30.6L175 30.7L176 31.5L177 32.5L178 29.0L179 29.6L180 31.2L181 31.8L182 32.5L183 32.8L184 32.8L185 27.1L186 28.1L187 30.5L188 31.1L189 31.3L190 32.0L191 26.5L192 29.4L193 28.3L194 29.9L195 31.8L196 28.0L197 26.9L198 28.1L199 24.1L200 28.2L201 27.4L202 26.9L203 24.3L204 27.8L205 29.3L206 28.1L207 30.1L208 31.2L209 31.9L210 32.8L211 32.8L212 30.7L213 26.0L214 26.7L215 28.1L216 28.1L217 28.4L218 29.8L219 30.7L220 31.7L221 32.8L222 24.9L223 28.2L224 28.8L225 28.8L226 31.1L227 24.4L228 27.4L229 27.6L230 26.8L231 28.5L232 28.9L233 30.6L234 25.9L235 27.3L236 28.4L237 29.1L238 30.1L239 31.9L240 26.8L241 29.8L242 30.6L243 31.3L244 31.3L245 32.7L246 26.0L247 26.6L248 29.7L249 30.5L250 31.0L251 32.8L252 28.1L253 27.8L254 29.6L255 29.3L256 30.7L257 32.2L258 29.7L259 26.1L260 24.0L261 28.4L262 29.8L263 30.6L264 31.9L265 28.5L266 24.1L267 23.0L268 27.0L269 25.9L270 29.5L271 29.6L272 31.9L273 32.8L274 32.8L275 32.8L276 32.8L277 30.9L278 27.0L279 26.0L280 25.5L281 25.6L282 28.6L283 29.9L284 30.4L285 31.2L286 32.8L287 32.8L288 29.1L289 22.5L290 24.4L291 23.1L292 27.2L293 25.7L294 27.9L295 30.2L296 31.8L297 32.8L298 32.8L299 32.8L300 32.8L301 25.2L302 28.7L303 26.2L304 24.5L305 27.6L306 28.7L307 29.5L308 31.1L309 31.8L310 31.0L311 26.6L312 27.9L313 28.3L314 27.1L315 29.9L316 30.6L317 31.8L318 32.1L319 32.8L320 32.8L321 32.8L322 32.8L323 32.8L324 32.8L325 32.8L326 32.8L327 32.8L328 32.8L329 32.8L330 32.8L331 32.8L332 32.8L333 32.8L334 32.8L335 32.8L336 32.8L337 32.8L338 32.8L339 32.8L340 32.8L341 32.8L342 32.8L343 32.8L344 32.8L345 32.8L346 32.8L347 32.8L348 32.8L349 32.8L350 32.8L351 32.8L352 32.8L353 32.8L354 32.8L355 32.8L356 32.8L357 32.8L358 32.8L359 32.8L360 32.8L361 32.8L362 32.8L363 32.8L364 32.8L365 32.8L366 32.8L367 32.8L368 32.8L369 32.8L370 32.8L371 32.8L372 32.8L373 32.8L374 32.8L375 32.8L376 32.8L377 32.8L378 32.8L379 32.8L380 30.1L381 25.5L382 25.7L383 26.8L384 26.4L385 26.2L386 26.7L387 28.0L388 29.9L389 29.9L390 31.5L391 32.8L392 30.1L393 19.3L394 21.6L395 26.8L396 27.1L397 28.5L398 23.8L399 24.1L400 26.9L401 27.9L402 28.6L403 27.7L404 28.3L405 28.3L406 28.1L407 29.5L408 29.8L409 30.4L410 31.8L411 31.8L412 29.9L413 30.8L414 31.4L415 31.6L416 32.3L417 32.8L418 30.3L419 29.8L420 30.9L421 32.1L422 32.4L423 32.8L424 32.8L425 28.3L426 29.5L427 30.3L428 30.5L429 31.4L430 32.7L431 28.1L432 29.7L433 30.8L434 31.3L435 32.0L436 25.2L437 26.9L438 24.8L439 24.6L440 25.1L441 28.8L442 23.8L443 26.4L444 26.3L445 28.5L446 26.3L447 27.3L448 28.6L449 30.7L450 30.9L451 32.5L452 30.6L453 26.5L454 26.5L455 27.5L456 27.5L457 28.9L458 28.8L459 30.4L460 31.2L461 32.8L462 24.5L463 25.9L464 27.2L465 29.8L466 29.8L467 23.7L468 25.7L469 23.9L470 26.7L471 28.3L472 30.4L473 31.3L474 25.9L475 25.8L476 28.7L477 30.5L478 31.4L479 32.7L480 25.9L481 26.5L482 28.7L483 29.8L484 31.4L485 31.4L486 25.2L487 25.2L488 28.7L489 29.7L490 30.2L491 32.1L492 29.3L493 27.4L494 29.0L495 30.2L496 30.2L497 30.9L498 29.9L499 20.4L500 20.0L501 24.1L502 27.1L503 30.3L504 31.6L505 29.4L506 25.2L507 23.7L508 27.4L509 27.0L510 28.8L511 29.6L512 31.4L513 32.4L514 32.8L515 32.8L516 32.8L517 28.3L518 27.7L519 21.7L520 22.9L521 23.6L522 25.9L523 27.0L524 30.1L525 31.7L526 32.8L527 32.8L528 28.9L529 20.1L530 23.3L531 22.3L532 24.6L533 28.2L534 29.1L535 29.9L536 31.5L537 32.4L538 32.8L539 32.8L540 32.8L541 28.8L542 29.7L543 26.8L544 24.2L545 20.9L546 24.3L547 26.1L548 30.3L549 31.6L550 28.9L551 22.8L552 25.2L553 25.6L554 23.7L555 25.3L556 28.7L557 28.8L558 31.5L559 32.2L560 32.8L561 32.8L562 32.8L563 32.8L564 32.8L565 32.8L566 32.8L567 32.8L568 32.8L569 32.8L570 32.8L571 32.8L572 32.8L573 32.8L574 32.8L575 32.8L576 32.8L577 32.8L578 32.8L579 32.8L580 32.8L581 32.8L582 32.8L583 32.8L584 32.8L585 32.8L586 32.8L587 32.8L588 32.8L589 32.8L590 32.8L591 32.8L592 32.8L593 32.8L594 32.8L595 32.8L596 32.8L597 32.8L598 32.8L599 32.8L600 32.8L601 32.8L602 32.8L603 32.8L604 32.8L605 32.8L606 32.8L606 33.8L605 33.8L604 33.8L603 33.8L602 33.8L601 33.8L600 33.8L599 33.8L598 33.8L597 33.8L596 33.8L595 33.8L594 33.8L593 33.8L592 33.8L591 33.8L590 33.8L589 33.8L588 33.8L587 33.8L586 33.8L585 33.8L584 33.8L583 33.8L582 33.8L581 33.8L580 33.8L579 33.8L578 33.8L577 33.8L576 33.8L575 33.8L574 33.8L573 33.8L572 33.8L571 33.8L570 33.8L569 33.8L568 33.8L567 33.8L566 33.8L565 33.8L564 33.8L563 33.8L562 33.8L561 33.8L560 33.8L559 34.8L558 35.8L557 36.9L556 39.3L555 38.5L554 39.2L553 41.4L552 40.5L551 43.5L550 37.0L549 34.4L548 37.8L547 38.5L546 43.5L545 45.6L544 44.8L543 39.4L542 38.8L541 38.6L540 33.8L539 33.8L538 33.8L537 34.3L536 35.3L535 36.1L534 39.3L533 40.3L532 39.5L531 41.0L530 41.6L529 46.2L528 36.6L527 33.8L526 33.8L525 35.0L524 36.0L523 40.5L522 39.9L521 44.0L520 41.8L519 43.6L518 39.0L517 37.3L516 33.8L515 33.8L514 33.8L513 34.1L512 35.3L511 35.8L510 37.3L509 39.8L508 39.0L507 43.2L506 42.1L505 36.5L504 35.8L503 38.1L502 39.8L501 43.1L500 45.3L499 47.3L498 36.9L497 34.9L496 36.4L495 37.5L494 36.2L493 38.0L492 39.5L491 34.0L490 36.2L489 37.0L488 37.8L487 38.9L486 42.0L485 34.5L484 35.6L483 36.7L482 38.2L481 39.0L480 42.0L479 33.9L478 34.9L477 35.9L476 37.0L475 41.1L474 39.5L473 36.3L472 36.2L471 37.9L470 38.7L469 39.6L468 43.0L467 42.2L466 35.5L465 36.3L464 39.0L463 39.7L462 39.1L461 33.8L460 35.0L459 36.6L458 37.7L457 39.3L456 38.0L455 39.2L454 43.1L453 43.9L452 35.6L451 34.1L450 35.3L449 36.0L448 36.7L447 38.7L446 37.8L445 41.1L444 42.6L443 41.3L442 41.9L441 39.6L440 39.3L439 46.0L438 41.1L437 38.7L436 38.3L435 35.0L434 35.8L433 37.1L432 36.5L431 38.9L430 34.0L429 35.2L428 35.2L427 35.7L426 37.0L425 37.3L424 33.8L423 33.8L422 34.2L421 34.7L420 35.0L419 36.0L418 36.6L417 33.8L416 34.0L415 34.8L414 35.5L413 35.6L412 37.1L411 34.4L410 35.0L409 35.5L408 35.7L407 37.2L406 38.3L405 36.9L404 38.5L403 39.1L402 40.6L401 39.6L400 38.8L399 42.6L398 44.4L397 38.2L396 40.7L395 41.7L394 45.5L393 46.6L392 38.5L391 33.8L390 35.0L389 35.4L388 36.6L387 39.0L386 39.6L385 40.2L384 39.9L383 39.7L382 42.6L381 42.8L380 37.2L379 33.8L378 33.8L377 33.8L376 33.8L375 33.8L374 33.8L373 33.8L372 33.8L371 33.8L370 33.8L369 33.8L368 33.8L367 33.8L366 33.8L365 33.8L364 33.8L363 33.8L362 33.8L361 33.8L360 33.8L359 33.8L358 33.8L357 33.8L356 33.8L355 33.8L354 33.8L353 33.8L352 33.8L351 33.8L350 33.8L349 33.8L348 33.8L347 33.8L346 33.8L345 33.8L344 33.8L343 33.8L342 33.8L341 33.8L340 33.8L339 33.8L338 33.8L337 33.8L336 33.8L335 33.8L334 33.8L333 33.8L332 33.8L331 33.8L330 33.8L329 33.8L328 33.8L327 33.8L326 33.8L325 33.8L324 33.8L323 33.8L322 33.8L321 33.8L320 33.8L319 33.8L318 34.5L317 35.3L316 36.1L315 38.3L314 38.3L313 40.6L312 39.8L311 40.7L310 35.6L309 34.6L308 36.7L307 36.9L306 40.2L305 39.4L304 41.8L303 40.1L302 39.3L301 42.6L300 33.8L299 33.8L298 33.8L297 33.8L296 34.9L295 37.0L294 37.7L293 38.0L292 40.7L291 42.5L290 40.8L289 41.9L288 36.7L287 33.8L286 33.8L285 34.9L284 36.2L283 37.2L282 38.2L281 39.7L280 40.4L279 42.1L278 39.2L277 37.1L276 33.8L275 33.8L274 33.8L273 33.8L272 35.5L271 37.3L270 39.6L269 39.7L268 39.5L267 44.4L266 47.3L265 36.8L264 35.1L263 35.7L262 38.8L261 38.8L260 43.4L259 45.6L258 36.7L257 34.7L256 35.7L255 35.8L254 37.3L253 38.2L252 39.5L251 33.8L250 35.4L249 36.3L248 38.7L247 40.2L246 38.6L245 34.2L244 35.4L243 36.2L242 36.3L241 37.6L240 37.6L239 35.0L238 35.5L237 37.8L236 39.5L235 39.5L234 41.5L233 35.9L232 36.8L231 38.6L230 38.9L229 39.1L228 41.2L227 43.4L226 35.7L225 37.4L224 38.8L223 41.7L222 40.4L221 33.8L220 34.5L219 36.0L218 37.8L217 39.0L216 38.8L215 41.5L214 40.6L213 42.4L212 36.0L211 33.8L210 33.8L209 34.3L208 35.9L207 37.2L206 37.8L205 37.0L204 39.5L203 41.0L202 42.9L201 38.9L200 38.4L199 39.9L198 40.2L197 38.0L196 40.3L195 35.5L194 36.2L193 38.0L192 38.9L191 40.7L190 34.4L189 35.6L188 35.5L187 36.1L186 37.1L185 39.6L184 33.8L183 33.8L182 33.9L181 35.3L180 35.8L179 36.2L178 38.5L177 34.1L176 35.0L175 36.2L174 35.8L173 37.7L172 38.6L171 34.9L170 36.3L169 37.8L168 36.5L167 37.5L166 41.1L165 39.0L164 36.3L163 36.5L162 38.0L161 40.2L160 38.0L159 39.3L158 39.1L157 36.5L156 37.4L155 38.2L154 39.2L153 41.1L152 35.9L151 33.8L150 33.8L149 35.0L148 36.0L147 38.1L146 39.5L145 38.1L144 41.6L143 43.3L142 43.9L141 44.2L140 36.8L139 33.8L138 33.8L137 33.8L136 33.8L135 33.8L134 33.8L133 33.8L132 33.8L131 33.8L130 33.8L129 33.8L128 33.8L127 33.8L126 33.8L125 33.8L124 33.8L123 33.8L122 33.8L121 33.8L120 33.8L119 33.8L118 33.8L117 33.8L116 33.8L115 33.8L114 33.8L113 33.8L112 33.8L111 33.8L110 33.8L109 33.8L108 33.8L107 33.8L106 33.8L105 33.8L104 33.8L103 33.8L102 33.8L101 33.8L100 33.8L99 33.8L98 33.8L97 33.8L96 33.8L95 33.8L94 33.8L93 33.8L92 33.8L91 33.8L90 33.8L89 33.8L88 33.8L87 33.8L86 33.8L85 33.8L84 33.8L83 33.8L82 33.8L81 33.8L80 33.8L79 33.8L78 33.8L77 33.8L76 33.8L75 33.8L74 33.8L73 33.8L72 33.8L71 33.8L70 33.8L69 33.8L68 33.8L67 33.8L66 33.8L65 33.8L64 33.8L63 33.8L62 33.8L61 33.8L60 33.8L59 33.8L58 33.8L57 33.8L56 33.8L55 33.8L54 33.8L53 33.8L52 33.8L51 33.8L50 33.8L49 33.8L48 33.8L47 33.8L46 33.8L45 33.8L44 33.8L43 33.8L42 33.8L41 33.8L40 33.8L39 33.8L38 33.8L37 33.8L36 33.8L35 33.8L34 33.8L33 33.8L32 33.8L31 33.8L30 33.8L29 33.8L28 33.8L27 33.8L26 33.8L25 33.8L24 33.8L23 33.8L22 33.8L21 33.8L20 33.8L19 33.8L18 33.8L17 33.8L16 33.8L15 33.8L14 33.8L13 33.8L12 33.8L11 33.8L10 33.8L9 33.8L8 33.8L7 33.8L6 33.8L5 33.8L4 33.8L3 33.8L2 33.8L1 33.8L0 33.8Z" fill="#a4bdd4"/><path d="M603 15 V46" stroke="#16283a" stroke-width="1"/></svg>
<div style="position:absolute;left:663px;top:420px;width:16px;height:12px;background:#294b6d;border-radius:2px 0 0 2px;"></div>
<svg style="position:absolute;left:666px;top:421px;" width="10" height="10" viewBox="0 0 10 10"><path d="M1.5 1 L8.5 5 L1.5 9Z" fill="#fff"/></svg>
<div style="position:absolute;left:680px;top:420px;width:14px;height:12px;background:#294b6d;border-radius:0 2px 2px 0;"><div style="position:absolute;left:0;right:0;top:-1px;text-align:center;font-size:11.5px;color:#fff;">2</div></div>
<div style="position:absolute;left:698px;top:418px;white-space:nowrap;font-size:11.8px;color:#e8f0f8;transform:scaleX(1.0);transform-origin:0 0;">Audio 8: Take 2</div>
<div style="position:absolute;left:698px;top:418px;white-space:nowrap;font-size:11.8px;color:transparent;transform:scaleX(1.0);transform-origin:0 0;">Audio 8: Take 2<span style="display:inline-block;width:9px;height:9px;border:1.2px solid #e8f0f8;border-radius:50%;margin-left:9px;vertical-align:-1px;box-sizing:border-box;"></span></div>
<div style="position:absolute;left:675px;top:468.5px;width:584px;height:50.5px;background:#2f5a82;border:1.5px solid #070b10;border-radius:4px;overflow:hidden;"></div>
<svg style="position:absolute;left:676px;top:468.5px;" width="582" height="50.5" viewBox="0 0 582 50.5"><path d="M0 34.0 H584" stroke="#a4bdd4" stroke-width="1"/><path transform="translate(-1 0)" d="M0 33.5L1 33.5L2 33.5L3 33.5L4 33.5L5 33.5L6 33.5L7 33.5L8 33.5L9 33.5L10 33.5L11 33.5L12 33.5L13 33.5L14 33.5L15 33.5L16 33.5L17 33.5L18 33.5L19 33.5L20 33.5L21 33.5L22 33.5L23 33.5L24 33.5L25 33.5L26 33.5L27 33.5L28 33.5L29 33.5L30 33.5L31 33.5L32 33.5L33 33.5L34 33.5L35 33.5L36 33.5L37 33.5L38 33.5L39 33.5L40 33.5L41 33.5L42 33.5L43 33.5L44 33.5L45 33.5L46 33.5L47 33.5L48 33.5L49 33.5L50 33.5L51 33.5L52 33.5L53 33.5L54 33.5L55 33.5L56 33.5L57 33.5L58 33.5L59 33.5L60 33.5L61 33.5L62 33.5L63 33.5L64 33.5L65 33.5L66 33.5L67 33.5L68 33.5L69 33.5L70 33.5L71 33.5L72 33.5L73 33.5L74 33.5L75 33.5L76 33.5L77 33.5L78 33.5L79 33.5L80 33.5L81 33.5L82 33.5L83 33.5L84 33.5L85 33.5L86 33.5L87 33.5L88 33.5L89 33.5L90 33.5L91 33.5L92 33.5L93 33.5L94 33.5L95 33.5L96 33.5L97 33.5L98 33.5L99 33.5L100 33.5L101 33.5L102 33.5L103 33.5L104 33.5L105 33.5L106 33.5L107 33.5L108 33.5L109 33.5L110 33.5L111 33.5L112 33.5L113 33.5L114 33.5L115 33.5L116 33.5L117 33.5L118 33.5L119 33.5L120 33.5L121 33.5L122 33.5L123 33.5L124 33.5L125 29.2L126 20.0L127 21.0L128 22.1L129 23.0L130 24.2L131 28.7L132 28.8L133 29.4L134 30.8L135 32.4L136 33.0L137 29.8L138 20.0L139 24.1L140 26.9L141 27.7L142 28.9L143 24.5L144 26.5L145 28.4L146 26.5L147 27.5L148 29.8L149 29.2L150 30.9L151 29.3L152 30.0L153 31.8L154 31.9L155 32.6L156 32.9L157 30.3L158 30.7L159 31.3L160 32.4L161 32.6L162 33.5L163 30.2L164 29.9L165 30.8L166 32.0L167 33.2L168 33.5L169 33.5L170 28.6L171 28.5L172 31.2L173 31.5L174 32.4L175 33.0L176 26.5L177 29.4L178 30.1L179 30.2L180 31.9L181 24.7L182 26.3L183 27.1L184 25.8L185 25.6L186 27.1L187 25.2L188 23.1L189 25.7L190 25.2L191 29.6L192 28.6L193 31.2L194 31.8L195 33.5L196 33.5L197 29.5L198 20.0L199 22.0L200 25.6L201 26.5L202 26.9L203 27.4L204 30.3L205 30.8L206 31.4L207 26.5L208 27.9L209 29.3L210 29.3L211 30.3L212 26.5L213 25.6L214 27.4L215 27.1L216 30.6L217 30.9L218 31.4L219 25.6L220 27.9L221 28.2L222 29.6L223 31.3L224 32.7L225 27.0L226 29.7L227 30.1L228 30.4L229 31.4L230 32.6L231 29.4L232 28.7L233 30.0L234 31.4L235 32.3L236 33.1L237 27.3L238 28.2L239 30.5L240 31.4L241 31.8L242 32.3L243 30.3L244 25.3L245 25.3L246 27.1L247 30.0L248 31.7L249 32.8L250 29.0L251 20.9L252 25.6L253 23.0L254 28.6L255 28.7L256 29.7L257 31.2L258 32.8L259 33.5L260 33.5L261 33.5L262 30.9L263 26.7L264 25.9L265 24.8L266 26.3L267 28.2L268 30.3L269 31.5L270 33.0L271 33.5L272 33.5L273 29.6L274 25.0L275 26.4L276 24.0L277 26.1L278 26.6L279 30.3L280 30.1L281 32.1L282 33.1L283 33.5L284 33.5L285 33.5L286 24.9L287 29.7L288 26.3L289 22.0L290 26.5L291 27.4L292 27.5L293 28.9L294 30.9L295 31.5L296 23.9L297 25.1L298 26.4L299 28.6L300 29.6L301 30.7L302 30.1L303 31.6L304 32.6L305 33.2L306 33.5L307 33.5L308 33.5L309 33.5L310 33.5L311 33.5L312 33.5L313 33.5L314 33.5L315 33.5L316 33.5L317 33.5L318 33.5L319 33.5L320 33.5L321 33.5L322 33.5L323 33.5L324 33.5L325 33.5L326 33.5L327 33.5L328 33.5L329 33.5L330 33.5L331 33.5L332 33.5L333 33.5L334 33.5L335 33.5L336 33.5L337 33.5L338 33.5L339 33.5L340 33.5L341 33.5L342 33.5L343 33.5L344 33.5L345 33.5L346 33.5L347 33.5L348 33.5L349 33.5L350 33.5L351 33.5L352 33.5L353 33.5L354 33.5L355 33.5L356 33.5L357 33.5L358 33.5L359 33.5L360 33.5L361 33.5L362 33.5L363 33.5L364 33.5L365 31.5L366 24.3L367 24.7L368 25.5L369 27.9L370 29.3L371 30.7L372 30.5L373 31.1L374 31.9L375 33.1L376 33.5L377 29.8L378 20.0L379 26.0L380 27.5L381 28.1L382 30.2L383 27.7L384 25.4L385 28.9L386 27.5L387 29.4L388 30.7L389 29.6L390 27.2L391 27.8L392 27.4L393 30.2L394 29.2L395 31.0L396 31.9L397 30.1L398 30.0L399 31.4L400 31.9L401 32.8L402 33.3L403 30.1L404 29.6L405 30.5L406 32.3L407 33.1L408 33.5L409 33.5L410 28.0L411 28.6L412 30.1L413 31.2L414 31.8L415 33.4L416 28.1L417 27.9L418 30.0L419 30.9L420 32.4L421 26.1L422 28.8L423 28.9L424 28.1L425 28.5L426 29.7L427 21.6L428 24.0L429 24.9L430 28.2L431 29.5L432 29.6L433 30.5L434 31.9L435 33.5L436 33.5L437 30.9L438 24.2L439 24.9L440 26.9L441 28.8L442 28.3L443 30.3L444 31.3L445 31.3L446 32.2L447 25.1L448 27.0L449 28.5L450 30.6L451 31.0L452 25.0L453 24.7L454 26.0L455 27.8L456 30.4L457 31.3L458 32.2L459 29.1L460 28.4L461 29.6L462 30.8L463 32.6L464 33.0L465 27.5L466 29.8L467 29.5L468 30.2L469 31.2L470 32.9L471 26.0L472 27.0L473 28.2L474 29.7L475 31.3L476 32.8L477 30.0L478 28.8L479 31.0L480 31.2L481 31.3L482 32.6L483 29.5L484 21.5L485 26.7L486 27.7L487 30.3L488 31.6L489 32.3L490 28.6L491 20.0L492 22.6L493 23.8L494 26.7L495 30.6L496 30.7L497 33.1L498 33.5L499 33.5L500 33.5L501 33.5L502 30.5L503 24.7L504 27.6L505 21.3L506 26.5L507 25.3L508 28.6L509 30.3L510 32.1L511 33.5L512 33.5L513 29.3L514 21.9L515 24.1L516 24.5L517 25.5L518 30.1L519 28.9L520 31.9L521 32.1L522 33.5L523 33.5L524 33.5L525 33.5L526 26.9L527 28.9L528 23.4L529 23.7L530 26.1L531 26.4L532 28.9L533 30.2L534 32.7L535 29.8L536 22.9L537 24.6L538 27.7L539 27.6L540 28.1L541 28.7L542 29.7L543 31.3L544 32.6L545 33.5L546 33.5L547 33.5L548 33.5L549 33.5L550 33.5L551 33.5L552 33.5L553 33.5L554 33.5L555 33.5L556 33.5L557 33.5L558 33.5L559 33.5L560 33.5L561 33.5L562 33.5L563 33.5L564 33.5L565 33.5L566 33.5L567 33.5L568 33.5L569 33.5L570 33.5L571 33.5L572 33.5L573 33.5L574 33.5L575 33.5L576 33.5L577 33.5L578 33.5L579 33.5L580 33.5L581 33.5L582 33.5L583 33.5L584 33.5L584 34.5L583 34.5L582 34.5L581 34.5L580 34.5L579 34.5L578 34.5L577 34.5L576 34.5L575 34.5L574 34.5L573 34.5L572 34.5L571 34.5L570 34.5L569 34.5L568 34.5L567 34.5L566 34.5L565 34.5L564 34.5L563 34.5L562 34.5L561 34.5L560 34.5L559 34.5L558 34.5L557 34.5L556 34.5L555 34.5L554 34.5L553 34.5L552 34.5L551 34.5L550 34.5L549 34.5L548 34.5L547 34.5L546 34.5L545 34.5L544 35.2L543 36.9L542 38.3L541 40.1L540 39.5L539 42.7L538 41.7L537 44.8L536 46.8L535 38.3L534 35.2L533 37.1L532 39.6L531 44.4L530 43.7L529 48.0L528 43.8L527 38.7L526 40.0L525 34.5L524 34.5L523 34.5L522 34.5L521 36.2L520 37.1L519 37.3L518 38.8L517 41.7L516 42.1L515 43.5L514 46.9L513 38.1L512 34.5L511 34.5L510 36.4L509 39.1L508 41.6L507 42.5L506 42.3L505 47.0L504 43.8L503 42.0L502 37.1L501 34.5L500 34.5L499 34.5L498 34.5L497 35.0L496 36.8L495 38.1L494 40.0L493 45.2L492 47.6L491 44.2L490 38.5L489 35.6L488 36.6L487 38.6L486 39.4L485 42.9L484 44.1L483 38.3L482 35.1L481 36.5L480 37.7L479 38.5L478 37.6L477 37.9L476 35.5L475 36.7L474 36.8L473 40.6L472 40.2L471 42.3L470 34.8L469 36.7L468 37.0L467 38.0L466 39.4L465 39.9L464 34.7L463 35.5L462 36.1L461 37.0L460 38.8L459 38.6L458 35.8L457 36.8L456 38.6L455 40.5L454 38.5L453 40.0L452 43.5L451 36.7L450 37.6L449 38.5L448 41.9L447 43.9L446 36.0L445 36.5L444 37.0L443 39.7L442 40.0L441 39.5L440 40.9L439 42.4L438 44.1L437 36.6L436 34.5L435 34.5L434 35.3L433 37.1L432 38.7L431 38.7L430 39.5L429 41.4L428 44.6L427 43.1L426 37.7L425 40.0L424 42.4L423 38.9L422 39.8L421 42.3L420 35.5L419 36.8L418 38.9L417 39.6L416 40.6L415 35.0L414 35.5L413 36.8L412 37.6L411 38.9L410 40.5L409 34.5L408 34.5L407 34.9L406 35.7L405 37.5L404 38.1L403 38.8L402 34.7L401 35.2L400 35.4L399 36.1L398 36.7L397 36.9L396 36.3L395 36.7L394 38.0L393 39.3L392 40.9L391 40.4L390 41.4L389 38.0L388 38.0L387 39.6L386 40.8L385 40.4L384 39.3L383 41.0L382 37.6L381 38.6L380 42.8L379 42.5L378 46.9L377 37.6L376 34.5L375 34.9L374 36.2L373 37.2L372 38.3L371 38.0L370 39.7L369 40.9L368 42.1L367 42.6L366 41.2L365 37.4L364 34.5L363 34.5L362 34.5L361 34.5L360 34.5L359 34.5L358 34.5L357 34.5L356 34.5L355 34.5L354 34.5L353 34.5L352 34.5L351 34.5L350 34.5L349 34.5L348 34.5L347 34.5L346 34.5L345 34.5L344 34.5L343 34.5L342 34.5L341 34.5L340 34.5L339 34.5L338 34.5L337 34.5L336 34.5L335 34.5L334 34.5L333 34.5L332 34.5L331 34.5L330 34.5L329 34.5L328 34.5L327 34.5L326 34.5L325 34.5L324 34.5L323 34.5L322 34.5L321 34.5L320 34.5L319 34.5L318 34.5L317 34.5L316 34.5L315 34.5L314 34.5L313 34.5L312 34.5L311 34.5L310 34.5L309 34.5L308 34.5L307 34.5L306 34.5L305 34.7L304 35.7L303 36.9L302 36.9L301 38.4L300 37.9L299 41.0L298 41.8L297 41.4L296 45.4L295 36.5L294 36.4L293 39.8L292 42.4L291 42.6L290 47.6L289 48.0L288 44.3L287 41.0L286 43.4L285 34.5L284 34.5L283 34.5L282 34.9L281 36.7L280 36.8L279 37.5L278 39.0L277 40.3L276 41.2L275 45.7L274 47.4L273 37.2L272 34.5L271 34.5L270 35.1L269 36.5L268 38.3L267 40.3L266 40.4L265 42.5L264 40.5L263 39.3L262 36.6L261 34.5L260 34.5L259 34.5L258 35.1L257 37.0L256 37.7L255 39.3L254 40.2L253 42.0L252 45.8L251 42.9L250 37.9L249 35.2L248 36.5L247 37.3L246 39.9L245 40.3L244 42.9L243 36.1L242 35.0L241 36.5L240 38.2L239 38.5L238 38.0L237 38.9L236 35.1L235 36.4L234 36.0L233 36.9L232 39.4L231 39.6L230 35.0L229 36.1L228 37.0L227 37.1L226 39.4L225 39.9L224 35.2L223 37.1L222 38.4L221 38.9L220 39.5L219 41.2L218 35.7L217 36.7L216 37.9L215 40.7L214 42.0L213 41.3L212 44.3L211 37.2L210 39.2L209 38.5L208 42.6L207 41.9L206 35.7L205 37.3L204 38.0L203 39.3L202 39.5L201 41.4L200 42.3L199 45.2L198 48.0L197 37.8L196 34.5L195 34.5L194 36.1L193 36.3L192 38.8L191 40.2L190 42.9L189 44.3L188 41.5L187 45.9L186 40.5L185 43.2L184 43.6L183 41.0L182 40.0L181 42.3L180 35.6L179 37.5L178 37.8L177 40.4L176 40.4L175 35.1L174 36.4L173 36.8L172 38.3L171 38.0L170 39.6L169 34.5L168 34.5L167 34.8L166 35.8L165 36.9L164 37.8L163 38.6L162 34.5L161 35.0L160 36.2L159 35.9L158 36.5L157 38.3L156 34.9L155 35.8L154 36.6L153 36.3L152 38.1L151 38.3L150 38.6L149 38.6L148 39.1L147 38.8L146 40.6L145 43.3L144 41.8L143 40.4L142 39.0L141 39.0L140 41.0L139 43.7L138 46.3L137 39.0L136 34.8L135 36.2L134 36.6L133 38.3L132 38.1L131 42.3L130 41.9L129 44.0L128 41.1L127 43.1L126 42.5L125 37.8L124 34.5L123 34.5L122 34.5L121 34.5L120 34.5L119 34.5L118 34.5L117 34.5L116 34.5L115 34.5L114 34.5L113 34.5L112 34.5L111 34.5L110 34.5L109 34.5L108 34.5L107 34.5L106 34.5L105 34.5L104 34.5L103 34.5L102 34.5L101 34.5L100 34.5L99 34.5L98 34.5L97 34.5L96 34.5L95 34.5L94 34.5L93 34.5L92 34.5L91 34.5L90 34.5L89 34.5L88 34.5L87 34.5L86 34.5L85 34.5L84 34.5L83 34.5L82 34.5L81 34.5L80 34.5L79 34.5L78 34.5L77 34.5L76 34.5L75 34.5L74 34.5L73 34.5L72 34.5L71 34.5L70 34.5L69 34.5L68 34.5L67 34.5L66 34.5L65 34.5L64 34.5L63 34.5L62 34.5L61 34.5L60 34.5L59 34.5L58 34.5L57 34.5L56 34.5L55 34.5L54 34.5L53 34.5L52 34.5L51 34.5L50 34.5L49 34.5L48 34.5L47 34.5L46 34.5L45 34.5L44 34.5L43 34.5L42 34.5L41 34.5L40 34.5L39 34.5L38 34.5L37 34.5L36 34.5L35 34.5L34 34.5L33 34.5L32 34.5L31 34.5L30 34.5L29 34.5L28 34.5L27 34.5L26 34.5L25 34.5L24 34.5L23 34.5L22 34.5L21 34.5L20 34.5L19 34.5L18 34.5L17 34.5L16 34.5L15 34.5L14 34.5L13 34.5L12 34.5L11 34.5L10 34.5L9 34.5L8 34.5L7 34.5L6 34.5L5 34.5L4 34.5L3 34.5L2 34.5L1 34.5L0 34.5Z" fill="#a4bdd4"/></svg>
<div style="position:absolute;left:681px;top:470.5px;white-space:nowrap;font-size:11.8px;color:#e8f0f8;transform:scaleX(0.93);transform-origin:0 0;">2017.12.17_Hunters hip Hop_11#01</div>
<div style="position:absolute;left:681px;top:470.5px;white-space:nowrap;font-size:11.8px;color:transparent;transform:scaleX(0.93);transform-origin:0 0;">2017.12.17_Hunters hip Hop_11#01<span style="display:inline-block;width:9px;height:9px;border:1.2px solid #e8f0f8;border-radius:50%;margin-left:9px;vertical-align:-1px;box-sizing:border-box;"></span></div>
<div style="position:absolute;left:660px;top:521.5px;width:600px;height:50.5px;background:#2f5a82;border:1.5px solid #070b10;border-radius:4px;overflow:hidden;"></div>
<svg style="position:absolute;left:661px;top:521.5px;" width="598" height="50.5" viewBox="0 0 598 50.5"><path d="M0 34.0 H600" stroke="#a4bdd4" stroke-width="1"/><path transform="translate(-1 0)" d="M0 33.5L1 33.5L2 33.5L3 33.5L4 33.5L5 33.5L6 33.5L7 33.5L8 33.5L9 33.5L10 33.5L11 33.5L12 33.5L13 33.5L14 33.5L15 33.5L16 33.5L17 33.5L18 33.5L19 33.5L20 33.5L21 33.5L22 33.5L23 33.5L24 33.5L25 33.5L26 33.5L27 33.5L28 33.5L29 33.5L30 33.5L31 33.5L32 33.5L33 33.5L34 33.5L35 33.5L36 33.5L37 33.5L38 33.5L39 33.5L40 33.5L41 33.5L42 33.5L43 33.5L44 33.5L45 33.5L46 33.5L47 33.5L48 33.5L49 33.5L50 33.5L51 33.5L52 33.5L53 33.5L54 33.5L55 33.5L56 33.5L57 33.5L58 33.5L59 33.5L60 33.5L61 33.5L62 33.5L63 33.5L64 33.5L65 33.5L66 33.5L67 33.5L68 33.5L69 33.5L70 33.5L71 33.5L72 33.5L73 33.5L74 33.5L75 33.5L76 33.5L77 33.5L78 33.5L79 33.5L80 33.5L81 33.5L82 33.5L83 33.5L84 33.5L85 33.5L86 33.5L87 33.5L88 33.5L89 33.5L90 33.5L91 33.5L92 33.5L93 33.5L94 33.5L95 33.5L96 33.5L97 33.5L98 33.5L99 33.5L100 33.5L101 33.5L102 33.5L103 33.5L104 33.5L105 33.5L106 33.5L107 33.5L108 33.5L109 33.5L110 33.5L111 33.5L112 33.5L113 33.5L114 33.5L115 33.5L116 33.5L117 33.5L118 33.5L119 33.5L120 33.5L121 33.5L122 33.5L123 33.5L124 33.5L125 33.5L126 33.5L127 33.5L128 33.5L129 33.5L130 33.5L131 33.5L132 33.5L133 33.5L134 33.5L135 33.5L136 33.5L137 33.5L138 33.5L139 33.5L140 29.8L141 21.8L142 25.9L143 26.0L144 25.0L145 27.1L146 27.7L147 31.0L148 31.5L149 31.5L150 33.4L151 33.5L152 30.4L153 20.7L154 24.4L155 25.1L156 28.9L157 28.7L158 25.1L159 24.3L160 24.6L161 26.2L162 26.5L163 29.9L164 29.3L165 29.0L166 29.3L167 31.6L168 31.3L169 32.0L170 32.5L171 33.1L172 31.4L173 30.3L174 31.5L175 31.7L176 32.6L177 33.4L178 28.2L179 29.4L180 31.0L181 32.5L182 33.1L183 33.5L184 33.5L185 30.4L186 30.0L187 30.6L188 31.8L189 32.5L190 33.4L191 29.0L192 31.1L193 31.0L194 32.4L195 32.8L196 28.9L197 27.8L198 26.7L199 27.5L200 28.2L201 29.6L202 26.2L203 22.7L204 26.6L205 27.2L206 28.6L207 30.0L208 30.3L209 31.4L210 32.9L211 33.5L212 29.4L213 24.5L214 23.4L215 27.5L216 27.3L217 25.8L218 27.5L219 29.0L220 30.3L221 32.5L222 24.6L223 27.3L224 28.6L225 30.3L226 31.1L227 27.0L228 28.0L229 29.6L230 30.2L231 29.9L232 30.9L233 32.0L234 26.4L235 27.9L236 29.7L237 31.8L238 32.2L239 33.5L240 28.2L241 28.6L242 29.3L243 30.9L244 32.6L245 33.4L246 27.9L247 26.4L248 28.3L249 29.1L250 31.8L251 32.5L252 28.6L253 29.7L254 28.6L255 31.4L256 31.9L257 31.5L258 30.3L259 26.6L260 27.2L261 29.4L262 29.6L263 31.6L264 33.1L265 30.8L266 21.7L267 26.5L268 25.8L269 28.7L270 28.7L271 30.2L272 32.0L273 33.5L274 33.5L275 33.5L276 33.5L277 31.1L278 24.8L279 27.6L280 23.3L281 25.4L282 29.9L283 29.3L284 31.0L285 33.2L286 33.5L287 33.5L288 30.4L289 21.2L290 27.6L291 26.3L292 26.9L293 30.4L294 31.6L295 31.8L296 33.5L297 33.5L298 33.5L299 33.5L300 33.5L301 25.0L302 30.0L303 25.5L304 20.7L305 23.7L306 25.1L307 29.7L308 30.0L309 33.2L310 30.6L311 20.9L312 20.3L313 25.9L314 23.8L315 29.1L316 30.0L317 30.4L318 31.7L319 32.6L320 33.5L321 33.5L322 33.5L323 33.5L324 33.5L325 33.5L326 33.5L327 33.5L328 33.5L329 33.5L330 33.5L331 33.5L332 33.5L333 33.5L334 33.5L335 33.5L336 33.5L337 33.5L338 33.5L339 33.5L340 33.5L341 33.5L342 33.5L343 33.5L344 33.5L345 33.5L346 33.5L347 33.5L348 33.5L349 33.5L350 33.5L351 33.5L352 33.5L353 33.5L354 33.5L355 33.5L356 33.5L357 33.5L358 33.5L359 33.5L360 33.5L361 33.5L362 33.5L363 33.5L364 33.5L365 33.5L366 33.5L367 33.5L368 33.5L369 33.5L370 33.5L371 33.5L372 33.5L373 33.5L374 33.5L375 33.5L376 33.5L377 33.5L378 33.5L379 33.5L380 29.9L381 23.4L382 20.0L383 22.9L384 23.1L385 28.6L386 29.1L387 30.7L388 30.5L389 32.3L390 33.5L391 33.5L392 31.2L393 22.2L394 27.4L395 26.7L396 28.8L397 29.0L398 26.3L399 28.9L400 28.3L401 29.0L402 28.8L403 30.6L404 29.5L405 29.5L406 29.5L407 29.0L408 30.0L409 31.3L410 32.1L411 33.3L412 30.7L413 30.3L414 31.1L415 32.8L416 33.3L417 33.5L418 29.8L419 30.5L420 31.8L421 32.5L422 32.9L423 33.5L424 33.5L425 29.4L426 28.1L427 30.2L428 31.1L429 31.9L430 32.9L431 29.1L432 29.6L433 31.6L434 31.3L435 32.9L436 26.6L437 29.2L438 28.5L439 26.1L440 30.4L441 30.0L442 22.0L443 24.2L444 28.6L445 27.4L446 28.3L447 29.7L448 31.0L449 31.0L450 32.3L451 33.3L452 28.8L453 23.8L454 22.7L455 27.0L456 26.2L457 27.4L458 29.5L459 28.9L460 31.8L461 32.1L462 25.0L463 28.4L464 29.2L465 28.5L466 30.7L467 27.8L468 28.7L469 27.1L470 29.5L471 30.5L472 31.6L473 31.9L474 27.0L475 30.4L476 30.3L477 31.5L478 32.2L479 33.5L480 27.6L481 29.8L482 28.9L483 29.8L484 32.2L485 32.6L486 28.5L487 27.3L488 29.3L489 30.6L490 32.4L491 33.1L492 27.4L493 29.9L494 29.0L495 31.3L496 30.7L497 31.8L498 30.3L499 24.3L500 25.0L501 27.7L502 29.8L503 31.2L504 33.1L505 30.3L506 23.8L507 24.8L508 28.5L509 29.5L510 30.9L511 32.3L512 33.3L513 33.5L514 33.5L515 33.5L516 33.5L517 29.4L518 29.2L519 27.0L520 22.3L521 25.4L522 28.1L523 29.7L524 31.2L525 32.2L526 33.5L527 33.5L528 29.4L529 22.3L530 22.5L531 23.0L532 28.1L533 26.2L534 28.5L535 29.7L536 32.5L537 33.5L538 33.5L539 33.5L540 33.5L541 25.5L542 28.5L543 26.8L544 20.0L545 22.8L546 23.9L547 27.2L548 27.8L549 31.3L550 31.1L551 25.9L552 27.2L553 26.8L554 27.3L555 30.0L556 31.1L557 31.3L558 31.6L559 33.0L560 33.5L561 33.5L562 33.5L563 33.5L564 33.5L565 33.5L566 33.5L567 33.5L568 33.5L569 33.5L570 33.5L571 33.5L572 33.5L573 33.5L574 33.5L575 33.5L576 33.5L577 33.5L578 33.5L579 33.5L580 33.5L581 33.5L582 33.5L583 33.5L584 33.5L585 33.5L586 33.5L587 33.5L588 33.5L589 33.5L590 33.5L591 33.5L592 33.5L593 33.5L594 33.5L595 33.5L596 33.5L597 33.5L598 33.5L599 33.5L600 33.5L600 34.5L599 34.5L598 34.5L597 34.5L596 34.5L595 34.5L594 34.5L593 34.5L592 34.5L591 34.5L590 34.5L589 34.5L588 34.5L587 34.5L586 34.5L585 34.5L584 34.5L583 34.5L582 34.5L581 34.5L580 34.5L579 34.5L578 34.5L577 34.5L576 34.5L575 34.5L574 34.5L573 34.5L572 34.5L571 34.5L570 34.5L569 34.5L568 34.5L567 34.5L566 34.5L565 34.5L564 34.5L563 34.5L562 34.5L561 34.5L560 34.5L559 35.1L558 35.6L557 37.6L556 37.3L555 39.6L554 38.2L553 39.2L552 42.1L551 43.7L550 36.9L549 36.3L548 38.6L547 39.7L546 42.7L545 43.8L544 48.0L543 41.0L542 38.6L541 43.9L540 34.5L539 34.5L538 34.5L537 34.5L536 36.0L535 37.6L534 40.2L533 41.5L532 43.0L531 41.6L530 43.7L529 48.0L528 37.9L527 34.5L526 34.5L525 35.2L524 36.4L523 38.0L522 42.7L521 45.5L520 45.1L519 44.0L518 41.4L517 38.3L516 34.5L515 34.5L514 34.5L513 34.5L512 35.0L511 36.2L510 36.8L509 37.6L508 39.1L507 43.6L506 43.1L505 37.8L504 34.6L503 36.9L502 39.6L501 39.5L500 40.6L499 42.9L498 37.5L497 36.1L496 36.1L495 36.5L494 38.5L493 37.8L492 38.3L491 34.8L490 36.5L489 36.6L488 37.7L487 40.8L486 40.4L485 35.3L484 36.2L483 36.5L482 37.9L481 38.8L480 41.4L479 34.5L478 35.4L477 36.6L476 36.7L475 37.2L474 40.2L473 35.6L472 36.4L471 38.1L470 38.7L469 40.2L468 41.1L467 40.7L466 37.4L465 37.4L464 38.5L463 42.5L462 42.0L461 35.4L460 37.3L459 38.3L458 40.5L457 38.9L456 43.5L455 42.9L454 46.5L453 48.0L452 39.3L451 34.9L450 36.1L449 36.4L448 38.7L447 39.4L446 40.5L445 40.3L444 43.2L443 40.9L442 44.6L441 36.7L440 38.3L439 40.6L438 39.0L437 40.5L436 41.2L435 35.4L434 36.6L433 37.0L432 38.0L431 39.3L430 35.2L429 35.8L428 37.4L427 38.2L426 38.0L425 40.6L424 34.5L423 34.5L422 35.2L421 36.2L420 37.2L419 37.0L418 37.3L417 34.5L416 34.8L415 35.4L414 35.8L413 37.7L412 38.5L411 35.0L410 35.6L409 36.9L408 36.6L407 37.7L406 37.5L405 38.6L404 38.1L403 39.4L402 39.8L401 40.7L400 40.2L399 43.0L398 43.4L397 37.7L396 40.2L395 42.8L394 43.3L393 47.3L392 38.1L391 34.5L390 34.5L389 35.9L388 36.8L387 39.4L386 38.4L385 42.4L384 43.1L383 43.2L382 44.8L381 48.0L380 37.8L379 34.5L378 34.5L377 34.5L376 34.5L375 34.5L374 34.5L373 34.5L372 34.5L371 34.5L370 34.5L369 34.5L368 34.5L367 34.5L366 34.5L365 34.5L364 34.5L363 34.5L362 34.5L361 34.5L360 34.5L359 34.5L358 34.5L357 34.5L356 34.5L355 34.5L354 34.5L353 34.5L352 34.5L351 34.5L350 34.5L349 34.5L348 34.5L347 34.5L346 34.5L345 34.5L344 34.5L343 34.5L342 34.5L341 34.5L340 34.5L339 34.5L338 34.5L337 34.5L336 34.5L335 34.5L334 34.5L333 34.5L332 34.5L331 34.5L330 34.5L329 34.5L328 34.5L327 34.5L326 34.5L325 34.5L324 34.5L323 34.5L322 34.5L321 34.5L320 34.5L319 35.1L318 36.0L317 38.9L316 39.5L315 39.6L314 41.4L313 44.0L312 44.9L311 43.3L310 39.1L309 34.9L308 37.0L307 39.0L306 43.5L305 45.8L304 46.3L303 40.7L302 37.9L301 39.2L300 34.5L299 34.5L298 34.5L297 34.5L296 34.5L295 35.8L294 37.1L293 38.1L292 39.2L291 40.0L290 44.5L289 42.1L288 37.9L287 34.5L286 34.5L285 35.0L284 35.9L283 38.4L282 38.9L281 42.7L280 42.7L279 41.1L278 41.4L277 36.2L276 34.5L275 34.5L274 34.5L273 34.5L272 35.8L271 38.1L270 38.6L269 39.3L268 43.8L267 42.0L266 42.6L265 38.5L264 34.6L263 36.4L262 37.5L261 38.9L260 41.7L259 40.8L258 37.4L257 36.3L256 36.8L255 38.0L254 38.6L253 39.6L252 39.7L251 35.4L250 37.1L249 38.0L248 38.9L247 42.3L246 39.8L245 34.6L244 36.4L243 36.3L242 37.7L241 38.1L240 41.7L239 34.5L238 36.2L237 37.1L236 37.8L235 38.5L234 42.0L233 36.2L232 36.6L231 37.0L230 39.2L229 39.6L228 39.7L227 39.9L226 36.8L225 38.1L224 38.8L223 42.7L222 42.8L221 35.5L220 36.2L219 39.1L218 40.6L217 41.5L216 42.9L215 41.6L214 42.4L213 47.4L212 36.9L211 34.5L210 35.2L209 37.3L208 37.1L207 38.1L206 40.3L205 41.0L204 43.1L203 45.5L202 41.8L201 38.4L200 42.0L199 41.7L198 40.8L197 41.5L196 43.0L195 35.5L194 36.5L193 37.1L192 37.5L191 37.8L190 34.6L189 35.3L188 36.2L187 36.1L186 37.8L185 39.1L184 34.5L183 34.5L182 35.1L181 36.1L180 37.3L179 38.0L178 38.0L177 34.8L176 35.3L175 35.4L174 36.5L173 37.1L172 38.6L171 35.1L170 35.9L169 35.7L168 36.8L167 36.7L166 37.4L165 37.5L164 37.7L163 38.0L162 40.1L161 42.0L160 40.2L159 41.9L158 44.3L157 37.5L156 40.9L155 40.8L154 42.3L153 48.0L152 38.1L151 34.5L150 34.6L149 36.0L148 37.8L147 39.3L146 38.5L145 39.1L144 40.9L143 41.9L142 46.2L141 44.3L140 37.2L139 34.5L138 34.5L137 34.5L136 34.5L135 34.5L134 34.5L133 34.5L132 34.5L131 34.5L130 34.5L129 34.5L128 34.5L127 34.5L126 34.5L125 34.5L124 34.5L123 34.5L122 34.5L121 34.5L120 34.5L119 34.5L118 34.5L117 34.5L116 34.5L115 34.5L114 34.5L113 34.5L112 34.5L111 34.5L110 34.5L109 34.5L108 34.5L107 34.5L106 34.5L105 34.5L104 34.5L103 34.5L102 34.5L101 34.5L100 34.5L99 34.5L98 34.5L97 34.5L96 34.5L95 34.5L94 34.5L93 34.5L92 34.5L91 34.5L90 34.5L89 34.5L88 34.5L87 34.5L86 34.5L85 34.5L84 34.5L83 34.5L82 34.5L81 34.5L80 34.5L79 34.5L78 34.5L77 34.5L76 34.5L75 34.5L74 34.5L73 34.5L72 34.5L71 34.5L70 34.5L69 34.5L68 34.5L67 34.5L66 34.5L65 34.5L64 34.5L63 34.5L62 34.5L61 34.5L60 34.5L59 34.5L58 34.5L57 34.5L56 34.5L55 34.5L54 34.5L53 34.5L52 34.5L51 34.5L50 34.5L49 34.5L48 34.5L47 34.5L46 34.5L45 34.5L44 34.5L43 34.5L42 34.5L41 34.5L40 34.5L39 34.5L38 34.5L37 34.5L36 34.5L35 34.5L34 34.5L33 34.5L32 34.5L31 34.5L30 34.5L29 34.5L28 34.5L27 34.5L26 34.5L25 34.5L24 34.5L23 34.5L22 34.5L21 34.5L20 34.5L19 34.5L18 34.5L17 34.5L16 34.5L15 34.5L14 34.5L13 34.5L12 34.5L11 34.5L10 34.5L9 34.5L8 34.5L7 34.5L6 34.5L5 34.5L4 34.5L3 34.5L2 34.5L1 34.5L0 34.5Z" fill="#a4bdd4"/></svg>
<div style="position:absolute;left:666px;top:523.5px;white-space:nowrap;font-size:11.8px;color:#e8f0f8;transform:scaleX(0.93);transform-origin:0 0;">2017.12.17_Hunters hip Hop_9#01</div>
<div style="position:absolute;left:666px;top:523.5px;white-space:nowrap;font-size:11.8px;color:transparent;transform:scaleX(0.93);transform-origin:0 0;">2017.12.17_Hunters hip Hop_9#01<span style="display:inline-block;width:9px;height:9px;border:1.2px solid #e8f0f8;border-radius:50%;margin-left:9px;vertical-align:-1px;box-sizing:border-box;"></span></div>
<div style="position:absolute;left:660px;top:574.5px;width:596px;height:50.5px;background:#2f5a82;border:1.5px solid #070b10;border-radius:4px;overflow:hidden;"></div>
<svg style="position:absolute;left:661px;top:574.5px;" width="594" height="50.5" viewBox="0 0 594 50.5"><path d="M0 34.0 H596" stroke="#a4bdd4" stroke-width="1"/><path transform="translate(-1 0)" d="M0 33.5L1 33.5L2 33.5L3 33.5L4 33.5L5 33.5L6 33.5L7 33.5L8 33.5L9 33.5L10 33.5L11 33.5L12 33.5L13 33.5L14 33.5L15 33.5L16 33.5L17 33.5L18 33.5L19 33.5L20 33.5L21 33.5L22 33.5L23 33.5L24 33.5L25 33.5L26 33.5L27 33.5L28 33.5L29 33.5L30 33.5L31 33.5L32 33.5L33 33.5L34 33.5L35 33.5L36 33.5L37 33.5L38 33.5L39 33.5L40 33.5L41 33.5L42 33.5L43 33.5L44 33.5L45 33.5L46 33.5L47 33.5L48 33.5L49 33.5L50 33.5L51 33.5L52 33.5L53 33.5L54 33.5L55 33.5L56 33.5L57 33.5L58 33.5L59 33.5L60 33.5L61 33.5L62 33.5L63 33.5L64 33.5L65 33.5L66 33.5L67 33.5L68 33.5L69 33.5L70 33.5L71 33.5L72 33.5L73 33.5L74 33.5L75 33.5L76 33.5L77 33.5L78 33.5L79 33.5L80 33.5L81 33.5L82 33.5L83 33.5L84 33.5L85 33.5L86 33.5L87 33.5L88 33.5L89 33.5L90 33.5L91 33.5L92 33.5L93 33.5L94 33.5L95 33.5L96 33.5L97 33.5L98 33.5L99 33.5L100 33.5L101 33.5L102 33.5L103 33.5L104 33.5L105 33.5L106 33.5L107 33.5L108 33.5L109 33.5L110 33.5L111 33.5L112 33.5L113 33.5L114 33.5L115 33.5L116 33.5L117 33.5L118 33.5L119 33.5L120 33.5L121 33.5L122 33.5L123 33.5L124 33.5L125 33.5L126 33.5L127 33.5L128 33.5L129 33.5L130 33.5L131 33.5L132 33.5L133 33.5L134 33.5L135 33.5L136 33.5L137 33.5L138 33.5L139 33.5L140 31.4L141 26.1L142 22.3L143 26.1L144 26.9L145 27.2L146 28.4L147 29.7L148 31.6L149 32.0L150 33.0L151 33.5L152 29.8L153 22.1L154 26.0L155 26.6L156 30.5L157 30.6L158 26.0L159 27.7L160 28.5L161 30.1L162 30.8L163 30.9L164 29.7L165 28.8L166 28.8L167 30.3L168 30.7L169 31.7L170 32.1L171 32.9L172 29.6L173 31.7L174 32.2L175 32.5L176 32.7L177 33.5L178 29.9L179 30.1L180 31.4L181 32.1L182 32.7L183 33.5L184 33.5L185 30.5L186 30.8L187 31.3L188 32.1L189 32.8L190 33.5L191 30.8L192 29.7L193 31.4L194 31.5L195 32.7L196 28.6L197 27.5L198 29.7L199 24.3L200 27.6L201 28.1L202 27.1L203 23.7L204 26.4L205 26.5L206 29.1L207 29.1L208 30.5L209 31.8L210 32.9L211 33.5L212 29.4L213 20.0L214 20.1L215 25.0L216 25.1L217 28.3L218 27.4L219 28.8L220 31.4L221 31.7L222 28.2L223 30.1L224 30.9L225 31.5L226 31.7L227 25.3L228 28.0L229 30.0L230 28.5L231 31.3L232 31.9L233 32.4L234 25.7L235 28.1L236 29.9L237 29.8L238 31.4L239 33.4L240 29.3L241 30.2L242 31.2L243 31.3L244 32.9L245 33.5L246 27.5L247 27.3L248 29.4L249 29.8L250 31.2L251 32.7L252 27.6L253 28.7L254 29.7L255 31.2L256 30.8L257 32.0L258 31.1L259 26.2L260 25.9L261 26.2L262 28.7L263 31.6L264 33.2L265 31.0L266 23.2L267 25.7L268 28.6L269 29.6L270 28.6L271 31.4L272 32.6L273 33.5L274 33.5L275 33.5L276 33.5L277 29.8L278 24.9L279 27.6L280 23.3L281 27.4L282 27.1L283 29.5L284 31.5L285 33.1L286 33.5L287 33.5L288 31.2L289 25.6L290 26.7L291 24.5L292 26.9L293 27.6L294 29.6L295 30.6L296 32.0L297 33.5L298 33.5L299 33.5L300 33.5L301 28.3L302 28.9L303 26.9L304 24.5L305 27.7L306 29.5L307 31.1L308 31.6L309 32.9L310 30.9L311 26.3L312 26.0L313 27.5L314 27.6L315 28.5L316 29.7L317 30.7L318 31.5L319 33.2L320 33.5L321 33.5L322 33.5L323 33.5L324 33.5L325 33.5L326 33.5L327 33.5L328 33.5L329 33.5L330 33.5L331 33.5L332 33.5L333 33.5L334 33.5L335 33.5L336 33.5L337 33.5L338 33.5L339 33.5L340 33.5L341 33.5L342 33.5L343 33.5L344 33.5L345 33.5L346 33.5L347 33.5L348 33.5L349 33.5L350 33.5L351 33.5L352 33.5L353 33.5L354 33.5L355 33.5L356 33.5L357 33.5L358 33.5L359 33.5L360 33.5L361 33.5L362 33.5L363 33.5L364 33.5L365 33.5L366 33.5L367 33.5L368 33.5L369 33.5L370 33.5L371 33.5L372 33.5L373 33.5L374 33.5L375 33.5L376 33.5L377 33.5L378 33.5L379 33.5L380 29.5L381 24.7L382 23.6L383 25.2L384 25.3L385 28.5L386 28.5L387 30.0L388 32.2L389 32.7L390 33.5L391 33.5L392 30.4L393 25.4L394 27.9L395 29.1L396 30.1L397 30.8L398 23.8L399 24.0L400 26.6L401 26.1L402 29.4L403 28.9L404 30.2L405 30.3L406 30.3L407 31.0L408 31.8L409 32.0L410 32.2L411 32.7L412 31.2L413 30.9L414 32.1L415 32.3L416 32.9L417 33.5L418 30.5L419 31.1L420 30.6L421 32.0L422 33.2L423 33.5L424 33.5L425 27.7L426 28.7L427 31.5L428 31.3L429 32.3L430 33.5L431 28.1L432 30.3L433 30.6L434 31.1L435 32.4L436 28.0L437 28.2L438 29.9L439 28.2L440 29.8L441 28.8L442 24.9L443 25.1L444 27.6L445 28.5L446 29.5L447 29.2L448 30.5L449 31.9L450 33.2L451 33.5L452 29.0L453 20.7L454 22.4L455 24.6L456 23.6L457 26.0L458 29.4L459 28.6L460 30.2L461 32.5L462 25.8L463 28.5L464 28.5L465 31.2L466 32.0L467 25.0L468 24.2L469 25.0L470 28.1L471 29.1L472 30.5L473 31.4L474 26.2L475 29.7L476 30.8L477 30.7L478 32.2L479 33.1L480 28.7L481 30.1L482 30.3L483 31.1L484 32.1L485 33.1L486 27.7L487 27.0L488 28.5L489 29.5L490 30.8L491 32.8L492 28.9L493 29.5L494 30.5L495 31.7L496 32.3L497 33.1L498 30.0L499 25.3L500 24.6L501 26.5L502 28.5L503 30.8L504 33.0L505 29.7L506 25.8L507 24.3L508 26.0L509 28.1L510 30.6L511 31.4L512 32.2L513 33.5L514 33.5L515 33.5L516 33.5L517 30.1L518 25.8L519 28.1L520 21.7L521 25.4L522 26.9L523 28.6L524 30.9L525 32.5L526 33.5L527 33.5L528 30.7L529 20.4L530 26.1L531 26.4L532 28.5L533 28.9L534 31.5L535 31.6L536 33.2L537 33.5L538 33.5L539 33.5L540 33.5L541 24.6L542 28.2L543 25.5L544 22.8L545 27.3L546 25.4L547 29.6L548 31.8L549 32.9L550 29.3L551 23.3L552 21.7L553 25.6L554 27.8L555 26.4L556 28.1L557 30.2L558 30.6L559 32.2L560 33.5L561 33.5L562 33.5L563 33.5L564 33.5L565 33.5L566 33.5L567 33.5L568 33.5L569 33.5L570 33.5L571 33.5L572 33.5L573 33.5L574 33.5L575 33.5L576 33.5L577 33.5L578 33.5L579 33.5L580 33.5L581 33.5L582 33.5L583 33.5L584 33.5L585 33.5L586 33.5L587 33.5L588 33.5L589 33.5L590 33.5L591 33.5L592 33.5L593 33.5L594 33.5L595 33.5L596 33.5L596 34.5L595 34.5L594 34.5L593 34.5L592 34.5L591 34.5L590 34.5L589 34.5L588 34.5L587 34.5L586 34.5L585 34.5L584 34.5L583 34.5L582 34.5L581 34.5L580 34.5L579 34.5L578 34.5L577 34.5L576 34.5L575 34.5L574 34.5L573 34.5L572 34.5L571 34.5L570 34.5L569 34.5L568 34.5L567 34.5L566 34.5L565 34.5L564 34.5L563 34.5L562 34.5L561 34.5L560 34.5L559 35.4L558 36.9L557 38.2L556 38.2L555 40.3L554 42.4L553 44.7L552 45.6L551 48.0L550 39.0L549 35.1L548 37.2L547 40.3L546 42.0L545 41.9L544 45.3L543 40.0L542 37.9L541 42.4L540 34.5L539 34.5L538 34.5L537 34.5L536 34.6L535 35.9L534 38.0L533 38.0L532 39.0L531 41.3L530 42.5L529 42.1L528 37.4L527 34.5L526 34.5L525 36.2L524 36.6L523 39.0L522 40.2L521 43.6L520 43.6L519 41.6L518 41.3L517 38.2L516 34.5L515 34.5L514 34.5L513 34.5L512 35.1L511 36.4L510 38.9L509 38.5L508 41.1L507 40.6L506 44.0L505 37.6L504 35.1L503 37.2L502 38.9L501 39.8L500 42.3L499 45.2L498 37.0L497 34.9L496 35.8L495 36.4L494 36.5L493 36.9L492 38.4L491 35.6L490 37.2L489 38.3L488 40.4L487 40.6L486 42.7L485 35.1L484 35.9L483 36.7L482 37.8L481 38.5L480 39.6L479 34.8L478 35.6L477 36.4L476 37.8L475 39.5L474 40.8L473 36.5L472 38.5L471 39.9L470 41.2L469 42.6L468 40.9L467 42.9L466 36.4L465 38.4L464 39.9L463 42.5L462 41.2L461 36.0L460 37.3L459 38.4L458 40.1L457 40.6L456 44.0L455 44.7L454 47.6L453 48.0L452 37.9L451 34.5L450 35.2L449 35.9L448 38.1L447 38.5L446 40.9L445 40.4L444 42.6L443 45.6L442 48.0L441 37.2L440 40.0L439 42.4L438 38.5L437 38.4L436 40.3L435 35.1L434 37.1L433 37.1L432 38.4L431 39.2L430 34.5L429 35.4L428 36.8L427 38.5L426 38.2L425 40.6L424 34.5L423 34.5L422 35.3L421 36.4L420 36.9L419 36.7L418 38.4L417 34.5L416 35.4L415 35.4L414 37.0L413 37.9L412 38.3L411 35.3L410 35.7L409 35.6L408 36.8L407 37.5L406 37.3L405 37.6L404 37.3L403 40.3L402 40.4L401 40.9L400 42.3L399 44.2L398 42.0L397 37.3L396 39.0L395 38.6L394 43.4L393 44.1L392 37.7L391 34.5L390 34.5L389 35.2L388 36.2L387 36.7L386 39.7L385 40.2L384 42.4L383 40.1L382 45.1L381 45.6L380 37.5L379 34.5L378 34.5L377 34.5L376 34.5L375 34.5L374 34.5L373 34.5L372 34.5L371 34.5L370 34.5L369 34.5L368 34.5L367 34.5L366 34.5L365 34.5L364 34.5L363 34.5L362 34.5L361 34.5L360 34.5L359 34.5L358 34.5L357 34.5L356 34.5L355 34.5L354 34.5L353 34.5L352 34.5L351 34.5L350 34.5L349 34.5L348 34.5L347 34.5L346 34.5L345 34.5L344 34.5L343 34.5L342 34.5L341 34.5L340 34.5L339 34.5L338 34.5L337 34.5L336 34.5L335 34.5L334 34.5L333 34.5L332 34.5L331 34.5L330 34.5L329 34.5L328 34.5L327 34.5L326 34.5L325 34.5L324 34.5L323 34.5L322 34.5L321 34.5L320 34.5L319 34.9L318 35.5L317 36.7L316 37.3L315 40.6L314 40.9L313 40.2L312 42.4L311 43.6L310 37.7L309 35.0L308 37.0L307 38.3L306 40.0L305 42.6L304 40.7L303 39.4L302 38.3L301 40.0L300 34.5L299 34.5L298 34.5L297 34.5L296 35.9L295 37.3L294 38.9L293 39.4L292 41.4L291 43.5L290 44.4L289 42.1L288 37.7L287 34.5L286 34.5L285 34.7L284 36.4L283 37.7L282 41.8L281 43.6L280 44.0L279 42.0L278 41.6L277 38.1L276 34.5L275 34.5L274 34.5L273 34.5L272 35.9L271 37.1L270 40.0L269 38.5L268 39.3L267 43.0L266 44.6L265 37.0L264 35.1L263 36.4L262 40.3L261 40.3L260 45.1L259 47.0L258 38.5L257 35.7L256 36.0L255 37.0L254 37.9L253 38.9L252 38.4L251 35.8L250 36.0L249 38.2L248 40.2L247 41.6L246 40.4L245 34.5L244 35.6L243 35.7L242 36.3L241 38.6L240 38.3L239 35.0L238 36.7L237 37.6L236 38.8L235 39.3L234 41.6L233 35.0L232 35.9L231 37.6L230 37.2L229 38.8L228 38.8L227 40.9L226 36.8L225 37.3L224 38.9L223 38.6L222 39.5L221 35.8L220 37.9L219 39.9L218 40.3L217 42.7L216 41.8L215 43.3L214 45.2L213 43.1L212 39.3L211 34.5L210 35.1L209 36.5L208 38.1L207 37.3L206 38.0L205 42.2L204 42.9L203 42.9L202 41.9L201 39.6L200 39.9L199 40.3L198 39.9L197 40.9L196 39.1L195 35.2L194 36.3L193 36.6L192 36.6L191 39.2L190 34.5L189 35.1L188 36.0L187 36.1L186 37.3L185 37.5L184 34.5L183 34.5L182 35.2L181 36.4L180 36.9L179 37.9L178 39.3L177 34.5L176 35.2L175 35.7L174 35.8L173 36.9L172 38.0L171 35.3L170 35.5L169 36.7L168 36.8L167 38.3L166 38.7L165 40.1L164 38.0L163 36.9L162 37.5L161 38.3L160 40.5L159 38.5L158 39.4L157 37.7L156 39.9L155 42.0L154 44.1L153 46.8L152 37.5L151 34.5L150 34.9L149 36.1L148 36.5L147 38.9L146 38.8L145 41.4L144 40.9L143 41.8L142 43.1L141 43.9L140 36.7L139 34.5L138 34.5L137 34.5L136 34.5L135 34.5L134 34.5L133 34.5L132 34.5L131 34.5L130 34.5L129 34.5L128 34.5L127 34.5L126 34.5L125 34.5L124 34.5L123 34.5L122 34.5L121 34.5L120 34.5L119 34.5L118 34.5L117 34.5L116 34.5L115 34.5L114 34.5L113 34.5L112 34.5L111 34.5L110 34.5L109 34.5L108 34.5L107 34.5L106 34.5L105 34.5L104 34.5L103 34.5L102 34.5L101 34.5L100 34.5L99 34.5L98 34.5L97 34.5L96 34.5L95 34.5L94 34.5L93 34.5L92 34.5L91 34.5L90 34.5L89 34.5L88 34.5L87 34.5L86 34.5L85 34.5L84 34.5L83 34.5L82 34.5L81 34.5L80 34.5L79 34.5L78 34.5L77 34.5L76 34.5L75 34.5L74 34.5L73 34.5L72 34.5L71 34.5L70 34.5L69 34.5L68 34.5L67 34.5L66 34.5L65 34.5L64 34.5L63 34.5L62 34.5L61 34.5L60 34.5L59 34.5L58 34.5L57 34.5L56 34.5L55 34.5L54 34.5L53 34.5L52 34.5L51 34.5L50 34.5L49 34.5L48 34.5L47 34.5L46 34.5L45 34.5L44 34.5L43 34.5L42 34.5L41 34.5L40 34.5L39 34.5L38 34.5L37 34.5L36 34.5L35 34.5L34 34.5L33 34.5L32 34.5L31 34.5L30 34.5L29 34.5L28 34.5L27 34.5L26 34.5L25 34.5L24 34.5L23 34.5L22 34.5L21 34.5L20 34.5L19 34.5L18 34.5L17 34.5L16 34.5L15 34.5L14 34.5L13 34.5L12 34.5L11 34.5L10 34.5L9 34.5L8 34.5L7 34.5L6 34.5L5 34.5L4 34.5L3 34.5L2 34.5L1 34.5L0 34.5Z" fill="#a4bdd4"/></svg>
<div style="position:absolute;left:666px;top:576.5px;white-space:nowrap;font-size:11.8px;color:#e8f0f8;transform:scaleX(0.93);transform-origin:0 0;">2017.12.17_Hunters hip Hop_10#01</div>
<div style="position:absolute;left:666px;top:576.5px;white-space:nowrap;font-size:11.8px;color:transparent;transform:scaleX(0.93);transform-origin:0 0;">2017.12.17_Hunters hip Hop_10#01<span style="display:inline-block;width:9px;height:9px;border:1.2px solid #e8f0f8;border-radius:50%;margin-left:9px;vertical-align:-1px;box-sizing:border-box;"></span></div>
<div style="position:absolute;left:720px;top:628px;width:508px;height:50px;background:#2f5a82;border:1.5px solid #070b10;border-radius:4px;overflow:hidden;"></div>
<svg style="position:absolute;left:721px;top:628px;" width="506" height="50" viewBox="0 0 506 50"><path d="M0 33.5 H508" stroke="#a4bdd4" stroke-width="1"/><path transform="translate(-1 0)" d="M0 33.0L1 33.0L2 33.0L3 33.0L4 33.0L5 33.0L6 33.0L7 33.0L8 33.0L9 33.0L10 33.0L11 33.0L12 33.0L13 33.0L14 33.0L15 33.0L16 33.0L17 33.0L18 33.0L19 33.0L20 33.0L21 33.0L22 33.0L23 33.0L24 33.0L25 33.0L26 33.0L27 33.0L28 33.0L29 33.0L30 33.0L31 33.0L32 33.0L33 33.0L34 33.0L35 33.0L36 33.0L37 33.0L38 33.0L39 33.0L40 33.0L41 33.0L42 33.0L43 33.0L44 33.0L45 33.0L46 33.0L47 33.0L48 33.0L49 33.0L50 33.0L51 33.0L52 33.0L53 33.0L54 33.0L55 33.0L56 33.0L57 33.0L58 33.0L59 33.0L60 33.0L61 33.0L62 33.0L63 33.0L64 33.0L65 33.0L66 33.0L67 33.0L68 33.0L69 33.0L70 33.0L71 33.0L72 33.0L73 33.0L74 33.0L75 33.0L76 33.0L77 33.0L78 33.0L79 29.0L80 20.9L81 20.2L82 22.4L83 24.0L84 26.4L85 27.2L86 28.6L87 30.1L88 29.8L89 19.5L90 19.7L91 24.3L92 22.7L93 25.9L94 23.1L95 27.3L96 28.3L97 27.9L98 29.3L99 30.7L100 31.6L101 32.5L102 33.0L103 33.0L104 33.0L105 33.0L106 33.0L107 33.0L108 33.0L109 33.0L110 33.0L111 33.0L112 33.0L113 33.0L114 33.0L115 33.0L116 33.0L117 33.0L118 33.0L119 33.0L120 33.0L121 33.0L122 33.0L123 33.0L124 33.0L125 33.0L126 33.0L127 33.0L128 33.0L129 33.0L130 33.0L131 33.0L132 33.0L133 33.0L134 33.0L135 33.0L136 33.0L137 33.0L138 33.0L139 29.5L140 19.5L141 22.9L142 24.5L143 22.0L144 27.0L145 28.1L146 28.3L147 30.4L148 29.7L149 21.9L150 22.2L151 20.8L152 23.3L153 25.5L154 23.3L155 26.9L156 26.7L157 28.7L158 28.5L159 30.1L160 31.3L161 32.0L162 32.8L163 33.0L164 33.0L165 33.0L166 33.0L167 33.0L168 33.0L169 33.0L170 33.0L171 33.0L172 33.0L173 33.0L174 33.0L175 33.0L176 33.0L177 33.0L178 33.0L179 33.0L180 33.0L181 33.0L182 33.0L183 33.0L184 33.0L185 33.0L186 33.0L187 33.0L188 33.0L189 33.0L190 33.0L191 33.0L192 33.0L193 33.0L194 33.0L195 33.0L196 33.0L197 33.0L198 33.0L199 33.0L200 33.0L201 33.0L202 33.0L203 33.0L204 33.0L205 33.0L206 33.0L207 33.0L208 33.0L209 33.0L210 33.0L211 33.0L212 33.0L213 33.0L214 33.0L215 33.0L216 33.0L217 33.0L218 33.0L219 33.0L220 33.0L221 33.0L222 33.0L223 33.0L224 33.0L225 33.0L226 33.0L227 33.0L228 33.0L229 33.0L230 33.0L231 33.0L232 33.0L233 33.0L234 33.0L235 33.0L236 33.0L237 33.0L238 33.0L239 33.0L240 33.0L241 33.0L242 33.0L243 33.0L244 33.0L245 33.0L246 33.0L247 33.0L248 33.0L249 33.0L250 33.0L251 33.0L252 33.0L253 33.0L254 33.0L255 33.0L256 33.0L257 33.0L258 33.0L259 33.0L260 33.0L261 33.0L262 33.0L263 33.0L264 33.0L265 33.0L266 33.0L267 33.0L268 33.0L269 33.0L270 33.0L271 33.0L272 33.0L273 33.0L274 33.0L275 33.0L276 33.0L277 33.0L278 33.0L279 33.0L280 33.0L281 33.0L282 33.0L283 33.0L284 33.0L285 33.0L286 33.0L287 33.0L288 33.0L289 33.0L290 33.0L291 33.0L292 33.0L293 33.0L294 33.0L295 33.0L296 33.0L297 33.0L298 33.0L299 33.0L300 33.0L301 33.0L302 33.0L303 33.0L304 33.0L305 33.0L306 33.0L307 33.0L308 33.0L309 33.0L310 33.0L311 33.0L312 33.0L313 33.0L314 33.0L315 33.0L316 33.0L317 33.0L318 28.9L319 22.2L320 23.8L321 23.1L322 22.9L323 24.7L324 28.3L325 28.6L326 30.2L327 28.9L328 21.4L329 19.9L330 22.2L331 25.2L332 26.5L333 23.9L334 27.7L335 28.4L336 29.7L337 31.0L338 31.5L339 32.6L340 33.0L341 33.0L342 33.0L343 33.0L344 33.0L345 33.0L346 33.0L347 33.0L348 33.0L349 33.0L350 33.0L351 33.0L352 33.0L353 33.0L354 33.0L355 33.0L356 33.0L357 33.0L358 33.0L359 33.0L360 33.0L361 33.0L362 33.0L363 33.0L364 33.0L365 33.0L366 33.0L367 33.0L368 33.0L369 33.0L370 33.0L371 33.0L372 33.0L373 33.0L374 33.0L375 33.0L376 33.0L377 33.0L378 28.6L379 21.4L380 20.7L381 24.0L382 22.0L383 25.5L384 28.1L385 30.3L386 30.8L387 28.7L388 19.7L389 21.9L390 24.2L391 25.2L392 24.5L393 24.0L394 26.0L395 27.7L396 28.5L397 29.5L398 29.4L399 30.9L400 31.9L401 32.8L402 33.0L403 33.0L404 33.0L405 33.0L406 33.0L407 33.0L408 33.0L409 33.0L410 33.0L411 33.0L412 33.0L413 33.0L414 33.0L415 33.0L416 33.0L417 33.0L418 33.0L419 33.0L420 33.0L421 33.0L422 33.0L423 33.0L424 33.0L425 33.0L426 33.0L427 33.0L428 33.0L429 33.0L430 33.0L431 33.0L432 33.0L433 33.0L434 33.0L435 33.0L436 33.0L437 33.0L438 33.0L439 33.0L440 33.0L441 33.0L442 33.0L443 33.0L444 33.0L445 33.0L446 33.0L447 33.0L448 33.0L449 33.0L450 33.0L451 33.0L452 33.0L453 33.0L454 33.0L455 33.0L456 33.0L457 33.0L458 33.0L459 33.0L460 33.0L461 33.0L462 33.0L463 33.0L464 33.0L465 33.0L466 33.0L467 33.0L468 33.0L469 33.0L470 33.0L471 33.0L472 33.0L473 33.0L474 33.0L475 33.0L476 33.0L477 33.0L478 33.0L479 33.0L480 33.0L481 33.0L482 33.0L483 33.0L484 33.0L485 33.0L486 33.0L487 33.0L488 33.0L489 33.0L490 33.0L491 33.0L492 33.0L493 33.0L494 33.0L495 33.0L496 33.0L497 33.0L498 33.0L499 33.0L500 33.0L501 33.0L502 33.0L503 33.0L504 33.0L505 33.0L506 33.0L507 33.0L508 33.0L508 34.0L507 34.0L506 34.0L505 34.0L504 34.0L503 34.0L502 34.0L501 34.0L500 34.0L499 34.0L498 34.0L497 34.0L496 34.0L495 34.0L494 34.0L493 34.0L492 34.0L491 34.0L490 34.0L489 34.0L488 34.0L487 34.0L486 34.0L485 34.0L484 34.0L483 34.0L482 34.0L481 34.0L480 34.0L479 34.0L478 34.0L477 34.0L476 34.0L475 34.0L474 34.0L473 34.0L472 34.0L471 34.0L470 34.0L469 34.0L468 34.0L467 34.0L466 34.0L465 34.0L464 34.0L463 34.0L462 34.0L461 34.0L460 34.0L459 34.0L458 34.0L457 34.0L456 34.0L455 34.0L454 34.0L453 34.0L452 34.0L451 34.0L450 34.0L449 34.0L448 34.0L447 34.0L446 34.0L445 34.0L444 34.0L443 34.0L442 34.0L441 34.0L440 34.0L439 34.0L438 34.0L437 34.0L436 34.0L435 34.0L434 34.0L433 34.0L432 34.0L431 34.0L430 34.0L429 34.0L428 34.0L427 34.0L426 34.0L425 34.0L424 34.0L423 34.0L422 34.0L421 34.0L420 34.0L419 34.0L418 34.0L417 34.0L416 34.0L415 34.0L414 34.0L413 34.0L412 34.0L411 34.0L410 34.0L409 34.0L408 34.0L407 34.0L406 34.0L405 34.0L404 34.0L403 34.0L402 34.0L401 34.3L400 35.3L399 36.5L398 37.3L397 37.5L396 39.2L395 38.7L394 41.8L393 42.4L392 41.7L391 43.9L390 45.4L389 46.7L388 46.6L387 37.8L386 36.1L385 37.5L384 39.0L383 40.8L382 44.0L381 44.3L380 46.2L379 47.1L378 38.6L377 34.0L376 34.0L375 34.0L374 34.0L373 34.0L372 34.0L371 34.0L370 34.0L369 34.0L368 34.0L367 34.0L366 34.0L365 34.0L364 34.0L363 34.0L362 34.0L361 34.0L360 34.0L359 34.0L358 34.0L357 34.0L356 34.0L355 34.0L354 34.0L353 34.0L352 34.0L351 34.0L350 34.0L349 34.0L348 34.0L347 34.0L346 34.0L345 34.0L344 34.0L343 34.0L342 34.0L341 34.0L340 34.0L339 34.4L338 35.7L337 36.5L336 38.3L335 39.1L334 40.8L333 43.9L332 43.1L331 41.4L330 44.4L329 45.8L328 47.5L327 37.4L326 37.0L325 37.7L324 39.3L323 40.4L322 42.9L321 44.9L320 43.9L319 47.2L318 37.6L317 34.0L316 34.0L315 34.0L314 34.0L313 34.0L312 34.0L311 34.0L310 34.0L309 34.0L308 34.0L307 34.0L306 34.0L305 34.0L304 34.0L303 34.0L302 34.0L301 34.0L300 34.0L299 34.0L298 34.0L297 34.0L296 34.0L295 34.0L294 34.0L293 34.0L292 34.0L291 34.0L290 34.0L289 34.0L288 34.0L287 34.0L286 34.0L285 34.0L284 34.0L283 34.0L282 34.0L281 34.0L280 34.0L279 34.0L278 34.0L277 34.0L276 34.0L275 34.0L274 34.0L273 34.0L272 34.0L271 34.0L270 34.0L269 34.0L268 34.0L267 34.0L266 34.0L265 34.0L264 34.0L263 34.0L262 34.0L261 34.0L260 34.0L259 34.0L258 34.0L257 34.0L256 34.0L255 34.0L254 34.0L253 34.0L252 34.0L251 34.0L250 34.0L249 34.0L248 34.0L247 34.0L246 34.0L245 34.0L244 34.0L243 34.0L242 34.0L241 34.0L240 34.0L239 34.0L238 34.0L237 34.0L236 34.0L235 34.0L234 34.0L233 34.0L232 34.0L231 34.0L230 34.0L229 34.0L228 34.0L227 34.0L226 34.0L225 34.0L224 34.0L223 34.0L222 34.0L221 34.0L220 34.0L219 34.0L218 34.0L217 34.0L216 34.0L215 34.0L214 34.0L213 34.0L212 34.0L211 34.0L210 34.0L209 34.0L208 34.0L207 34.0L206 34.0L205 34.0L204 34.0L203 34.0L202 34.0L201 34.0L200 34.0L199 34.0L198 34.0L197 34.0L196 34.0L195 34.0L194 34.0L193 34.0L192 34.0L191 34.0L190 34.0L189 34.0L188 34.0L187 34.0L186 34.0L185 34.0L184 34.0L183 34.0L182 34.0L181 34.0L180 34.0L179 34.0L178 34.0L177 34.0L176 34.0L175 34.0L174 34.0L173 34.0L172 34.0L171 34.0L170 34.0L169 34.0L168 34.0L167 34.0L166 34.0L165 34.0L164 34.0L163 34.0L162 34.3L161 35.3L160 36.5L159 36.5L158 38.1L157 39.7L156 40.8L155 39.9L154 43.4L153 41.5L152 44.8L151 44.3L150 45.1L149 46.7L148 38.1L147 36.4L146 37.9L145 39.0L144 42.3L143 44.2L142 43.2L141 46.5L140 47.5L139 37.6L138 34.0L137 34.0L136 34.0L135 34.0L134 34.0L133 34.0L132 34.0L131 34.0L130 34.0L129 34.0L128 34.0L127 34.0L126 34.0L125 34.0L124 34.0L123 34.0L122 34.0L121 34.0L120 34.0L119 34.0L118 34.0L117 34.0L116 34.0L115 34.0L114 34.0L113 34.0L112 34.0L111 34.0L110 34.0L109 34.0L108 34.0L107 34.0L106 34.0L105 34.0L104 34.0L103 34.0L102 34.0L101 34.6L100 35.8L99 36.9L98 37.5L97 38.0L96 38.6L95 40.0L94 43.2L93 41.9L92 42.6L91 44.8L90 44.9L89 46.1L88 37.5L87 36.8L86 37.7L85 39.0L84 40.0L83 42.7L82 44.2L81 46.8L80 45.3L79 38.2L78 34.0L77 34.0L76 34.0L75 34.0L74 34.0L73 34.0L72 34.0L71 34.0L70 34.0L69 34.0L68 34.0L67 34.0L66 34.0L65 34.0L64 34.0L63 34.0L62 34.0L61 34.0L60 34.0L59 34.0L58 34.0L57 34.0L56 34.0L55 34.0L54 34.0L53 34.0L52 34.0L51 34.0L50 34.0L49 34.0L48 34.0L47 34.0L46 34.0L45 34.0L44 34.0L43 34.0L42 34.0L41 34.0L40 34.0L39 34.0L38 34.0L37 34.0L36 34.0L35 34.0L34 34.0L33 34.0L32 34.0L31 34.0L30 34.0L29 34.0L28 34.0L27 34.0L26 34.0L25 34.0L24 34.0L23 34.0L22 34.0L21 34.0L20 34.0L19 34.0L18 34.0L17 34.0L16 34.0L15 34.0L14 34.0L13 34.0L12 34.0L11 34.0L10 34.0L9 34.0L8 34.0L7 34.0L6 34.0L5 34.0L4 34.0L3 34.0L2 34.0L1 34.0L0 34.0Z" fill="#a4bdd4"/><path d="M504 15 V46" stroke="#16283a" stroke-width="1"/></svg>
<div style="position:absolute;left:723px;top:632px;width:16px;height:12px;background:#294b6d;border-radius:2px 0 0 2px;"></div>
<svg style="position:absolute;left:726px;top:633px;" width="10" height="10" viewBox="0 0 10 10"><path d="M1.5 1 L8.5 5 L1.5 9Z" fill="#fff"/></svg>
<div style="position:absolute;left:740px;top:632px;width:14px;height:12px;background:#294b6d;border-radius:0 2px 2px 0;"><div style="position:absolute;left:0;right:0;top:-1px;text-align:center;font-size:11.5px;color:#fff;">2</div></div>
<div style="position:absolute;left:758px;top:630px;white-space:nowrap;font-size:11.8px;color:#e8f0f8;transform:scaleX(1.0);transform-origin:0 0;">Audio 13: Take 2</div>
<div style="position:absolute;left:758px;top:630px;white-space:nowrap;font-size:11.8px;color:transparent;transform:scaleX(1.0);transform-origin:0 0;">Audio 13: Take 2<span style="display:inline-block;width:9px;height:9px;border:1.2px solid #e8f0f8;border-radius:50%;margin-left:9px;vertical-align:-1px;box-sizing:border-box;"></span></div>
<div style="position:absolute;left:261px;top:107px;width:1068px;height:692px;border:2px solid #80c1fb;border-radius:5px;box-shadow:inset 0 0 0 1px #0a0a0a;"></div>
<div style="position:absolute;left:53px;top:798px;width:207px;height:1.5px;background:#8a8a8a;"></div>
<div style="position:absolute;left:0px;top:799.5px;width:1377px;height:75px;background:#000;"></div>
<div style="position:absolute;left:1329px;top:0px;width:48px;height:874px;background:#000;"></div>
</body></html>
